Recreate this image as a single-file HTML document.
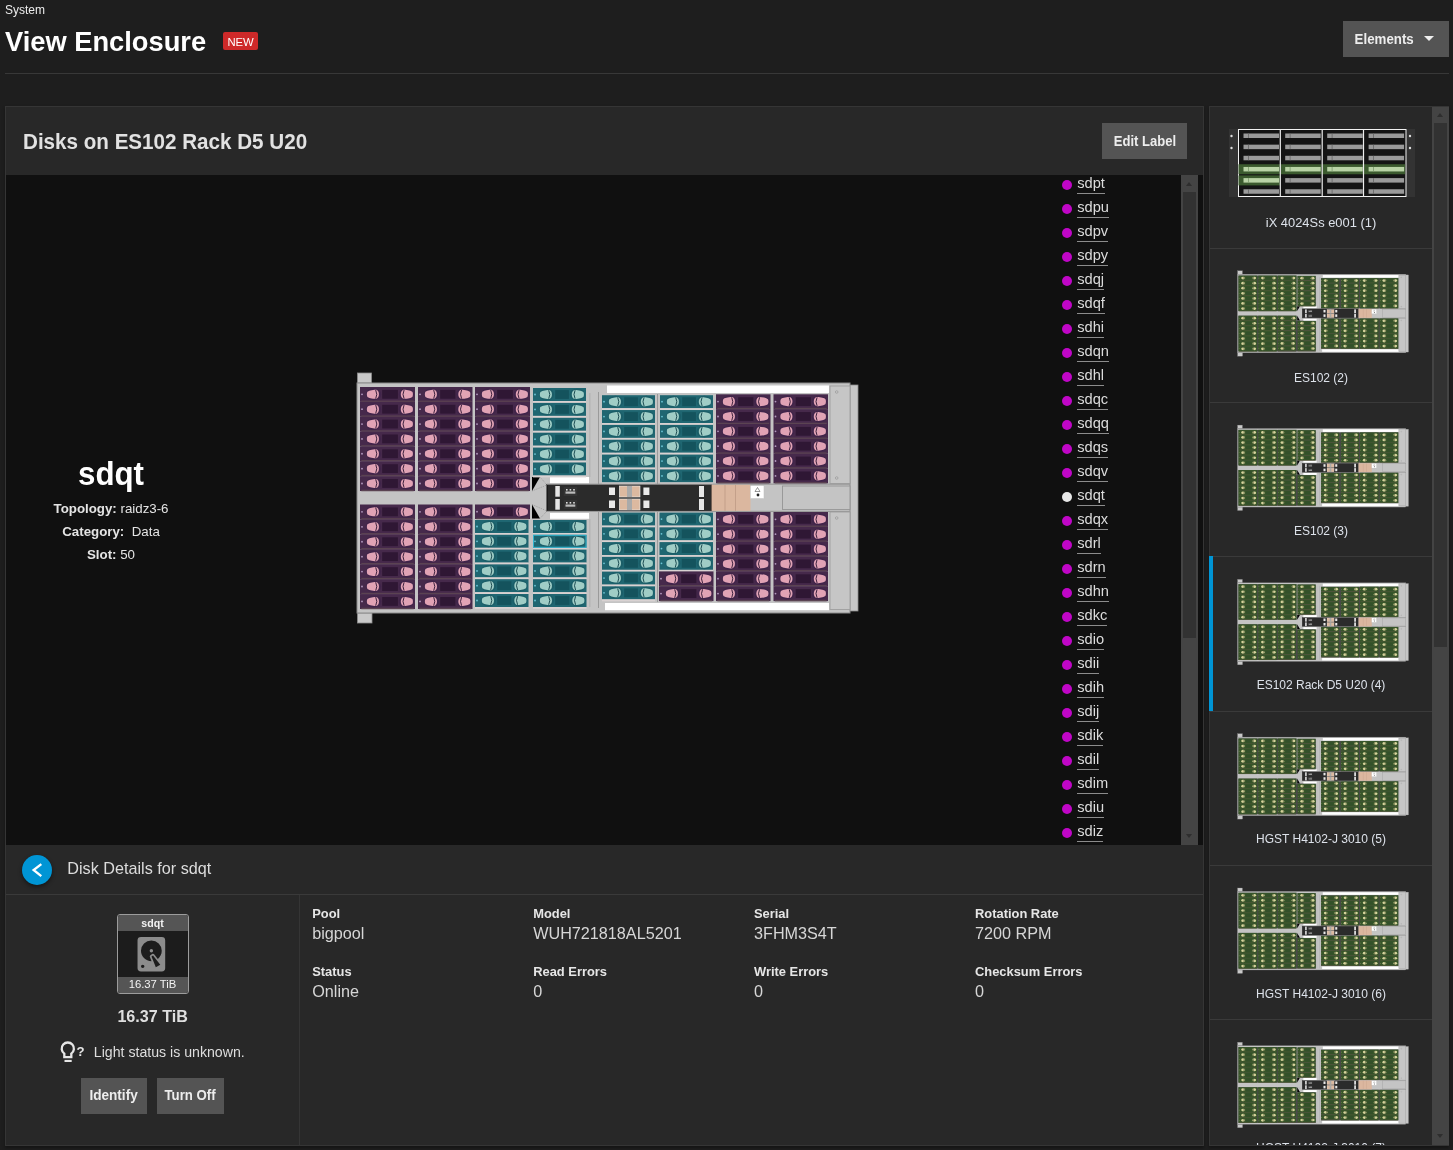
<!DOCTYPE html>
<html><head><meta charset="utf-8"><title>View Enclosure</title>
<style>
html,body{margin:0;padding:0;}
body{width:1453px;height:1150px;overflow:hidden;background:#1e1e1e;position:relative;will-change:transform;font-family:"Liberation Sans",sans-serif;color:#e0e0e0;}
.a{position:absolute;}
.t{position:absolute;white-space:nowrap;line-height:1;}
.b{font-weight:bold;}
.btn{position:absolute;background:#545454;}
.li{position:absolute;left:1061px;height:24px;width:60px;}
.li i{position:absolute;left:0.7px;top:7px;width:10px;height:10px;border-radius:50%;}
.li span{position:absolute;left:16.2px;top:2.7px;font-size:14.65px;line-height:14.65px;padding-bottom:3px;border-bottom:1px solid #8c8c8c;color:#dcdcdc;white-space:nowrap;}
.lbl{position:absolute;white-space:nowrap;line-height:1;font-size:12.9px;font-weight:bold;color:#e6e6e6;}
.val{position:absolute;white-space:nowrap;line-height:1;font-size:16.2px;color:#d6d6d6;}
.sl{position:absolute;left:1210px;width:222px;text-align:center;font-size:12px;line-height:1;color:#dde2ea;white-space:nowrap;}
.dv{position:absolute;left:1210px;width:222px;height:1px;background:#3a3a3a;}
</style></head>
<body>
<!-- page header -->
<div class="t" style="left:5px;top:4.1px;font-size:12px;color:#ececec;">System</div>
<div class="t b" style="left:5px;top:26.5px;font-size:28.5px;color:#ffffff;transform:scaleX(0.957);transform-origin:0 0;">View Enclosure</div>
<div class="a" style="left:223px;top:32px;width:35px;height:18px;background:#ce2929;border-radius:2px;"></div>
<div class="t" style="left:227.4px;top:36.6px;font-size:11.3px;color:#fff;">NEW</div>
<div class="btn" style="left:1343px;top:21px;width:106px;height:36px;"></div>
<div class="t b" style="left:1354.6px;top:32.6px;font-size:13.3px;color:#ededed;transform:scale(1,1.13);transform-origin:0 11.26px;">Elements</div>
<div class="a" style="left:1423.6px;top:35.8px;width:0;height:0;border-left:5.2px solid transparent;border-right:5.2px solid transparent;border-top:5.5px solid #eeeeee;"></div>
<div class="a" style="left:5px;top:73px;width:1444px;height:1px;background:#383838;"></div>

<!-- main card -->
<div class="a" style="left:5px;top:106px;width:1197px;height:1038px;border:1px solid #353535;background:#282828;box-shadow:0 2px 3px rgba(0,0,0,0.35);"></div>
<div class="t b" style="left:22.8px;top:130.5px;font-size:22.5px;color:#e2e2e2;transform:scaleX(0.916);transform-origin:0 0;">Disks on ES102 Rack D5 U20</div>
<div class="btn" style="left:1102px;top:123px;width:85px;height:36px;"></div>
<div class="t b" style="left:1113.8px;top:134.5px;font-size:13.06px;color:#ededed;transform:scale(1,1.13);transform-origin:0 11.06px;">Edit Label</div>
<div class="a" style="left:6px;top:175px;width:1197px;height:670px;background:#101010;"></div>

<!-- selected disk info -->
<div class="t b" style="left:111px;top:456px;font-size:34px;color:#ffffff;transform:translateX(-50%) scaleX(0.92);">sdqt</div>
<div class="t" style="left:111px;top:502px;font-size:13.3px;color:#e4e4e4;transform:translateX(-50%);"><b>Topology:</b> raidz3-6</div>
<div class="t" style="left:111px;top:525px;font-size:13.3px;color:#e4e4e4;transform:translateX(-50%);"><b>Category:</b>&nbsp; Data</div>
<div class="t" style="left:111px;top:548px;font-size:13.3px;color:#e4e4e4;transform:translateX(-50%);"><b>Slot:</b> 50</div>

<!-- disk list -->
<div class="li" style="top:173px"><i style="background:#c006c7"></i><span>sdpt</span></div><div class="li" style="top:197px"><i style="background:#c006c7"></i><span>sdpu</span></div><div class="li" style="top:221px"><i style="background:#c006c7"></i><span>sdpv</span></div><div class="li" style="top:245px"><i style="background:#c006c7"></i><span>sdpy</span></div><div class="li" style="top:269px"><i style="background:#c006c7"></i><span>sdqj</span></div><div class="li" style="top:293px"><i style="background:#c006c7"></i><span>sdqf</span></div><div class="li" style="top:317px"><i style="background:#c006c7"></i><span>sdhi</span></div><div class="li" style="top:341px"><i style="background:#c006c7"></i><span>sdqn</span></div><div class="li" style="top:365px"><i style="background:#c006c7"></i><span>sdhl</span></div><div class="li" style="top:389px"><i style="background:#c006c7"></i><span>sdqc</span></div><div class="li" style="top:413px"><i style="background:#c006c7"></i><span>sdqq</span></div><div class="li" style="top:437px"><i style="background:#c006c7"></i><span>sdqs</span></div><div class="li" style="top:461px"><i style="background:#c006c7"></i><span>sdqv</span></div><div class="li" style="top:485px"><i style="background:#e8e8e8"></i><span>sdqt</span></div><div class="li" style="top:509px"><i style="background:#c006c7"></i><span>sdqx</span></div><div class="li" style="top:533px"><i style="background:#c006c7"></i><span>sdrl</span></div><div class="li" style="top:557px"><i style="background:#c006c7"></i><span>sdrn</span></div><div class="li" style="top:581px"><i style="background:#c006c7"></i><span>sdhn</span></div><div class="li" style="top:605px"><i style="background:#c006c7"></i><span>sdkc</span></div><div class="li" style="top:629px"><i style="background:#c006c7"></i><span>sdio</span></div><div class="li" style="top:653px"><i style="background:#c006c7"></i><span>sdii</span></div><div class="li" style="top:677px"><i style="background:#c006c7"></i><span>sdih</span></div><div class="li" style="top:701px"><i style="background:#c006c7"></i><span>sdij</span></div><div class="li" style="top:725px"><i style="background:#c006c7"></i><span>sdik</span></div><div class="li" style="top:749px"><i style="background:#c006c7"></i><span>sdil</span></div><div class="li" style="top:773px"><i style="background:#c006c7"></i><span>sdim</span></div><div class="li" style="top:797px"><i style="background:#c006c7"></i><span>sdiu</span></div><div class="li" style="top:821px"><i style="background:#c006c7"></i><span>sdiz</span></div>
<div class="a" style="left:1181px;top:175px;width:17px;height:670px;background:#444444;"></div>
<div class="a" style="left:1183px;top:192px;width:13px;height:446px;background:#323232;"></div>
<div class="a" style="left:1186px;top:182px;width:0;height:0;border-left:3.6px solid transparent;border-right:3.6px solid transparent;border-bottom:4px solid #2e2e2e;"></div>
<div class="a" style="left:1186px;top:834px;width:0;height:0;border-left:3.6px solid transparent;border-right:3.6px solid transparent;border-top:4px solid #2e2e2e;"></div>

<!-- details header -->
<div class="a" style="left:22px;top:855px;width:30px;height:30px;border-radius:50%;background:#0095d5;box-shadow:0 2px 4px rgba(0,0,0,0.45);"></div>
<svg class="a" style="left:22px;top:855px;" width="30" height="30"><path d="M18.4 9.8L11.6 15l6.8 5.4" stroke="#fff" stroke-width="2.3" fill="none" stroke-linecap="square"/></svg>
<div class="t" style="left:67.3px;top:859.6px;font-size:16.2px;color:#dcdcdc;">Disk Details for sdqt</div>
<div class="a" style="left:6px;top:894px;width:1197px;height:1px;background:#3a3a3a;"></div>
<div class="a" style="left:299px;top:895px;width:1px;height:250px;background:#353535;"></div>

<!-- disk icon -->
<div class="a" style="left:117px;top:914px;width:70px;height:78px;border:1px solid #9c9c9c;border-radius:3px;background:#1c1c1c;overflow:hidden;">
  <div class="a" style="left:0;top:0;width:70px;height:16px;background:#555;"></div>
  <div class="a" style="left:0;top:62px;width:70px;height:16px;background:#555;"></div>
</div>
<div class="t b" style="left:152.5px;top:917.6px;font-size:10.6px;color:#f2f2f2;transform:translateX(-50%);">sdqt</div>
<div class="t" style="left:152.5px;top:979.1px;font-size:11.3px;color:#f2f2f2;transform:translateX(-50%);">16.37 TiB</div>
<svg class="a" style="left:0;top:0;" width="300" height="1150" viewBox="0 0 300 1150"><g transform="translate(130.6 933.5) scale(1.73)"><path fill="#8c8c8c" d="M6,2H18A2,2 0 0,1 20,4V20A2,2 0 0,1 18,22H6A2,2 0 0,1 4,20V4A2,2 0 0,1 6,2M12,4A6,6 0 0,0 6,10C6,13.31 8.69,16 12.1,16L11.22,13.77C10.95,13.29 11.11,12.68 11.59,12.4L12.45,11.9C12.93,11.63 13.54,11.79 13.820,12.27L15.74,14.690C17.12,13.59 18,11.9 18,10A6,6 0 0,0 12,4M12,9A1,1 0 0,1 13,10A1,1 0 0,1 12,11A1,1 0 0,1 11,10A1,1 0 0,1 12,9M7,18A1,1 0 0,0 6,19A1,1 0 0,0 7,20A1,1 0 0,0 8,19A1,1 0 0,0 7,18M12.09,13.27L14.58,19.58L17.17,18.08L12.95,12.77L12.09,13.27Z"/></g></svg>
<div class="t b" style="left:117.4px;top:1008.1px;font-size:16.14px;color:#dedede;">16.37 TiB</div>
<svg class="a" style="left:0;top:1000px;" width="100" height="80" viewBox="0 1000 100 80">
  <path d="M64.3 1057.2V1053.6A6.1 6.1 0 1 1 71.3 1053.6V1057.2Z" fill="none" stroke="#e6e6e6" stroke-width="2.3"/>
  <rect x="64.5" y="1059.9" width="7.2" height="2.1" fill="#e6e6e6"/>
  <text x="76.5" y="1056" font-size="13.2" font-weight="bold" fill="#e6e6e6" font-family="Liberation Sans">?</text>
</svg>
<div class="t" style="left:93.8px;top:1045.2px;font-size:14.15px;color:#dedede;">Light status is unknown.</div>
<div class="btn" style="left:81px;top:1078px;width:66px;height:36px;"></div>
<div class="t b" style="left:89.4px;top:1089.3px;font-size:13.6px;color:#ededed;transform:scale(1,1.1);transform-origin:0 11.5px;">Identify</div>
<div class="btn" style="left:157px;top:1078px;width:67px;height:36px;"></div>
<div class="t b" style="left:164.5px;top:1089.3px;font-size:13.2px;color:#ededed;transform:scale(1,1.12);transform-origin:0 11.2px;">Turn Off</div>

<!-- fields -->
<div class="lbl" style="left:312.2px;top:907.9px;">Pool</div>
<div class="val" style="left:312.2px;top:924.8px;">bigpool</div>
<div class="lbl" style="left:312.2px;top:965.7px;">Status</div>
<div class="val" style="left:312.2px;top:982.9px;">Online</div>
<div class="lbl" style="left:533.2px;top:907.9px;">Model</div>
<div class="val" style="left:533.2px;top:924.8px;">WUH721818AL5201</div>
<div class="lbl" style="left:533.2px;top:965.7px;">Read Errors</div>
<div class="val" style="left:533.2px;top:982.9px;">0</div>
<div class="lbl" style="left:754px;top:907.9px;">Serial</div>
<div class="val" style="left:754px;top:924.8px;">3FHM3S4T</div>
<div class="lbl" style="left:754px;top:965.7px;">Write Errors</div>
<div class="val" style="left:754px;top:982.9px;">0</div>
<div class="lbl" style="left:975px;top:907.9px;">Rotation Rate</div>
<div class="val" style="left:975px;top:924.8px;">7200 RPM</div>
<div class="lbl" style="left:975px;top:965.7px;">Checksum Errors</div>
<div class="val" style="left:975px;top:982.9px;">0</div>

<!-- sidebar -->
<div class="a" style="left:1209px;top:106px;width:238px;height:1038px;border:1px solid #353535;background:#282828;box-shadow:0 2px 3px rgba(0,0,0,0.35);"></div>
<div class="dv" style="top:248px"></div>
<div class="dv" style="top:402px"></div>
<div class="dv" style="top:556px"></div>
<div class="dv" style="top:711px"></div>
<div class="dv" style="top:865px"></div>
<div class="dv" style="top:1019px"></div>
<div class="a" style="left:1209px;top:556px;width:4px;height:155px;background:#0095d5;"></div>
<div class="a" style="left:1210px;top:107px;width:222px;height:1038px;overflow:hidden;">
  <div class="t" style="left:0;width:222px;text-align:center;top:110.2px;font-size:12.9px;color:#dde2ea;">iX 4024Ss e001 (1)</div>
  <div class="t" style="left:0;width:222px;text-align:center;top:264.8px;font-size:12px;color:#dde2ea;">ES102 (2)</div>
  <div class="t" style="left:0;width:222px;text-align:center;top:418.4px;font-size:12px;color:#dde2ea;">ES102 (3)</div>
  <div class="t" style="left:0;width:222px;text-align:center;top:571.8px;font-size:12px;color:#dde2ea;">ES102 Rack D5 U20 (4)</div>
  <div class="t" style="left:0;width:222px;text-align:center;top:726.4px;font-size:12px;color:#dde2ea;">HGST H4102-J 3010 (5)</div>
  <div class="t" style="left:0;width:222px;text-align:center;top:880.6px;font-size:12px;color:#dde2ea;">HGST H4102-J 3010 (6)</div>
  <div class="t" style="left:0;width:222px;text-align:center;top:1034.8px;font-size:12px;color:#dde2ea;">HGST H4102-J 3010 (7)</div>
</div>
<div class="a" style="left:1432px;top:107px;width:17px;height:1038px;background:#444444;"></div>
<div class="a" style="left:1434px;top:123px;width:13px;height:524px;background:#323232;"></div>
<div class="a" style="left:1437px;top:113px;width:0;height:0;border-left:3.6px solid transparent;border-right:3.6px solid transparent;border-bottom:4px solid #2e2e2e;"></div>
<div class="a" style="left:1437px;top:1134px;width:0;height:0;border-left:3.6px solid transparent;border-right:3.6px solid transparent;border-top:4px solid #2e2e2e;"></div>

<svg class="a" style="left:0;top:0;pointer-events:none;" width="1453" height="1150" viewBox="0 0 1453 1150">
<defs><g id="encg"><rect x="357.5" y="373" width="14" height="10" fill="#c9c9c9" stroke="#8c8c8c" stroke-width="0.8"/><rect x="357.5" y="613" width="14.5" height="10" fill="#c9c9c9" stroke="#8c8c8c" stroke-width="0.8"/><rect x="849" y="385" width="9" height="226" fill="#c6c6c6" stroke="#8c8c8c" stroke-width="0.8"/><rect x="357" y="383" width="493" height="230" fill="#c4c4c4" stroke="#8a8a8a" stroke-width="1"/><rect x="598" y="392" width="1" height="216" fill="#9a9a9a"/><rect x="589.5" y="393" width="0.8" height="84" fill="#a8a8a8"/><rect x="589.5" y="519" width="0.8" height="88" fill="#a8a8a8"/><rect x="657" y="394" width="1" height="90" fill="#9a9a9a"/><rect x="657" y="512" width="1" height="90" fill="#9a9a9a"/><rect x="360" y="387" width="170" height="104" fill="#4a4a4a"/><rect x="533" y="388" width="53" height="88" fill="#4a4a4a"/><rect x="360" y="504.5" width="170" height="104.5" fill="#4a4a4a"/><rect x="475" y="519" width="111" height="90" fill="#4a4a4a"/><rect x="602" y="394.3" width="226" height="89" fill="#4a4a4a"/><rect x="602" y="512" width="226" height="89.5" fill="#4a4a4a"/><rect x="607" y="385.5" width="222" height="7.5" fill="#ffffff"/><rect x="605" y="603" width="224" height="7.2" fill="#ffffff"/><rect x="550" y="477" width="39" height="6.3" fill="#ffffff"/><rect x="550" y="513" width="39" height="5.8" fill="#ffffff"/><path d="M532 477H540L532 491Z" fill="#000"/><path d="M532 504.5V518.5H540Z" fill="#000"/><path d="M540 477L547 485M532 491L547 485M532 504.5L547 511M540 518.5L547 511" stroke="#777" stroke-width="0.5" stroke-dasharray="1 1" fill="none"/><rect x="830" y="386" width="20" height="97.5" fill="#c6c6c6" stroke="#9a9a9a" stroke-width="0.8"/><rect x="830" y="512" width="20" height="97.5" fill="#c6c6c6" stroke="#9a9a9a" stroke-width="0.8"/><circle cx="836.7" cy="392" r="1.3" fill="none" stroke="#888" stroke-width="0.5"/><circle cx="836.7" cy="478" r="1.3" fill="none" stroke="#888" stroke-width="0.5"/><circle cx="836.7" cy="518" r="1.3" fill="none" stroke="#888" stroke-width="0.5"/><rect x="360" y="387" width="55" height="14.86" fill="#38562a"/><rect x="361.3" y="400.56" width="52.4" height="1.5" fill="#56583c"/><ellipse cx="373.5" cy="394.33" rx="7.6" ry="6" fill="#38562a"/><ellipse cx="406.3" cy="394.33" rx="7.6" ry="6" fill="#38562a"/><rect x="382.2" y="389.93" width="15.7" height="8.8" fill="#33502a"/><ellipse cx="373.5" cy="394.33" rx="5.4" ry="4.0" fill="#d6d39c"/><ellipse cx="406.3" cy="394.33" rx="5.4" ry="4.0" fill="#d6d39c"/><path d="M375.7 390.63q2.2 3.7 0 7.4" stroke="#2a3a1a" stroke-width="1.6" fill="none"/><path d="M404.1 390.63q-2.2 3.7 0 7.4" stroke="#2a3a1a" stroke-width="1.6" fill="none"/><circle cx="362" cy="394.33" r="0.9" fill="#c8c890"/><rect x="360" y="401.86" width="55" height="14.86" fill="#38562a"/><rect x="361.3" y="415.42" width="52.4" height="1.5" fill="#56583c"/><ellipse cx="373.5" cy="409.19" rx="7.6" ry="6" fill="#38562a"/><ellipse cx="406.3" cy="409.19" rx="7.6" ry="6" fill="#38562a"/><rect x="382.2" y="404.79" width="15.7" height="8.8" fill="#33502a"/><ellipse cx="373.5" cy="409.19" rx="5.4" ry="4.0" fill="#d6d39c"/><ellipse cx="406.3" cy="409.19" rx="5.4" ry="4.0" fill="#d6d39c"/><path d="M375.7 405.49q2.2 3.7 0 7.4" stroke="#2a3a1a" stroke-width="1.6" fill="none"/><path d="M404.1 405.49q-2.2 3.7 0 7.4" stroke="#2a3a1a" stroke-width="1.6" fill="none"/><circle cx="362" cy="409.19" r="0.9" fill="#c8c890"/><rect x="360" y="416.72" width="55" height="14.86" fill="#38562a"/><rect x="361.3" y="430.28" width="52.4" height="1.5" fill="#56583c"/><ellipse cx="373.5" cy="424.05" rx="7.6" ry="6" fill="#38562a"/><ellipse cx="406.3" cy="424.05" rx="7.6" ry="6" fill="#38562a"/><rect x="382.2" y="419.65" width="15.7" height="8.8" fill="#33502a"/><ellipse cx="373.5" cy="424.05" rx="5.4" ry="4.0" fill="#d6d39c"/><ellipse cx="406.3" cy="424.05" rx="5.4" ry="4.0" fill="#d6d39c"/><path d="M375.7 420.35q2.2 3.7 0 7.4" stroke="#2a3a1a" stroke-width="1.6" fill="none"/><path d="M404.1 420.35q-2.2 3.7 0 7.4" stroke="#2a3a1a" stroke-width="1.6" fill="none"/><circle cx="362" cy="424.05" r="0.9" fill="#c8c890"/><rect x="360" y="431.58" width="55" height="14.86" fill="#38562a"/><rect x="361.3" y="445.14" width="52.4" height="1.5" fill="#56583c"/><ellipse cx="373.5" cy="438.91" rx="7.6" ry="6" fill="#38562a"/><ellipse cx="406.3" cy="438.91" rx="7.6" ry="6" fill="#38562a"/><rect x="382.2" y="434.51" width="15.7" height="8.8" fill="#33502a"/><ellipse cx="373.5" cy="438.91" rx="5.4" ry="4.0" fill="#d6d39c"/><ellipse cx="406.3" cy="438.91" rx="5.4" ry="4.0" fill="#d6d39c"/><path d="M375.7 435.21q2.2 3.7 0 7.4" stroke="#2a3a1a" stroke-width="1.6" fill="none"/><path d="M404.1 435.21q-2.2 3.7 0 7.4" stroke="#2a3a1a" stroke-width="1.6" fill="none"/><circle cx="362" cy="438.91" r="0.9" fill="#c8c890"/><rect x="360" y="446.44" width="55" height="14.86" fill="#38562a"/><rect x="361.3" y="460" width="52.4" height="1.5" fill="#56583c"/><ellipse cx="373.5" cy="453.77" rx="7.6" ry="6" fill="#38562a"/><ellipse cx="406.3" cy="453.77" rx="7.6" ry="6" fill="#38562a"/><rect x="382.2" y="449.37" width="15.7" height="8.8" fill="#33502a"/><ellipse cx="373.5" cy="453.77" rx="5.4" ry="4.0" fill="#d6d39c"/><ellipse cx="406.3" cy="453.77" rx="5.4" ry="4.0" fill="#d6d39c"/><path d="M375.7 450.07q2.2 3.7 0 7.4" stroke="#2a3a1a" stroke-width="1.6" fill="none"/><path d="M404.1 450.07q-2.2 3.7 0 7.4" stroke="#2a3a1a" stroke-width="1.6" fill="none"/><circle cx="362" cy="453.77" r="0.9" fill="#c8c890"/><rect x="360" y="461.3" width="55" height="14.86" fill="#38562a"/><rect x="361.3" y="474.86" width="52.4" height="1.5" fill="#56583c"/><ellipse cx="373.5" cy="468.63" rx="7.6" ry="6" fill="#38562a"/><ellipse cx="406.3" cy="468.63" rx="7.6" ry="6" fill="#38562a"/><rect x="382.2" y="464.23" width="15.7" height="8.8" fill="#33502a"/><ellipse cx="373.5" cy="468.63" rx="5.4" ry="4.0" fill="#d6d39c"/><ellipse cx="406.3" cy="468.63" rx="5.4" ry="4.0" fill="#d6d39c"/><path d="M375.7 464.93q2.2 3.7 0 7.4" stroke="#2a3a1a" stroke-width="1.6" fill="none"/><path d="M404.1 464.93q-2.2 3.7 0 7.4" stroke="#2a3a1a" stroke-width="1.6" fill="none"/><circle cx="362" cy="468.63" r="0.9" fill="#c8c890"/><rect x="360" y="476.16" width="55" height="14.86" fill="#38562a"/><rect x="361.3" y="489.72" width="52.4" height="1.5" fill="#56583c"/><ellipse cx="373.5" cy="483.49" rx="7.6" ry="6" fill="#38562a"/><ellipse cx="406.3" cy="483.49" rx="7.6" ry="6" fill="#38562a"/><rect x="382.2" y="479.09" width="15.7" height="8.8" fill="#33502a"/><ellipse cx="373.5" cy="483.49" rx="5.4" ry="4.0" fill="#d6d39c"/><ellipse cx="406.3" cy="483.49" rx="5.4" ry="4.0" fill="#d6d39c"/><path d="M375.7 479.79q2.2 3.7 0 7.4" stroke="#2a3a1a" stroke-width="1.6" fill="none"/><path d="M404.1 479.79q-2.2 3.7 0 7.4" stroke="#2a3a1a" stroke-width="1.6" fill="none"/><circle cx="362" cy="483.49" r="0.9" fill="#c8c890"/><rect x="418" y="387" width="54.5" height="14.86" fill="#38562a"/><rect x="419.3" y="400.56" width="51.9" height="1.5" fill="#56583c"/><ellipse cx="431.5" cy="394.33" rx="7.6" ry="6" fill="#38562a"/><ellipse cx="463.8" cy="394.33" rx="7.6" ry="6" fill="#38562a"/><rect x="440.2" y="389.93" width="15.2" height="8.8" fill="#33502a"/><ellipse cx="431.5" cy="394.33" rx="5.4" ry="4.0" fill="#d6d39c"/><ellipse cx="463.8" cy="394.33" rx="5.4" ry="4.0" fill="#d6d39c"/><path d="M433.7 390.63q2.2 3.7 0 7.4" stroke="#2a3a1a" stroke-width="1.6" fill="none"/><path d="M461.6 390.63q-2.2 3.7 0 7.4" stroke="#2a3a1a" stroke-width="1.6" fill="none"/><circle cx="420" cy="394.33" r="0.9" fill="#c8c890"/><rect x="418" y="401.86" width="54.5" height="14.86" fill="#38562a"/><rect x="419.3" y="415.42" width="51.9" height="1.5" fill="#56583c"/><ellipse cx="431.5" cy="409.19" rx="7.6" ry="6" fill="#38562a"/><ellipse cx="463.8" cy="409.19" rx="7.6" ry="6" fill="#38562a"/><rect x="440.2" y="404.79" width="15.2" height="8.8" fill="#33502a"/><ellipse cx="431.5" cy="409.19" rx="5.4" ry="4.0" fill="#d6d39c"/><ellipse cx="463.8" cy="409.19" rx="5.4" ry="4.0" fill="#d6d39c"/><path d="M433.7 405.49q2.2 3.7 0 7.4" stroke="#2a3a1a" stroke-width="1.6" fill="none"/><path d="M461.6 405.49q-2.2 3.7 0 7.4" stroke="#2a3a1a" stroke-width="1.6" fill="none"/><circle cx="420" cy="409.19" r="0.9" fill="#c8c890"/><rect x="418" y="416.72" width="54.5" height="14.86" fill="#38562a"/><rect x="419.3" y="430.28" width="51.9" height="1.5" fill="#56583c"/><ellipse cx="431.5" cy="424.05" rx="7.6" ry="6" fill="#38562a"/><ellipse cx="463.8" cy="424.05" rx="7.6" ry="6" fill="#38562a"/><rect x="440.2" y="419.65" width="15.2" height="8.8" fill="#33502a"/><ellipse cx="431.5" cy="424.05" rx="5.4" ry="4.0" fill="#d6d39c"/><ellipse cx="463.8" cy="424.05" rx="5.4" ry="4.0" fill="#d6d39c"/><path d="M433.7 420.35q2.2 3.7 0 7.4" stroke="#2a3a1a" stroke-width="1.6" fill="none"/><path d="M461.6 420.35q-2.2 3.7 0 7.4" stroke="#2a3a1a" stroke-width="1.6" fill="none"/><circle cx="420" cy="424.05" r="0.9" fill="#c8c890"/><rect x="418" y="431.58" width="54.5" height="14.86" fill="#38562a"/><rect x="419.3" y="445.14" width="51.9" height="1.5" fill="#56583c"/><ellipse cx="431.5" cy="438.91" rx="7.6" ry="6" fill="#38562a"/><ellipse cx="463.8" cy="438.91" rx="7.6" ry="6" fill="#38562a"/><rect x="440.2" y="434.51" width="15.2" height="8.8" fill="#33502a"/><ellipse cx="431.5" cy="438.91" rx="5.4" ry="4.0" fill="#d6d39c"/><ellipse cx="463.8" cy="438.91" rx="5.4" ry="4.0" fill="#d6d39c"/><path d="M433.7 435.21q2.2 3.7 0 7.4" stroke="#2a3a1a" stroke-width="1.6" fill="none"/><path d="M461.6 435.21q-2.2 3.7 0 7.4" stroke="#2a3a1a" stroke-width="1.6" fill="none"/><circle cx="420" cy="438.91" r="0.9" fill="#c8c890"/><rect x="418" y="446.44" width="54.5" height="14.86" fill="#38562a"/><rect x="419.3" y="460" width="51.9" height="1.5" fill="#56583c"/><ellipse cx="431.5" cy="453.77" rx="7.6" ry="6" fill="#38562a"/><ellipse cx="463.8" cy="453.77" rx="7.6" ry="6" fill="#38562a"/><rect x="440.2" y="449.37" width="15.2" height="8.8" fill="#33502a"/><ellipse cx="431.5" cy="453.77" rx="5.4" ry="4.0" fill="#d6d39c"/><ellipse cx="463.8" cy="453.77" rx="5.4" ry="4.0" fill="#d6d39c"/><path d="M433.7 450.07q2.2 3.7 0 7.4" stroke="#2a3a1a" stroke-width="1.6" fill="none"/><path d="M461.6 450.07q-2.2 3.7 0 7.4" stroke="#2a3a1a" stroke-width="1.6" fill="none"/><circle cx="420" cy="453.77" r="0.9" fill="#c8c890"/><rect x="418" y="461.3" width="54.5" height="14.86" fill="#38562a"/><rect x="419.3" y="474.86" width="51.9" height="1.5" fill="#56583c"/><ellipse cx="431.5" cy="468.63" rx="7.6" ry="6" fill="#38562a"/><ellipse cx="463.8" cy="468.63" rx="7.6" ry="6" fill="#38562a"/><rect x="440.2" y="464.23" width="15.2" height="8.8" fill="#33502a"/><ellipse cx="431.5" cy="468.63" rx="5.4" ry="4.0" fill="#d6d39c"/><ellipse cx="463.8" cy="468.63" rx="5.4" ry="4.0" fill="#d6d39c"/><path d="M433.7 464.93q2.2 3.7 0 7.4" stroke="#2a3a1a" stroke-width="1.6" fill="none"/><path d="M461.6 464.93q-2.2 3.7 0 7.4" stroke="#2a3a1a" stroke-width="1.6" fill="none"/><circle cx="420" cy="468.63" r="0.9" fill="#c8c890"/><rect x="418" y="476.16" width="54.5" height="14.86" fill="#38562a"/><rect x="419.3" y="489.72" width="51.9" height="1.5" fill="#56583c"/><ellipse cx="431.5" cy="483.49" rx="7.6" ry="6" fill="#38562a"/><ellipse cx="463.8" cy="483.49" rx="7.6" ry="6" fill="#38562a"/><rect x="440.2" y="479.09" width="15.2" height="8.8" fill="#33502a"/><ellipse cx="431.5" cy="483.49" rx="5.4" ry="4.0" fill="#d6d39c"/><ellipse cx="463.8" cy="483.49" rx="5.4" ry="4.0" fill="#d6d39c"/><path d="M433.7 479.79q2.2 3.7 0 7.4" stroke="#2a3a1a" stroke-width="1.6" fill="none"/><path d="M461.6 479.79q-2.2 3.7 0 7.4" stroke="#2a3a1a" stroke-width="1.6" fill="none"/><circle cx="420" cy="483.49" r="0.9" fill="#c8c890"/><rect x="475" y="387" width="55" height="14.86" fill="#38562a"/><rect x="476.3" y="400.56" width="52.4" height="1.5" fill="#56583c"/><ellipse cx="488.5" cy="394.33" rx="7.6" ry="6" fill="#38562a"/><ellipse cx="521.3" cy="394.33" rx="7.6" ry="6" fill="#38562a"/><rect x="497.2" y="389.93" width="15.7" height="8.8" fill="#33502a"/><ellipse cx="488.5" cy="394.33" rx="5.4" ry="4.0" fill="#d6d39c"/><ellipse cx="521.3" cy="394.33" rx="5.4" ry="4.0" fill="#d6d39c"/><path d="M490.7 390.63q2.2 3.7 0 7.4" stroke="#2a3a1a" stroke-width="1.6" fill="none"/><path d="M519.1 390.63q-2.2 3.7 0 7.4" stroke="#2a3a1a" stroke-width="1.6" fill="none"/><circle cx="477" cy="394.33" r="0.9" fill="#c8c890"/><rect x="475" y="401.86" width="55" height="14.86" fill="#38562a"/><rect x="476.3" y="415.42" width="52.4" height="1.5" fill="#56583c"/><ellipse cx="488.5" cy="409.19" rx="7.6" ry="6" fill="#38562a"/><ellipse cx="521.3" cy="409.19" rx="7.6" ry="6" fill="#38562a"/><rect x="497.2" y="404.79" width="15.7" height="8.8" fill="#33502a"/><ellipse cx="488.5" cy="409.19" rx="5.4" ry="4.0" fill="#d6d39c"/><ellipse cx="521.3" cy="409.19" rx="5.4" ry="4.0" fill="#d6d39c"/><path d="M490.7 405.49q2.2 3.7 0 7.4" stroke="#2a3a1a" stroke-width="1.6" fill="none"/><path d="M519.1 405.49q-2.2 3.7 0 7.4" stroke="#2a3a1a" stroke-width="1.6" fill="none"/><circle cx="477" cy="409.19" r="0.9" fill="#c8c890"/><rect x="475" y="416.72" width="55" height="14.86" fill="#38562a"/><rect x="476.3" y="430.28" width="52.4" height="1.5" fill="#56583c"/><ellipse cx="488.5" cy="424.05" rx="7.6" ry="6" fill="#38562a"/><ellipse cx="521.3" cy="424.05" rx="7.6" ry="6" fill="#38562a"/><rect x="497.2" y="419.65" width="15.7" height="8.8" fill="#33502a"/><ellipse cx="488.5" cy="424.05" rx="5.4" ry="4.0" fill="#d6d39c"/><ellipse cx="521.3" cy="424.05" rx="5.4" ry="4.0" fill="#d6d39c"/><path d="M490.7 420.35q2.2 3.7 0 7.4" stroke="#2a3a1a" stroke-width="1.6" fill="none"/><path d="M519.1 420.35q-2.2 3.7 0 7.4" stroke="#2a3a1a" stroke-width="1.6" fill="none"/><circle cx="477" cy="424.05" r="0.9" fill="#c8c890"/><rect x="475" y="431.58" width="55" height="14.86" fill="#38562a"/><rect x="476.3" y="445.14" width="52.4" height="1.5" fill="#56583c"/><ellipse cx="488.5" cy="438.91" rx="7.6" ry="6" fill="#38562a"/><ellipse cx="521.3" cy="438.91" rx="7.6" ry="6" fill="#38562a"/><rect x="497.2" y="434.51" width="15.7" height="8.8" fill="#33502a"/><ellipse cx="488.5" cy="438.91" rx="5.4" ry="4.0" fill="#d6d39c"/><ellipse cx="521.3" cy="438.91" rx="5.4" ry="4.0" fill="#d6d39c"/><path d="M490.7 435.21q2.2 3.7 0 7.4" stroke="#2a3a1a" stroke-width="1.6" fill="none"/><path d="M519.1 435.21q-2.2 3.7 0 7.4" stroke="#2a3a1a" stroke-width="1.6" fill="none"/><circle cx="477" cy="438.91" r="0.9" fill="#c8c890"/><rect x="475" y="446.44" width="55" height="14.86" fill="#38562a"/><rect x="476.3" y="460" width="52.4" height="1.5" fill="#56583c"/><ellipse cx="488.5" cy="453.77" rx="7.6" ry="6" fill="#38562a"/><ellipse cx="521.3" cy="453.77" rx="7.6" ry="6" fill="#38562a"/><rect x="497.2" y="449.37" width="15.7" height="8.8" fill="#33502a"/><ellipse cx="488.5" cy="453.77" rx="5.4" ry="4.0" fill="#d6d39c"/><ellipse cx="521.3" cy="453.77" rx="5.4" ry="4.0" fill="#d6d39c"/><path d="M490.7 450.07q2.2 3.7 0 7.4" stroke="#2a3a1a" stroke-width="1.6" fill="none"/><path d="M519.1 450.07q-2.2 3.7 0 7.4" stroke="#2a3a1a" stroke-width="1.6" fill="none"/><circle cx="477" cy="453.77" r="0.9" fill="#c8c890"/><rect x="475" y="461.3" width="55" height="14.86" fill="#38562a"/><rect x="476.3" y="474.86" width="52.4" height="1.5" fill="#56583c"/><ellipse cx="488.5" cy="468.63" rx="7.6" ry="6" fill="#38562a"/><ellipse cx="521.3" cy="468.63" rx="7.6" ry="6" fill="#38562a"/><rect x="497.2" y="464.23" width="15.7" height="8.8" fill="#33502a"/><ellipse cx="488.5" cy="468.63" rx="5.4" ry="4.0" fill="#d6d39c"/><ellipse cx="521.3" cy="468.63" rx="5.4" ry="4.0" fill="#d6d39c"/><path d="M490.7 464.93q2.2 3.7 0 7.4" stroke="#2a3a1a" stroke-width="1.6" fill="none"/><path d="M519.1 464.93q-2.2 3.7 0 7.4" stroke="#2a3a1a" stroke-width="1.6" fill="none"/><circle cx="477" cy="468.63" r="0.9" fill="#c8c890"/><rect x="475" y="476.16" width="55" height="14.86" fill="#38562a"/><rect x="476.3" y="489.72" width="52.4" height="1.5" fill="#56583c"/><ellipse cx="488.5" cy="483.49" rx="7.6" ry="6" fill="#38562a"/><ellipse cx="521.3" cy="483.49" rx="7.6" ry="6" fill="#38562a"/><rect x="497.2" y="479.09" width="15.7" height="8.8" fill="#33502a"/><ellipse cx="488.5" cy="483.49" rx="5.4" ry="4.0" fill="#d6d39c"/><ellipse cx="521.3" cy="483.49" rx="5.4" ry="4.0" fill="#d6d39c"/><path d="M490.7 479.79q2.2 3.7 0 7.4" stroke="#2a3a1a" stroke-width="1.6" fill="none"/><path d="M519.1 479.79q-2.2 3.7 0 7.4" stroke="#2a3a1a" stroke-width="1.6" fill="none"/><circle cx="477" cy="483.49" r="0.9" fill="#c8c890"/><rect x="533" y="388" width="53" height="13" fill="#38562a"/><rect x="533" y="401" width="53" height="1.9" fill="#56583c"/><ellipse cx="546.5" cy="394.5" rx="7.6" ry="6" fill="#38562a"/><ellipse cx="577.3" cy="394.5" rx="7.6" ry="6" fill="#38562a"/><rect x="555.2" y="390.1" width="13.7" height="8.8" fill="#33502a"/><ellipse cx="546.5" cy="394.5" rx="5.4" ry="4.0" fill="#d6d39c"/><ellipse cx="577.3" cy="394.5" rx="5.4" ry="4.0" fill="#d6d39c"/><path d="M548.7 390.8q2.2 3.7 0 7.4" stroke="#2a3a1a" stroke-width="1.6" fill="none"/><path d="M575.1 390.8q-2.2 3.7 0 7.4" stroke="#2a3a1a" stroke-width="1.6" fill="none"/><circle cx="535" cy="394.5" r="0.9" fill="#c8c890"/><rect x="533" y="402.9" width="53" height="13" fill="#38562a"/><rect x="533" y="415.9" width="53" height="1.9" fill="#56583c"/><ellipse cx="546.5" cy="409.4" rx="7.6" ry="6" fill="#38562a"/><ellipse cx="577.3" cy="409.4" rx="7.6" ry="6" fill="#38562a"/><rect x="555.2" y="405" width="13.7" height="8.8" fill="#33502a"/><ellipse cx="546.5" cy="409.4" rx="5.4" ry="4.0" fill="#d6d39c"/><ellipse cx="577.3" cy="409.4" rx="5.4" ry="4.0" fill="#d6d39c"/><path d="M548.7 405.7q2.2 3.7 0 7.4" stroke="#2a3a1a" stroke-width="1.6" fill="none"/><path d="M575.1 405.7q-2.2 3.7 0 7.4" stroke="#2a3a1a" stroke-width="1.6" fill="none"/><circle cx="535" cy="409.4" r="0.9" fill="#c8c890"/><rect x="533" y="417.8" width="53" height="13" fill="#38562a"/><rect x="533" y="430.8" width="53" height="1.9" fill="#56583c"/><ellipse cx="546.5" cy="424.3" rx="7.6" ry="6" fill="#38562a"/><ellipse cx="577.3" cy="424.3" rx="7.6" ry="6" fill="#38562a"/><rect x="555.2" y="419.9" width="13.7" height="8.8" fill="#33502a"/><ellipse cx="546.5" cy="424.3" rx="5.4" ry="4.0" fill="#d6d39c"/><ellipse cx="577.3" cy="424.3" rx="5.4" ry="4.0" fill="#d6d39c"/><path d="M548.7 420.6q2.2 3.7 0 7.4" stroke="#2a3a1a" stroke-width="1.6" fill="none"/><path d="M575.1 420.6q-2.2 3.7 0 7.4" stroke="#2a3a1a" stroke-width="1.6" fill="none"/><circle cx="535" cy="424.3" r="0.9" fill="#c8c890"/><rect x="533" y="432.7" width="53" height="13" fill="#38562a"/><rect x="533" y="445.7" width="53" height="1.9" fill="#56583c"/><ellipse cx="546.5" cy="439.2" rx="7.6" ry="6" fill="#38562a"/><ellipse cx="577.3" cy="439.2" rx="7.6" ry="6" fill="#38562a"/><rect x="555.2" y="434.8" width="13.7" height="8.8" fill="#33502a"/><ellipse cx="546.5" cy="439.2" rx="5.4" ry="4.0" fill="#d6d39c"/><ellipse cx="577.3" cy="439.2" rx="5.4" ry="4.0" fill="#d6d39c"/><path d="M548.7 435.5q2.2 3.7 0 7.4" stroke="#2a3a1a" stroke-width="1.6" fill="none"/><path d="M575.1 435.5q-2.2 3.7 0 7.4" stroke="#2a3a1a" stroke-width="1.6" fill="none"/><circle cx="535" cy="439.2" r="0.9" fill="#c8c890"/><rect x="533" y="447.6" width="53" height="13" fill="#38562a"/><rect x="533" y="460.6" width="53" height="1.9" fill="#56583c"/><ellipse cx="546.5" cy="454.1" rx="7.6" ry="6" fill="#38562a"/><ellipse cx="577.3" cy="454.1" rx="7.6" ry="6" fill="#38562a"/><rect x="555.2" y="449.7" width="13.7" height="8.8" fill="#33502a"/><ellipse cx="546.5" cy="454.1" rx="5.4" ry="4.0" fill="#d6d39c"/><ellipse cx="577.3" cy="454.1" rx="5.4" ry="4.0" fill="#d6d39c"/><path d="M548.7 450.4q2.2 3.7 0 7.4" stroke="#2a3a1a" stroke-width="1.6" fill="none"/><path d="M575.1 450.4q-2.2 3.7 0 7.4" stroke="#2a3a1a" stroke-width="1.6" fill="none"/><circle cx="535" cy="454.1" r="0.9" fill="#c8c890"/><rect x="533" y="462.5" width="53" height="13" fill="#38562a"/><rect x="533" y="475.5" width="53" height="1.9" fill="#56583c"/><ellipse cx="546.5" cy="469" rx="7.6" ry="6" fill="#38562a"/><ellipse cx="577.3" cy="469" rx="7.6" ry="6" fill="#38562a"/><rect x="555.2" y="464.6" width="13.7" height="8.8" fill="#33502a"/><ellipse cx="546.5" cy="469" rx="5.4" ry="4.0" fill="#d6d39c"/><ellipse cx="577.3" cy="469" rx="5.4" ry="4.0" fill="#d6d39c"/><path d="M548.7 465.3q2.2 3.7 0 7.4" stroke="#2a3a1a" stroke-width="1.6" fill="none"/><path d="M575.1 465.3q-2.2 3.7 0 7.4" stroke="#2a3a1a" stroke-width="1.6" fill="none"/><circle cx="535" cy="469" r="0.9" fill="#c8c890"/><rect x="360" y="504.5" width="55" height="14.93" fill="#38562a"/><rect x="361.3" y="518.13" width="52.4" height="1.5" fill="#56583c"/><ellipse cx="373.5" cy="511.86" rx="7.6" ry="6" fill="#38562a"/><ellipse cx="406.3" cy="511.86" rx="7.6" ry="6" fill="#38562a"/><rect x="382.2" y="507.46" width="15.7" height="8.8" fill="#33502a"/><ellipse cx="373.5" cy="511.86" rx="5.4" ry="4.0" fill="#d6d39c"/><ellipse cx="406.3" cy="511.86" rx="5.4" ry="4.0" fill="#d6d39c"/><path d="M375.7 508.16q2.2 3.7 0 7.4" stroke="#2a3a1a" stroke-width="1.6" fill="none"/><path d="M404.1 508.16q-2.2 3.7 0 7.4" stroke="#2a3a1a" stroke-width="1.6" fill="none"/><circle cx="362" cy="511.86" r="0.9" fill="#c8c890"/><rect x="360" y="519.43" width="55" height="14.93" fill="#38562a"/><rect x="361.3" y="533.06" width="52.4" height="1.5" fill="#56583c"/><ellipse cx="373.5" cy="526.79" rx="7.6" ry="6" fill="#38562a"/><ellipse cx="406.3" cy="526.79" rx="7.6" ry="6" fill="#38562a"/><rect x="382.2" y="522.39" width="15.7" height="8.8" fill="#33502a"/><ellipse cx="373.5" cy="526.79" rx="5.4" ry="4.0" fill="#d6d39c"/><ellipse cx="406.3" cy="526.79" rx="5.4" ry="4.0" fill="#d6d39c"/><path d="M375.7 523.09q2.2 3.7 0 7.4" stroke="#2a3a1a" stroke-width="1.6" fill="none"/><path d="M404.1 523.09q-2.2 3.7 0 7.4" stroke="#2a3a1a" stroke-width="1.6" fill="none"/><circle cx="362" cy="526.79" r="0.9" fill="#c8c890"/><rect x="360" y="534.36" width="55" height="14.93" fill="#38562a"/><rect x="361.3" y="547.99" width="52.4" height="1.5" fill="#56583c"/><ellipse cx="373.5" cy="541.73" rx="7.6" ry="6" fill="#38562a"/><ellipse cx="406.3" cy="541.73" rx="7.6" ry="6" fill="#38562a"/><rect x="382.2" y="537.33" width="15.7" height="8.8" fill="#33502a"/><ellipse cx="373.5" cy="541.73" rx="5.4" ry="4.0" fill="#d6d39c"/><ellipse cx="406.3" cy="541.73" rx="5.4" ry="4.0" fill="#d6d39c"/><path d="M375.7 538.02q2.2 3.7 0 7.4" stroke="#2a3a1a" stroke-width="1.6" fill="none"/><path d="M404.1 538.02q-2.2 3.7 0 7.4" stroke="#2a3a1a" stroke-width="1.6" fill="none"/><circle cx="362" cy="541.73" r="0.9" fill="#c8c890"/><rect x="360" y="549.29" width="55" height="14.93" fill="#38562a"/><rect x="361.3" y="562.92" width="52.4" height="1.5" fill="#56583c"/><ellipse cx="373.5" cy="556.65" rx="7.6" ry="6" fill="#38562a"/><ellipse cx="406.3" cy="556.65" rx="7.6" ry="6" fill="#38562a"/><rect x="382.2" y="552.25" width="15.7" height="8.8" fill="#33502a"/><ellipse cx="373.5" cy="556.65" rx="5.4" ry="4.0" fill="#d6d39c"/><ellipse cx="406.3" cy="556.65" rx="5.4" ry="4.0" fill="#d6d39c"/><path d="M375.7 552.95q2.2 3.7 0 7.4" stroke="#2a3a1a" stroke-width="1.6" fill="none"/><path d="M404.1 552.95q-2.2 3.7 0 7.4" stroke="#2a3a1a" stroke-width="1.6" fill="none"/><circle cx="362" cy="556.65" r="0.9" fill="#c8c890"/><rect x="360" y="564.22" width="55" height="14.93" fill="#38562a"/><rect x="361.3" y="577.85" width="52.4" height="1.5" fill="#56583c"/><ellipse cx="373.5" cy="571.59" rx="7.6" ry="6" fill="#38562a"/><ellipse cx="406.3" cy="571.59" rx="7.6" ry="6" fill="#38562a"/><rect x="382.2" y="567.19" width="15.7" height="8.8" fill="#33502a"/><ellipse cx="373.5" cy="571.59" rx="5.4" ry="4.0" fill="#d6d39c"/><ellipse cx="406.3" cy="571.59" rx="5.4" ry="4.0" fill="#d6d39c"/><path d="M375.7 567.88q2.2 3.7 0 7.4" stroke="#2a3a1a" stroke-width="1.6" fill="none"/><path d="M404.1 567.88q-2.2 3.7 0 7.4" stroke="#2a3a1a" stroke-width="1.6" fill="none"/><circle cx="362" cy="571.59" r="0.9" fill="#c8c890"/><rect x="360" y="579.15" width="55" height="14.93" fill="#38562a"/><rect x="361.3" y="592.78" width="52.4" height="1.5" fill="#56583c"/><ellipse cx="373.5" cy="586.51" rx="7.6" ry="6" fill="#38562a"/><ellipse cx="406.3" cy="586.51" rx="7.6" ry="6" fill="#38562a"/><rect x="382.2" y="582.12" width="15.7" height="8.8" fill="#33502a"/><ellipse cx="373.5" cy="586.51" rx="5.4" ry="4.0" fill="#d6d39c"/><ellipse cx="406.3" cy="586.51" rx="5.4" ry="4.0" fill="#d6d39c"/><path d="M375.7 582.81q2.2 3.7 0 7.4" stroke="#2a3a1a" stroke-width="1.6" fill="none"/><path d="M404.1 582.81q-2.2 3.7 0 7.4" stroke="#2a3a1a" stroke-width="1.6" fill="none"/><circle cx="362" cy="586.51" r="0.9" fill="#c8c890"/><rect x="360" y="594.08" width="55" height="14.93" fill="#38562a"/><rect x="361.3" y="607.71" width="52.4" height="1.5" fill="#56583c"/><ellipse cx="373.5" cy="601.45" rx="7.6" ry="6" fill="#38562a"/><ellipse cx="406.3" cy="601.45" rx="7.6" ry="6" fill="#38562a"/><rect x="382.2" y="597.05" width="15.7" height="8.8" fill="#33502a"/><ellipse cx="373.5" cy="601.45" rx="5.4" ry="4.0" fill="#d6d39c"/><ellipse cx="406.3" cy="601.45" rx="5.4" ry="4.0" fill="#d6d39c"/><path d="M375.7 597.75q2.2 3.7 0 7.4" stroke="#2a3a1a" stroke-width="1.6" fill="none"/><path d="M404.1 597.75q-2.2 3.7 0 7.4" stroke="#2a3a1a" stroke-width="1.6" fill="none"/><circle cx="362" cy="601.45" r="0.9" fill="#c8c890"/><rect x="418" y="504.5" width="54.5" height="14.93" fill="#38562a"/><rect x="419.3" y="518.13" width="51.9" height="1.5" fill="#56583c"/><ellipse cx="431.5" cy="511.86" rx="7.6" ry="6" fill="#38562a"/><ellipse cx="463.8" cy="511.86" rx="7.6" ry="6" fill="#38562a"/><rect x="440.2" y="507.46" width="15.2" height="8.8" fill="#33502a"/><ellipse cx="431.5" cy="511.86" rx="5.4" ry="4.0" fill="#d6d39c"/><ellipse cx="463.8" cy="511.86" rx="5.4" ry="4.0" fill="#d6d39c"/><path d="M433.7 508.16q2.2 3.7 0 7.4" stroke="#2a3a1a" stroke-width="1.6" fill="none"/><path d="M461.6 508.16q-2.2 3.7 0 7.4" stroke="#2a3a1a" stroke-width="1.6" fill="none"/><circle cx="420" cy="511.86" r="0.9" fill="#c8c890"/><rect x="418" y="519.43" width="54.5" height="14.93" fill="#38562a"/><rect x="419.3" y="533.06" width="51.9" height="1.5" fill="#56583c"/><ellipse cx="431.5" cy="526.79" rx="7.6" ry="6" fill="#38562a"/><ellipse cx="463.8" cy="526.79" rx="7.6" ry="6" fill="#38562a"/><rect x="440.2" y="522.39" width="15.2" height="8.8" fill="#33502a"/><ellipse cx="431.5" cy="526.79" rx="5.4" ry="4.0" fill="#d6d39c"/><ellipse cx="463.8" cy="526.79" rx="5.4" ry="4.0" fill="#d6d39c"/><path d="M433.7 523.09q2.2 3.7 0 7.4" stroke="#2a3a1a" stroke-width="1.6" fill="none"/><path d="M461.6 523.09q-2.2 3.7 0 7.4" stroke="#2a3a1a" stroke-width="1.6" fill="none"/><circle cx="420" cy="526.79" r="0.9" fill="#c8c890"/><rect x="418" y="534.36" width="54.5" height="14.93" fill="#38562a"/><rect x="419.3" y="547.99" width="51.9" height="1.5" fill="#56583c"/><ellipse cx="431.5" cy="541.73" rx="7.6" ry="6" fill="#38562a"/><ellipse cx="463.8" cy="541.73" rx="7.6" ry="6" fill="#38562a"/><rect x="440.2" y="537.33" width="15.2" height="8.8" fill="#33502a"/><ellipse cx="431.5" cy="541.73" rx="5.4" ry="4.0" fill="#d6d39c"/><ellipse cx="463.8" cy="541.73" rx="5.4" ry="4.0" fill="#d6d39c"/><path d="M433.7 538.02q2.2 3.7 0 7.4" stroke="#2a3a1a" stroke-width="1.6" fill="none"/><path d="M461.6 538.02q-2.2 3.7 0 7.4" stroke="#2a3a1a" stroke-width="1.6" fill="none"/><circle cx="420" cy="541.73" r="0.9" fill="#c8c890"/><rect x="418" y="549.29" width="54.5" height="14.93" fill="#38562a"/><rect x="419.3" y="562.92" width="51.9" height="1.5" fill="#56583c"/><ellipse cx="431.5" cy="556.65" rx="7.6" ry="6" fill="#38562a"/><ellipse cx="463.8" cy="556.65" rx="7.6" ry="6" fill="#38562a"/><rect x="440.2" y="552.25" width="15.2" height="8.8" fill="#33502a"/><ellipse cx="431.5" cy="556.65" rx="5.4" ry="4.0" fill="#d6d39c"/><ellipse cx="463.8" cy="556.65" rx="5.4" ry="4.0" fill="#d6d39c"/><path d="M433.7 552.95q2.2 3.7 0 7.4" stroke="#2a3a1a" stroke-width="1.6" fill="none"/><path d="M461.6 552.95q-2.2 3.7 0 7.4" stroke="#2a3a1a" stroke-width="1.6" fill="none"/><circle cx="420" cy="556.65" r="0.9" fill="#c8c890"/><rect x="418" y="564.22" width="54.5" height="14.93" fill="#38562a"/><rect x="419.3" y="577.85" width="51.9" height="1.5" fill="#56583c"/><ellipse cx="431.5" cy="571.59" rx="7.6" ry="6" fill="#38562a"/><ellipse cx="463.8" cy="571.59" rx="7.6" ry="6" fill="#38562a"/><rect x="440.2" y="567.19" width="15.2" height="8.8" fill="#33502a"/><ellipse cx="431.5" cy="571.59" rx="5.4" ry="4.0" fill="#d6d39c"/><ellipse cx="463.8" cy="571.59" rx="5.4" ry="4.0" fill="#d6d39c"/><path d="M433.7 567.88q2.2 3.7 0 7.4" stroke="#2a3a1a" stroke-width="1.6" fill="none"/><path d="M461.6 567.88q-2.2 3.7 0 7.4" stroke="#2a3a1a" stroke-width="1.6" fill="none"/><circle cx="420" cy="571.59" r="0.9" fill="#c8c890"/><rect x="418" y="579.15" width="54.5" height="14.93" fill="#38562a"/><rect x="419.3" y="592.78" width="51.9" height="1.5" fill="#56583c"/><ellipse cx="431.5" cy="586.51" rx="7.6" ry="6" fill="#38562a"/><ellipse cx="463.8" cy="586.51" rx="7.6" ry="6" fill="#38562a"/><rect x="440.2" y="582.12" width="15.2" height="8.8" fill="#33502a"/><ellipse cx="431.5" cy="586.51" rx="5.4" ry="4.0" fill="#d6d39c"/><ellipse cx="463.8" cy="586.51" rx="5.4" ry="4.0" fill="#d6d39c"/><path d="M433.7 582.81q2.2 3.7 0 7.4" stroke="#2a3a1a" stroke-width="1.6" fill="none"/><path d="M461.6 582.81q-2.2 3.7 0 7.4" stroke="#2a3a1a" stroke-width="1.6" fill="none"/><circle cx="420" cy="586.51" r="0.9" fill="#c8c890"/><rect x="418" y="594.08" width="54.5" height="14.93" fill="#38562a"/><rect x="419.3" y="607.71" width="51.9" height="1.5" fill="#56583c"/><ellipse cx="431.5" cy="601.45" rx="7.6" ry="6" fill="#38562a"/><ellipse cx="463.8" cy="601.45" rx="7.6" ry="6" fill="#38562a"/><rect x="440.2" y="597.05" width="15.2" height="8.8" fill="#33502a"/><ellipse cx="431.5" cy="601.45" rx="5.4" ry="4.0" fill="#d6d39c"/><ellipse cx="463.8" cy="601.45" rx="5.4" ry="4.0" fill="#d6d39c"/><path d="M433.7 597.75q2.2 3.7 0 7.4" stroke="#2a3a1a" stroke-width="1.6" fill="none"/><path d="M461.6 597.75q-2.2 3.7 0 7.4" stroke="#2a3a1a" stroke-width="1.6" fill="none"/><circle cx="420" cy="601.45" r="0.9" fill="#c8c890"/><rect x="475" y="504.5" width="55" height="14.5" fill="#38562a"/><rect x="476.3" y="517.7" width="52.4" height="1.5" fill="#56583c"/><ellipse cx="488.5" cy="511.65" rx="7.6" ry="6" fill="#38562a"/><ellipse cx="521.3" cy="511.65" rx="7.6" ry="6" fill="#38562a"/><rect x="497.2" y="507.25" width="15.7" height="8.8" fill="#33502a"/><ellipse cx="488.5" cy="511.65" rx="5.4" ry="4.0" fill="#d6d39c"/><ellipse cx="521.3" cy="511.65" rx="5.4" ry="4.0" fill="#d6d39c"/><path d="M490.7 507.95q2.2 3.7 0 7.4" stroke="#2a3a1a" stroke-width="1.6" fill="none"/><path d="M519.1 507.95q-2.2 3.7 0 7.4" stroke="#2a3a1a" stroke-width="1.6" fill="none"/><circle cx="477" cy="511.65" r="0.9" fill="#c8c890"/><rect x="475" y="520" width="53.5" height="13" fill="#38562a"/><rect x="475" y="533" width="53.5" height="1.9" fill="#56583c"/><ellipse cx="488.5" cy="526.5" rx="7.6" ry="6" fill="#38562a"/><ellipse cx="519.8" cy="526.5" rx="7.6" ry="6" fill="#38562a"/><rect x="497.2" y="522.1" width="14.2" height="8.8" fill="#33502a"/><ellipse cx="488.5" cy="526.5" rx="5.4" ry="4.0" fill="#d6d39c"/><ellipse cx="519.8" cy="526.5" rx="5.4" ry="4.0" fill="#d6d39c"/><path d="M490.7 522.8q2.2 3.7 0 7.4" stroke="#2a3a1a" stroke-width="1.6" fill="none"/><path d="M517.6 522.8q-2.2 3.7 0 7.4" stroke="#2a3a1a" stroke-width="1.6" fill="none"/><circle cx="477" cy="526.5" r="0.9" fill="#c8c890"/><rect x="533" y="520" width="53.5" height="13" fill="#38562a"/><rect x="533" y="533" width="53.5" height="1.9" fill="#56583c"/><ellipse cx="546.5" cy="526.5" rx="7.6" ry="6" fill="#38562a"/><ellipse cx="577.8" cy="526.5" rx="7.6" ry="6" fill="#38562a"/><rect x="555.2" y="522.1" width="14.2" height="8.8" fill="#33502a"/><ellipse cx="546.5" cy="526.5" rx="5.4" ry="4.0" fill="#d6d39c"/><ellipse cx="577.8" cy="526.5" rx="5.4" ry="4.0" fill="#d6d39c"/><path d="M548.7 522.8q2.2 3.7 0 7.4" stroke="#2a3a1a" stroke-width="1.6" fill="none"/><path d="M575.6 522.8q-2.2 3.7 0 7.4" stroke="#2a3a1a" stroke-width="1.6" fill="none"/><circle cx="535" cy="526.5" r="0.9" fill="#c8c890"/><rect x="475" y="534.8" width="53.5" height="13" fill="#38562a"/><rect x="475" y="547.8" width="53.5" height="1.9" fill="#56583c"/><ellipse cx="488.5" cy="541.3" rx="7.6" ry="6" fill="#38562a"/><ellipse cx="519.8" cy="541.3" rx="7.6" ry="6" fill="#38562a"/><rect x="497.2" y="536.9" width="14.2" height="8.8" fill="#33502a"/><ellipse cx="488.5" cy="541.3" rx="5.4" ry="4.0" fill="#d6d39c"/><ellipse cx="519.8" cy="541.3" rx="5.4" ry="4.0" fill="#d6d39c"/><path d="M490.7 537.6q2.2 3.7 0 7.4" stroke="#2a3a1a" stroke-width="1.6" fill="none"/><path d="M517.6 537.6q-2.2 3.7 0 7.4" stroke="#2a3a1a" stroke-width="1.6" fill="none"/><circle cx="477" cy="541.3" r="0.9" fill="#c8c890"/><rect x="533" y="534.8" width="53.5" height="13" fill="#38562a"/><rect x="533" y="547.8" width="53.5" height="1.9" fill="#56583c"/><ellipse cx="546.5" cy="541.3" rx="7.6" ry="6" fill="#38562a"/><ellipse cx="577.8" cy="541.3" rx="7.6" ry="6" fill="#38562a"/><rect x="555.2" y="536.9" width="14.2" height="8.8" fill="#33502a"/><ellipse cx="546.5" cy="541.3" rx="5.4" ry="4.0" fill="#d6d39c"/><ellipse cx="577.8" cy="541.3" rx="5.4" ry="4.0" fill="#d6d39c"/><path d="M548.7 537.6q2.2 3.7 0 7.4" stroke="#2a3a1a" stroke-width="1.6" fill="none"/><path d="M575.6 537.6q-2.2 3.7 0 7.4" stroke="#2a3a1a" stroke-width="1.6" fill="none"/><circle cx="535" cy="541.3" r="0.9" fill="#c8c890"/><rect x="475" y="549.6" width="53.5" height="13" fill="#38562a"/><rect x="475" y="562.6" width="53.5" height="1.9" fill="#56583c"/><ellipse cx="488.5" cy="556.1" rx="7.6" ry="6" fill="#38562a"/><ellipse cx="519.8" cy="556.1" rx="7.6" ry="6" fill="#38562a"/><rect x="497.2" y="551.7" width="14.2" height="8.8" fill="#33502a"/><ellipse cx="488.5" cy="556.1" rx="5.4" ry="4.0" fill="#d6d39c"/><ellipse cx="519.8" cy="556.1" rx="5.4" ry="4.0" fill="#d6d39c"/><path d="M490.7 552.4q2.2 3.7 0 7.4" stroke="#2a3a1a" stroke-width="1.6" fill="none"/><path d="M517.6 552.4q-2.2 3.7 0 7.4" stroke="#2a3a1a" stroke-width="1.6" fill="none"/><circle cx="477" cy="556.1" r="0.9" fill="#c8c890"/><rect x="533" y="549.6" width="53.5" height="13" fill="#38562a"/><rect x="533" y="562.6" width="53.5" height="1.9" fill="#56583c"/><ellipse cx="546.5" cy="556.1" rx="7.6" ry="6" fill="#38562a"/><ellipse cx="577.8" cy="556.1" rx="7.6" ry="6" fill="#38562a"/><rect x="555.2" y="551.7" width="14.2" height="8.8" fill="#33502a"/><ellipse cx="546.5" cy="556.1" rx="5.4" ry="4.0" fill="#d6d39c"/><ellipse cx="577.8" cy="556.1" rx="5.4" ry="4.0" fill="#d6d39c"/><path d="M548.7 552.4q2.2 3.7 0 7.4" stroke="#2a3a1a" stroke-width="1.6" fill="none"/><path d="M575.6 552.4q-2.2 3.7 0 7.4" stroke="#2a3a1a" stroke-width="1.6" fill="none"/><circle cx="535" cy="556.1" r="0.9" fill="#c8c890"/><rect x="475" y="564.4" width="53.5" height="13" fill="#38562a"/><rect x="475" y="577.4" width="53.5" height="1.9" fill="#56583c"/><ellipse cx="488.5" cy="570.9" rx="7.6" ry="6" fill="#38562a"/><ellipse cx="519.8" cy="570.9" rx="7.6" ry="6" fill="#38562a"/><rect x="497.2" y="566.5" width="14.2" height="8.8" fill="#33502a"/><ellipse cx="488.5" cy="570.9" rx="5.4" ry="4.0" fill="#d6d39c"/><ellipse cx="519.8" cy="570.9" rx="5.4" ry="4.0" fill="#d6d39c"/><path d="M490.7 567.2q2.2 3.7 0 7.4" stroke="#2a3a1a" stroke-width="1.6" fill="none"/><path d="M517.6 567.2q-2.2 3.7 0 7.4" stroke="#2a3a1a" stroke-width="1.6" fill="none"/><circle cx="477" cy="570.9" r="0.9" fill="#c8c890"/><rect x="533" y="564.4" width="53.5" height="13" fill="#38562a"/><rect x="533" y="577.4" width="53.5" height="1.9" fill="#56583c"/><ellipse cx="546.5" cy="570.9" rx="7.6" ry="6" fill="#38562a"/><ellipse cx="577.8" cy="570.9" rx="7.6" ry="6" fill="#38562a"/><rect x="555.2" y="566.5" width="14.2" height="8.8" fill="#33502a"/><ellipse cx="546.5" cy="570.9" rx="5.4" ry="4.0" fill="#d6d39c"/><ellipse cx="577.8" cy="570.9" rx="5.4" ry="4.0" fill="#d6d39c"/><path d="M548.7 567.2q2.2 3.7 0 7.4" stroke="#2a3a1a" stroke-width="1.6" fill="none"/><path d="M575.6 567.2q-2.2 3.7 0 7.4" stroke="#2a3a1a" stroke-width="1.6" fill="none"/><circle cx="535" cy="570.9" r="0.9" fill="#c8c890"/><rect x="475" y="579.2" width="53.5" height="13" fill="#38562a"/><rect x="475" y="592.2" width="53.5" height="1.9" fill="#56583c"/><ellipse cx="488.5" cy="585.7" rx="7.6" ry="6" fill="#38562a"/><ellipse cx="519.8" cy="585.7" rx="7.6" ry="6" fill="#38562a"/><rect x="497.2" y="581.3" width="14.2" height="8.8" fill="#33502a"/><ellipse cx="488.5" cy="585.7" rx="5.4" ry="4.0" fill="#d6d39c"/><ellipse cx="519.8" cy="585.7" rx="5.4" ry="4.0" fill="#d6d39c"/><path d="M490.7 582q2.2 3.7 0 7.4" stroke="#2a3a1a" stroke-width="1.6" fill="none"/><path d="M517.6 582q-2.2 3.7 0 7.4" stroke="#2a3a1a" stroke-width="1.6" fill="none"/><circle cx="477" cy="585.7" r="0.9" fill="#c8c890"/><rect x="533" y="579.2" width="53.5" height="13" fill="#38562a"/><rect x="533" y="592.2" width="53.5" height="1.9" fill="#56583c"/><ellipse cx="546.5" cy="585.7" rx="7.6" ry="6" fill="#38562a"/><ellipse cx="577.8" cy="585.7" rx="7.6" ry="6" fill="#38562a"/><rect x="555.2" y="581.3" width="14.2" height="8.8" fill="#33502a"/><ellipse cx="546.5" cy="585.7" rx="5.4" ry="4.0" fill="#d6d39c"/><ellipse cx="577.8" cy="585.7" rx="5.4" ry="4.0" fill="#d6d39c"/><path d="M548.7 582q2.2 3.7 0 7.4" stroke="#2a3a1a" stroke-width="1.6" fill="none"/><path d="M575.6 582q-2.2 3.7 0 7.4" stroke="#2a3a1a" stroke-width="1.6" fill="none"/><circle cx="535" cy="585.7" r="0.9" fill="#c8c890"/><rect x="475" y="594" width="53.5" height="13" fill="#38562a"/><rect x="475" y="607" width="53.5" height="1.9" fill="#56583c"/><ellipse cx="488.5" cy="600.5" rx="7.6" ry="6" fill="#38562a"/><ellipse cx="519.8" cy="600.5" rx="7.6" ry="6" fill="#38562a"/><rect x="497.2" y="596.1" width="14.2" height="8.8" fill="#33502a"/><ellipse cx="488.5" cy="600.5" rx="5.4" ry="4.0" fill="#d6d39c"/><ellipse cx="519.8" cy="600.5" rx="5.4" ry="4.0" fill="#d6d39c"/><path d="M490.7 596.8q2.2 3.7 0 7.4" stroke="#2a3a1a" stroke-width="1.6" fill="none"/><path d="M517.6 596.8q-2.2 3.7 0 7.4" stroke="#2a3a1a" stroke-width="1.6" fill="none"/><circle cx="477" cy="600.5" r="0.9" fill="#c8c890"/><rect x="533" y="594" width="53.5" height="13" fill="#38562a"/><rect x="533" y="607" width="53.5" height="1.9" fill="#56583c"/><ellipse cx="546.5" cy="600.5" rx="7.6" ry="6" fill="#38562a"/><ellipse cx="577.8" cy="600.5" rx="7.6" ry="6" fill="#38562a"/><rect x="555.2" y="596.1" width="14.2" height="8.8" fill="#33502a"/><ellipse cx="546.5" cy="600.5" rx="5.4" ry="4.0" fill="#d6d39c"/><ellipse cx="577.8" cy="600.5" rx="5.4" ry="4.0" fill="#d6d39c"/><path d="M548.7 596.8q2.2 3.7 0 7.4" stroke="#2a3a1a" stroke-width="1.6" fill="none"/><path d="M575.6 596.8q-2.2 3.7 0 7.4" stroke="#2a3a1a" stroke-width="1.6" fill="none"/><circle cx="535" cy="600.5" r="0.9" fill="#c8c890"/><rect x="602" y="395.2" width="53" height="13" fill="#38562a"/><rect x="602" y="408.2" width="53" height="1.9" fill="#56583c"/><ellipse cx="615.5" cy="401.7" rx="7.6" ry="6" fill="#38562a"/><ellipse cx="646.3" cy="401.7" rx="7.6" ry="6" fill="#38562a"/><rect x="624.2" y="397.3" width="13.7" height="8.8" fill="#33502a"/><ellipse cx="615.5" cy="401.7" rx="5.4" ry="4.0" fill="#d6d39c"/><ellipse cx="646.3" cy="401.7" rx="5.4" ry="4.0" fill="#d6d39c"/><path d="M617.7 398q2.2 3.7 0 7.4" stroke="#2a3a1a" stroke-width="1.6" fill="none"/><path d="M644.1 398q-2.2 3.7 0 7.4" stroke="#2a3a1a" stroke-width="1.6" fill="none"/><circle cx="604" cy="401.7" r="0.9" fill="#c8c890"/><rect x="660" y="395.2" width="53" height="13" fill="#38562a"/><rect x="660" y="408.2" width="53" height="1.9" fill="#56583c"/><ellipse cx="673.5" cy="401.7" rx="7.6" ry="6" fill="#38562a"/><ellipse cx="704.3" cy="401.7" rx="7.6" ry="6" fill="#38562a"/><rect x="682.2" y="397.3" width="13.7" height="8.8" fill="#33502a"/><ellipse cx="673.5" cy="401.7" rx="5.4" ry="4.0" fill="#d6d39c"/><ellipse cx="704.3" cy="401.7" rx="5.4" ry="4.0" fill="#d6d39c"/><path d="M675.7 398q2.2 3.7 0 7.4" stroke="#2a3a1a" stroke-width="1.6" fill="none"/><path d="M702.1 398q-2.2 3.7 0 7.4" stroke="#2a3a1a" stroke-width="1.6" fill="none"/><circle cx="662" cy="401.7" r="0.9" fill="#c8c890"/><rect x="716" y="394.3" width="54.5" height="14.85" fill="#38562a"/><rect x="717.3" y="407.85" width="51.9" height="1.5" fill="#56583c"/><ellipse cx="729.5" cy="401.62" rx="7.6" ry="6" fill="#38562a"/><ellipse cx="761.8" cy="401.62" rx="7.6" ry="6" fill="#38562a"/><rect x="738.2" y="397.23" width="15.2" height="8.8" fill="#33502a"/><ellipse cx="729.5" cy="401.62" rx="5.4" ry="4.0" fill="#d6d39c"/><ellipse cx="761.8" cy="401.62" rx="5.4" ry="4.0" fill="#d6d39c"/><path d="M731.7 397.93q2.2 3.7 0 7.4" stroke="#2a3a1a" stroke-width="1.6" fill="none"/><path d="M759.6 397.93q-2.2 3.7 0 7.4" stroke="#2a3a1a" stroke-width="1.6" fill="none"/><circle cx="718" cy="401.62" r="0.9" fill="#c8c890"/><rect x="773.5" y="394.3" width="54.5" height="14.85" fill="#38562a"/><rect x="774.8" y="407.85" width="51.9" height="1.5" fill="#56583c"/><ellipse cx="787" cy="401.62" rx="7.6" ry="6" fill="#38562a"/><ellipse cx="819.3" cy="401.62" rx="7.6" ry="6" fill="#38562a"/><rect x="795.7" y="397.23" width="15.2" height="8.8" fill="#33502a"/><ellipse cx="787" cy="401.62" rx="5.4" ry="4.0" fill="#d6d39c"/><ellipse cx="819.3" cy="401.62" rx="5.4" ry="4.0" fill="#d6d39c"/><path d="M789.2 397.93q2.2 3.7 0 7.4" stroke="#2a3a1a" stroke-width="1.6" fill="none"/><path d="M817.1 397.93q-2.2 3.7 0 7.4" stroke="#2a3a1a" stroke-width="1.6" fill="none"/><circle cx="775.5" cy="401.62" r="0.9" fill="#c8c890"/><rect x="602" y="410.05" width="53" height="13" fill="#38562a"/><rect x="602" y="423.05" width="53" height="1.9" fill="#56583c"/><ellipse cx="615.5" cy="416.55" rx="7.6" ry="6" fill="#38562a"/><ellipse cx="646.3" cy="416.55" rx="7.6" ry="6" fill="#38562a"/><rect x="624.2" y="412.15" width="13.7" height="8.8" fill="#33502a"/><ellipse cx="615.5" cy="416.55" rx="5.4" ry="4.0" fill="#d6d39c"/><ellipse cx="646.3" cy="416.55" rx="5.4" ry="4.0" fill="#d6d39c"/><path d="M617.7 412.85q2.2 3.7 0 7.4" stroke="#2a3a1a" stroke-width="1.6" fill="none"/><path d="M644.1 412.85q-2.2 3.7 0 7.4" stroke="#2a3a1a" stroke-width="1.6" fill="none"/><circle cx="604" cy="416.55" r="0.9" fill="#c8c890"/><rect x="660" y="410.05" width="53" height="13" fill="#38562a"/><rect x="660" y="423.05" width="53" height="1.9" fill="#56583c"/><ellipse cx="673.5" cy="416.55" rx="7.6" ry="6" fill="#38562a"/><ellipse cx="704.3" cy="416.55" rx="7.6" ry="6" fill="#38562a"/><rect x="682.2" y="412.15" width="13.7" height="8.8" fill="#33502a"/><ellipse cx="673.5" cy="416.55" rx="5.4" ry="4.0" fill="#d6d39c"/><ellipse cx="704.3" cy="416.55" rx="5.4" ry="4.0" fill="#d6d39c"/><path d="M675.7 412.85q2.2 3.7 0 7.4" stroke="#2a3a1a" stroke-width="1.6" fill="none"/><path d="M702.1 412.85q-2.2 3.7 0 7.4" stroke="#2a3a1a" stroke-width="1.6" fill="none"/><circle cx="662" cy="416.55" r="0.9" fill="#c8c890"/><rect x="716" y="409.15" width="54.5" height="14.85" fill="#38562a"/><rect x="717.3" y="422.7" width="51.9" height="1.5" fill="#56583c"/><ellipse cx="729.5" cy="416.48" rx="7.6" ry="6" fill="#38562a"/><ellipse cx="761.8" cy="416.48" rx="7.6" ry="6" fill="#38562a"/><rect x="738.2" y="412.08" width="15.2" height="8.8" fill="#33502a"/><ellipse cx="729.5" cy="416.48" rx="5.4" ry="4.0" fill="#d6d39c"/><ellipse cx="761.8" cy="416.48" rx="5.4" ry="4.0" fill="#d6d39c"/><path d="M731.7 412.78q2.2 3.7 0 7.4" stroke="#2a3a1a" stroke-width="1.6" fill="none"/><path d="M759.6 412.78q-2.2 3.7 0 7.4" stroke="#2a3a1a" stroke-width="1.6" fill="none"/><circle cx="718" cy="416.48" r="0.9" fill="#c8c890"/><rect x="773.5" y="409.15" width="54.5" height="14.85" fill="#38562a"/><rect x="774.8" y="422.7" width="51.9" height="1.5" fill="#56583c"/><ellipse cx="787" cy="416.48" rx="7.6" ry="6" fill="#38562a"/><ellipse cx="819.3" cy="416.48" rx="7.6" ry="6" fill="#38562a"/><rect x="795.7" y="412.08" width="15.2" height="8.8" fill="#33502a"/><ellipse cx="787" cy="416.48" rx="5.4" ry="4.0" fill="#d6d39c"/><ellipse cx="819.3" cy="416.48" rx="5.4" ry="4.0" fill="#d6d39c"/><path d="M789.2 412.78q2.2 3.7 0 7.4" stroke="#2a3a1a" stroke-width="1.6" fill="none"/><path d="M817.1 412.78q-2.2 3.7 0 7.4" stroke="#2a3a1a" stroke-width="1.6" fill="none"/><circle cx="775.5" cy="416.48" r="0.9" fill="#c8c890"/><rect x="602" y="424.9" width="53" height="13" fill="#38562a"/><rect x="602" y="437.9" width="53" height="1.9" fill="#56583c"/><ellipse cx="615.5" cy="431.4" rx="7.6" ry="6" fill="#38562a"/><ellipse cx="646.3" cy="431.4" rx="7.6" ry="6" fill="#38562a"/><rect x="624.2" y="427" width="13.7" height="8.8" fill="#33502a"/><ellipse cx="615.5" cy="431.4" rx="5.4" ry="4.0" fill="#d6d39c"/><ellipse cx="646.3" cy="431.4" rx="5.4" ry="4.0" fill="#d6d39c"/><path d="M617.7 427.7q2.2 3.7 0 7.4" stroke="#2a3a1a" stroke-width="1.6" fill="none"/><path d="M644.1 427.7q-2.2 3.7 0 7.4" stroke="#2a3a1a" stroke-width="1.6" fill="none"/><circle cx="604" cy="431.4" r="0.9" fill="#c8c890"/><rect x="660" y="424.9" width="53" height="13" fill="#38562a"/><rect x="660" y="437.9" width="53" height="1.9" fill="#56583c"/><ellipse cx="673.5" cy="431.4" rx="7.6" ry="6" fill="#38562a"/><ellipse cx="704.3" cy="431.4" rx="7.6" ry="6" fill="#38562a"/><rect x="682.2" y="427" width="13.7" height="8.8" fill="#33502a"/><ellipse cx="673.5" cy="431.4" rx="5.4" ry="4.0" fill="#d6d39c"/><ellipse cx="704.3" cy="431.4" rx="5.4" ry="4.0" fill="#d6d39c"/><path d="M675.7 427.7q2.2 3.7 0 7.4" stroke="#2a3a1a" stroke-width="1.6" fill="none"/><path d="M702.1 427.7q-2.2 3.7 0 7.4" stroke="#2a3a1a" stroke-width="1.6" fill="none"/><circle cx="662" cy="431.4" r="0.9" fill="#c8c890"/><rect x="716" y="424" width="54.5" height="14.85" fill="#38562a"/><rect x="717.3" y="437.55" width="51.9" height="1.5" fill="#56583c"/><ellipse cx="729.5" cy="431.32" rx="7.6" ry="6" fill="#38562a"/><ellipse cx="761.8" cy="431.32" rx="7.6" ry="6" fill="#38562a"/><rect x="738.2" y="426.93" width="15.2" height="8.8" fill="#33502a"/><ellipse cx="729.5" cy="431.32" rx="5.4" ry="4.0" fill="#d6d39c"/><ellipse cx="761.8" cy="431.32" rx="5.4" ry="4.0" fill="#d6d39c"/><path d="M731.7 427.62q2.2 3.7 0 7.4" stroke="#2a3a1a" stroke-width="1.6" fill="none"/><path d="M759.6 427.62q-2.2 3.7 0 7.4" stroke="#2a3a1a" stroke-width="1.6" fill="none"/><circle cx="718" cy="431.32" r="0.9" fill="#c8c890"/><rect x="773.5" y="424" width="54.5" height="14.85" fill="#38562a"/><rect x="774.8" y="437.55" width="51.9" height="1.5" fill="#56583c"/><ellipse cx="787" cy="431.32" rx="7.6" ry="6" fill="#38562a"/><ellipse cx="819.3" cy="431.32" rx="7.6" ry="6" fill="#38562a"/><rect x="795.7" y="426.93" width="15.2" height="8.8" fill="#33502a"/><ellipse cx="787" cy="431.32" rx="5.4" ry="4.0" fill="#d6d39c"/><ellipse cx="819.3" cy="431.32" rx="5.4" ry="4.0" fill="#d6d39c"/><path d="M789.2 427.62q2.2 3.7 0 7.4" stroke="#2a3a1a" stroke-width="1.6" fill="none"/><path d="M817.1 427.62q-2.2 3.7 0 7.4" stroke="#2a3a1a" stroke-width="1.6" fill="none"/><circle cx="775.5" cy="431.32" r="0.9" fill="#c8c890"/><rect x="602" y="439.75" width="53" height="13" fill="#38562a"/><rect x="602" y="452.75" width="53" height="1.9" fill="#56583c"/><ellipse cx="615.5" cy="446.25" rx="7.6" ry="6" fill="#38562a"/><ellipse cx="646.3" cy="446.25" rx="7.6" ry="6" fill="#38562a"/><rect x="624.2" y="441.85" width="13.7" height="8.8" fill="#33502a"/><ellipse cx="615.5" cy="446.25" rx="5.4" ry="4.0" fill="#d6d39c"/><ellipse cx="646.3" cy="446.25" rx="5.4" ry="4.0" fill="#d6d39c"/><path d="M617.7 442.55q2.2 3.7 0 7.4" stroke="#2a3a1a" stroke-width="1.6" fill="none"/><path d="M644.1 442.55q-2.2 3.7 0 7.4" stroke="#2a3a1a" stroke-width="1.6" fill="none"/><circle cx="604" cy="446.25" r="0.9" fill="#c8c890"/><rect x="660" y="439.75" width="53" height="13" fill="#38562a"/><rect x="660" y="452.75" width="53" height="1.9" fill="#56583c"/><ellipse cx="673.5" cy="446.25" rx="7.6" ry="6" fill="#38562a"/><ellipse cx="704.3" cy="446.25" rx="7.6" ry="6" fill="#38562a"/><rect x="682.2" y="441.85" width="13.7" height="8.8" fill="#33502a"/><ellipse cx="673.5" cy="446.25" rx="5.4" ry="4.0" fill="#d6d39c"/><ellipse cx="704.3" cy="446.25" rx="5.4" ry="4.0" fill="#d6d39c"/><path d="M675.7 442.55q2.2 3.7 0 7.4" stroke="#2a3a1a" stroke-width="1.6" fill="none"/><path d="M702.1 442.55q-2.2 3.7 0 7.4" stroke="#2a3a1a" stroke-width="1.6" fill="none"/><circle cx="662" cy="446.25" r="0.9" fill="#c8c890"/><rect x="716" y="438.85" width="54.5" height="14.85" fill="#38562a"/><rect x="717.3" y="452.4" width="51.9" height="1.5" fill="#56583c"/><ellipse cx="729.5" cy="446.18" rx="7.6" ry="6" fill="#38562a"/><ellipse cx="761.8" cy="446.18" rx="7.6" ry="6" fill="#38562a"/><rect x="738.2" y="441.78" width="15.2" height="8.8" fill="#33502a"/><ellipse cx="729.5" cy="446.18" rx="5.4" ry="4.0" fill="#d6d39c"/><ellipse cx="761.8" cy="446.18" rx="5.4" ry="4.0" fill="#d6d39c"/><path d="M731.7 442.48q2.2 3.7 0 7.4" stroke="#2a3a1a" stroke-width="1.6" fill="none"/><path d="M759.6 442.48q-2.2 3.7 0 7.4" stroke="#2a3a1a" stroke-width="1.6" fill="none"/><circle cx="718" cy="446.18" r="0.9" fill="#c8c890"/><rect x="773.5" y="438.85" width="54.5" height="14.85" fill="#38562a"/><rect x="774.8" y="452.4" width="51.9" height="1.5" fill="#56583c"/><ellipse cx="787" cy="446.18" rx="7.6" ry="6" fill="#38562a"/><ellipse cx="819.3" cy="446.18" rx="7.6" ry="6" fill="#38562a"/><rect x="795.7" y="441.78" width="15.2" height="8.8" fill="#33502a"/><ellipse cx="787" cy="446.18" rx="5.4" ry="4.0" fill="#d6d39c"/><ellipse cx="819.3" cy="446.18" rx="5.4" ry="4.0" fill="#d6d39c"/><path d="M789.2 442.48q2.2 3.7 0 7.4" stroke="#2a3a1a" stroke-width="1.6" fill="none"/><path d="M817.1 442.48q-2.2 3.7 0 7.4" stroke="#2a3a1a" stroke-width="1.6" fill="none"/><circle cx="775.5" cy="446.18" r="0.9" fill="#c8c890"/><rect x="602" y="454.6" width="53" height="13" fill="#38562a"/><rect x="602" y="467.6" width="53" height="1.9" fill="#56583c"/><ellipse cx="615.5" cy="461.1" rx="7.6" ry="6" fill="#38562a"/><ellipse cx="646.3" cy="461.1" rx="7.6" ry="6" fill="#38562a"/><rect x="624.2" y="456.7" width="13.7" height="8.8" fill="#33502a"/><ellipse cx="615.5" cy="461.1" rx="5.4" ry="4.0" fill="#d6d39c"/><ellipse cx="646.3" cy="461.1" rx="5.4" ry="4.0" fill="#d6d39c"/><path d="M617.7 457.4q2.2 3.7 0 7.4" stroke="#2a3a1a" stroke-width="1.6" fill="none"/><path d="M644.1 457.4q-2.2 3.7 0 7.4" stroke="#2a3a1a" stroke-width="1.6" fill="none"/><circle cx="604" cy="461.1" r="0.9" fill="#c8c890"/><rect x="660" y="454.6" width="53" height="13" fill="#38562a"/><rect x="660" y="467.6" width="53" height="1.9" fill="#56583c"/><ellipse cx="673.5" cy="461.1" rx="7.6" ry="6" fill="#38562a"/><ellipse cx="704.3" cy="461.1" rx="7.6" ry="6" fill="#38562a"/><rect x="682.2" y="456.7" width="13.7" height="8.8" fill="#33502a"/><ellipse cx="673.5" cy="461.1" rx="5.4" ry="4.0" fill="#d6d39c"/><ellipse cx="704.3" cy="461.1" rx="5.4" ry="4.0" fill="#d6d39c"/><path d="M675.7 457.4q2.2 3.7 0 7.4" stroke="#2a3a1a" stroke-width="1.6" fill="none"/><path d="M702.1 457.4q-2.2 3.7 0 7.4" stroke="#2a3a1a" stroke-width="1.6" fill="none"/><circle cx="662" cy="461.1" r="0.9" fill="#c8c890"/><rect x="716" y="453.7" width="54.5" height="14.85" fill="#38562a"/><rect x="717.3" y="467.25" width="51.9" height="1.5" fill="#56583c"/><ellipse cx="729.5" cy="461.02" rx="7.6" ry="6" fill="#38562a"/><ellipse cx="761.8" cy="461.02" rx="7.6" ry="6" fill="#38562a"/><rect x="738.2" y="456.62" width="15.2" height="8.8" fill="#33502a"/><ellipse cx="729.5" cy="461.02" rx="5.4" ry="4.0" fill="#d6d39c"/><ellipse cx="761.8" cy="461.02" rx="5.4" ry="4.0" fill="#d6d39c"/><path d="M731.7 457.32q2.2 3.7 0 7.4" stroke="#2a3a1a" stroke-width="1.6" fill="none"/><path d="M759.6 457.32q-2.2 3.7 0 7.4" stroke="#2a3a1a" stroke-width="1.6" fill="none"/><circle cx="718" cy="461.02" r="0.9" fill="#c8c890"/><rect x="773.5" y="453.7" width="54.5" height="14.85" fill="#38562a"/><rect x="774.8" y="467.25" width="51.9" height="1.5" fill="#56583c"/><ellipse cx="787" cy="461.02" rx="7.6" ry="6" fill="#38562a"/><ellipse cx="819.3" cy="461.02" rx="7.6" ry="6" fill="#38562a"/><rect x="795.7" y="456.62" width="15.2" height="8.8" fill="#33502a"/><ellipse cx="787" cy="461.02" rx="5.4" ry="4.0" fill="#d6d39c"/><ellipse cx="819.3" cy="461.02" rx="5.4" ry="4.0" fill="#d6d39c"/><path d="M789.2 457.32q2.2 3.7 0 7.4" stroke="#2a3a1a" stroke-width="1.6" fill="none"/><path d="M817.1 457.32q-2.2 3.7 0 7.4" stroke="#2a3a1a" stroke-width="1.6" fill="none"/><circle cx="775.5" cy="461.02" r="0.9" fill="#c8c890"/><rect x="602" y="469.45" width="53" height="13" fill="#38562a"/><rect x="602" y="482.45" width="53" height="1.9" fill="#56583c"/><ellipse cx="615.5" cy="475.95" rx="7.6" ry="6" fill="#38562a"/><ellipse cx="646.3" cy="475.95" rx="7.6" ry="6" fill="#38562a"/><rect x="624.2" y="471.55" width="13.7" height="8.8" fill="#33502a"/><ellipse cx="615.5" cy="475.95" rx="5.4" ry="4.0" fill="#d6d39c"/><ellipse cx="646.3" cy="475.95" rx="5.4" ry="4.0" fill="#d6d39c"/><path d="M617.7 472.25q2.2 3.7 0 7.4" stroke="#2a3a1a" stroke-width="1.6" fill="none"/><path d="M644.1 472.25q-2.2 3.7 0 7.4" stroke="#2a3a1a" stroke-width="1.6" fill="none"/><circle cx="604" cy="475.95" r="0.9" fill="#c8c890"/><rect x="660" y="469.45" width="53" height="13" fill="#38562a"/><rect x="660" y="482.45" width="53" height="1.9" fill="#56583c"/><ellipse cx="673.5" cy="475.95" rx="7.6" ry="6" fill="#38562a"/><ellipse cx="704.3" cy="475.95" rx="7.6" ry="6" fill="#38562a"/><rect x="682.2" y="471.55" width="13.7" height="8.8" fill="#33502a"/><ellipse cx="673.5" cy="475.95" rx="5.4" ry="4.0" fill="#d6d39c"/><ellipse cx="704.3" cy="475.95" rx="5.4" ry="4.0" fill="#d6d39c"/><path d="M675.7 472.25q2.2 3.7 0 7.4" stroke="#2a3a1a" stroke-width="1.6" fill="none"/><path d="M702.1 472.25q-2.2 3.7 0 7.4" stroke="#2a3a1a" stroke-width="1.6" fill="none"/><circle cx="662" cy="475.95" r="0.9" fill="#c8c890"/><rect x="716" y="468.55" width="54.5" height="14.85" fill="#38562a"/><rect x="717.3" y="482.1" width="51.9" height="1.5" fill="#56583c"/><ellipse cx="729.5" cy="475.88" rx="7.6" ry="6" fill="#38562a"/><ellipse cx="761.8" cy="475.88" rx="7.6" ry="6" fill="#38562a"/><rect x="738.2" y="471.48" width="15.2" height="8.8" fill="#33502a"/><ellipse cx="729.5" cy="475.88" rx="5.4" ry="4.0" fill="#d6d39c"/><ellipse cx="761.8" cy="475.88" rx="5.4" ry="4.0" fill="#d6d39c"/><path d="M731.7 472.18q2.2 3.7 0 7.4" stroke="#2a3a1a" stroke-width="1.6" fill="none"/><path d="M759.6 472.18q-2.2 3.7 0 7.4" stroke="#2a3a1a" stroke-width="1.6" fill="none"/><circle cx="718" cy="475.88" r="0.9" fill="#c8c890"/><rect x="773.5" y="468.55" width="54.5" height="14.85" fill="#38562a"/><rect x="774.8" y="482.1" width="51.9" height="1.5" fill="#56583c"/><ellipse cx="787" cy="475.88" rx="7.6" ry="6" fill="#38562a"/><ellipse cx="819.3" cy="475.88" rx="7.6" ry="6" fill="#38562a"/><rect x="795.7" y="471.48" width="15.2" height="8.8" fill="#33502a"/><ellipse cx="787" cy="475.88" rx="5.4" ry="4.0" fill="#d6d39c"/><ellipse cx="819.3" cy="475.88" rx="5.4" ry="4.0" fill="#d6d39c"/><path d="M789.2 472.18q2.2 3.7 0 7.4" stroke="#2a3a1a" stroke-width="1.6" fill="none"/><path d="M817.1 472.18q-2.2 3.7 0 7.4" stroke="#2a3a1a" stroke-width="1.6" fill="none"/><circle cx="775.5" cy="475.88" r="0.9" fill="#c8c890"/><rect x="602" y="512.6" width="53" height="13" fill="#38562a"/><rect x="602" y="525.6" width="53" height="1.9" fill="#56583c"/><ellipse cx="615.5" cy="519.1" rx="7.6" ry="6" fill="#38562a"/><ellipse cx="646.3" cy="519.1" rx="7.6" ry="6" fill="#38562a"/><rect x="624.2" y="514.7" width="13.7" height="8.8" fill="#33502a"/><ellipse cx="615.5" cy="519.1" rx="5.4" ry="4.0" fill="#d6d39c"/><ellipse cx="646.3" cy="519.1" rx="5.4" ry="4.0" fill="#d6d39c"/><path d="M617.7 515.4q2.2 3.7 0 7.4" stroke="#2a3a1a" stroke-width="1.6" fill="none"/><path d="M644.1 515.4q-2.2 3.7 0 7.4" stroke="#2a3a1a" stroke-width="1.6" fill="none"/><circle cx="604" cy="519.1" r="0.9" fill="#c8c890"/><rect x="659.5" y="512.6" width="53.5" height="13" fill="#38562a"/><rect x="659.5" y="525.6" width="53.5" height="1.9" fill="#56583c"/><ellipse cx="673" cy="519.1" rx="7.6" ry="6" fill="#38562a"/><ellipse cx="704.3" cy="519.1" rx="7.6" ry="6" fill="#38562a"/><rect x="681.7" y="514.7" width="14.2" height="8.8" fill="#33502a"/><ellipse cx="673" cy="519.1" rx="5.4" ry="4.0" fill="#d6d39c"/><ellipse cx="704.3" cy="519.1" rx="5.4" ry="4.0" fill="#d6d39c"/><path d="M675.2 515.4q2.2 3.7 0 7.4" stroke="#2a3a1a" stroke-width="1.6" fill="none"/><path d="M702.1 515.4q-2.2 3.7 0 7.4" stroke="#2a3a1a" stroke-width="1.6" fill="none"/><circle cx="661.5" cy="519.1" r="0.9" fill="#c8c890"/><rect x="716" y="512" width="54.5" height="14.85" fill="#38562a"/><rect x="717.3" y="525.55" width="51.9" height="1.5" fill="#56583c"/><ellipse cx="729.5" cy="519.32" rx="7.6" ry="6" fill="#38562a"/><ellipse cx="761.8" cy="519.32" rx="7.6" ry="6" fill="#38562a"/><rect x="738.2" y="514.92" width="15.2" height="8.8" fill="#33502a"/><ellipse cx="729.5" cy="519.32" rx="5.4" ry="4.0" fill="#d6d39c"/><ellipse cx="761.8" cy="519.32" rx="5.4" ry="4.0" fill="#d6d39c"/><path d="M731.7 515.62q2.2 3.7 0 7.4" stroke="#2a3a1a" stroke-width="1.6" fill="none"/><path d="M759.6 515.62q-2.2 3.7 0 7.4" stroke="#2a3a1a" stroke-width="1.6" fill="none"/><circle cx="718" cy="519.32" r="0.9" fill="#c8c890"/><rect x="773.5" y="512" width="54.5" height="14.85" fill="#38562a"/><rect x="774.8" y="525.55" width="51.9" height="1.5" fill="#56583c"/><ellipse cx="787" cy="519.32" rx="7.6" ry="6" fill="#38562a"/><ellipse cx="819.3" cy="519.32" rx="7.6" ry="6" fill="#38562a"/><rect x="795.7" y="514.92" width="15.2" height="8.8" fill="#33502a"/><ellipse cx="787" cy="519.32" rx="5.4" ry="4.0" fill="#d6d39c"/><ellipse cx="819.3" cy="519.32" rx="5.4" ry="4.0" fill="#d6d39c"/><path d="M789.2 515.62q2.2 3.7 0 7.4" stroke="#2a3a1a" stroke-width="1.6" fill="none"/><path d="M817.1 515.62q-2.2 3.7 0 7.4" stroke="#2a3a1a" stroke-width="1.6" fill="none"/><circle cx="775.5" cy="519.32" r="0.9" fill="#c8c890"/><rect x="602" y="527.35" width="53" height="13" fill="#38562a"/><rect x="602" y="540.35" width="53" height="1.9" fill="#56583c"/><ellipse cx="615.5" cy="533.85" rx="7.6" ry="6" fill="#38562a"/><ellipse cx="646.3" cy="533.85" rx="7.6" ry="6" fill="#38562a"/><rect x="624.2" y="529.45" width="13.7" height="8.8" fill="#33502a"/><ellipse cx="615.5" cy="533.85" rx="5.4" ry="4.0" fill="#d6d39c"/><ellipse cx="646.3" cy="533.85" rx="5.4" ry="4.0" fill="#d6d39c"/><path d="M617.7 530.15q2.2 3.7 0 7.4" stroke="#2a3a1a" stroke-width="1.6" fill="none"/><path d="M644.1 530.15q-2.2 3.7 0 7.4" stroke="#2a3a1a" stroke-width="1.6" fill="none"/><circle cx="604" cy="533.85" r="0.9" fill="#c8c890"/><rect x="659.5" y="527.35" width="53.5" height="13" fill="#38562a"/><rect x="659.5" y="540.35" width="53.5" height="1.9" fill="#56583c"/><ellipse cx="673" cy="533.85" rx="7.6" ry="6" fill="#38562a"/><ellipse cx="704.3" cy="533.85" rx="7.6" ry="6" fill="#38562a"/><rect x="681.7" y="529.45" width="14.2" height="8.8" fill="#33502a"/><ellipse cx="673" cy="533.85" rx="5.4" ry="4.0" fill="#d6d39c"/><ellipse cx="704.3" cy="533.85" rx="5.4" ry="4.0" fill="#d6d39c"/><path d="M675.2 530.15q2.2 3.7 0 7.4" stroke="#2a3a1a" stroke-width="1.6" fill="none"/><path d="M702.1 530.15q-2.2 3.7 0 7.4" stroke="#2a3a1a" stroke-width="1.6" fill="none"/><circle cx="661.5" cy="533.85" r="0.9" fill="#c8c890"/><rect x="716" y="526.85" width="54.5" height="14.85" fill="#38562a"/><rect x="717.3" y="540.4" width="51.9" height="1.5" fill="#56583c"/><ellipse cx="729.5" cy="534.17" rx="7.6" ry="6" fill="#38562a"/><ellipse cx="761.8" cy="534.17" rx="7.6" ry="6" fill="#38562a"/><rect x="738.2" y="529.77" width="15.2" height="8.8" fill="#33502a"/><ellipse cx="729.5" cy="534.17" rx="5.4" ry="4.0" fill="#d6d39c"/><ellipse cx="761.8" cy="534.17" rx="5.4" ry="4.0" fill="#d6d39c"/><path d="M731.7 530.47q2.2 3.7 0 7.4" stroke="#2a3a1a" stroke-width="1.6" fill="none"/><path d="M759.6 530.47q-2.2 3.7 0 7.4" stroke="#2a3a1a" stroke-width="1.6" fill="none"/><circle cx="718" cy="534.17" r="0.9" fill="#c8c890"/><rect x="773.5" y="526.85" width="54.5" height="14.85" fill="#38562a"/><rect x="774.8" y="540.4" width="51.9" height="1.5" fill="#56583c"/><ellipse cx="787" cy="534.17" rx="7.6" ry="6" fill="#38562a"/><ellipse cx="819.3" cy="534.17" rx="7.6" ry="6" fill="#38562a"/><rect x="795.7" y="529.77" width="15.2" height="8.8" fill="#33502a"/><ellipse cx="787" cy="534.17" rx="5.4" ry="4.0" fill="#d6d39c"/><ellipse cx="819.3" cy="534.17" rx="5.4" ry="4.0" fill="#d6d39c"/><path d="M789.2 530.47q2.2 3.7 0 7.4" stroke="#2a3a1a" stroke-width="1.6" fill="none"/><path d="M817.1 530.47q-2.2 3.7 0 7.4" stroke="#2a3a1a" stroke-width="1.6" fill="none"/><circle cx="775.5" cy="534.17" r="0.9" fill="#c8c890"/><rect x="602" y="542.1" width="53" height="13" fill="#38562a"/><rect x="602" y="555.1" width="53" height="1.9" fill="#56583c"/><ellipse cx="615.5" cy="548.6" rx="7.6" ry="6" fill="#38562a"/><ellipse cx="646.3" cy="548.6" rx="7.6" ry="6" fill="#38562a"/><rect x="624.2" y="544.2" width="13.7" height="8.8" fill="#33502a"/><ellipse cx="615.5" cy="548.6" rx="5.4" ry="4.0" fill="#d6d39c"/><ellipse cx="646.3" cy="548.6" rx="5.4" ry="4.0" fill="#d6d39c"/><path d="M617.7 544.9q2.2 3.7 0 7.4" stroke="#2a3a1a" stroke-width="1.6" fill="none"/><path d="M644.1 544.9q-2.2 3.7 0 7.4" stroke="#2a3a1a" stroke-width="1.6" fill="none"/><circle cx="604" cy="548.6" r="0.9" fill="#c8c890"/><rect x="659.5" y="542.1" width="53.5" height="13" fill="#38562a"/><rect x="659.5" y="555.1" width="53.5" height="1.9" fill="#56583c"/><ellipse cx="673" cy="548.6" rx="7.6" ry="6" fill="#38562a"/><ellipse cx="704.3" cy="548.6" rx="7.6" ry="6" fill="#38562a"/><rect x="681.7" y="544.2" width="14.2" height="8.8" fill="#33502a"/><ellipse cx="673" cy="548.6" rx="5.4" ry="4.0" fill="#d6d39c"/><ellipse cx="704.3" cy="548.6" rx="5.4" ry="4.0" fill="#d6d39c"/><path d="M675.2 544.9q2.2 3.7 0 7.4" stroke="#2a3a1a" stroke-width="1.6" fill="none"/><path d="M702.1 544.9q-2.2 3.7 0 7.4" stroke="#2a3a1a" stroke-width="1.6" fill="none"/><circle cx="661.5" cy="548.6" r="0.9" fill="#c8c890"/><rect x="716" y="541.7" width="54.5" height="14.85" fill="#38562a"/><rect x="717.3" y="555.25" width="51.9" height="1.5" fill="#56583c"/><ellipse cx="729.5" cy="549.02" rx="7.6" ry="6" fill="#38562a"/><ellipse cx="761.8" cy="549.02" rx="7.6" ry="6" fill="#38562a"/><rect x="738.2" y="544.62" width="15.2" height="8.8" fill="#33502a"/><ellipse cx="729.5" cy="549.02" rx="5.4" ry="4.0" fill="#d6d39c"/><ellipse cx="761.8" cy="549.02" rx="5.4" ry="4.0" fill="#d6d39c"/><path d="M731.7 545.32q2.2 3.7 0 7.4" stroke="#2a3a1a" stroke-width="1.6" fill="none"/><path d="M759.6 545.32q-2.2 3.7 0 7.4" stroke="#2a3a1a" stroke-width="1.6" fill="none"/><circle cx="718" cy="549.02" r="0.9" fill="#c8c890"/><rect x="773.5" y="541.7" width="54.5" height="14.85" fill="#38562a"/><rect x="774.8" y="555.25" width="51.9" height="1.5" fill="#56583c"/><ellipse cx="787" cy="549.02" rx="7.6" ry="6" fill="#38562a"/><ellipse cx="819.3" cy="549.02" rx="7.6" ry="6" fill="#38562a"/><rect x="795.7" y="544.62" width="15.2" height="8.8" fill="#33502a"/><ellipse cx="787" cy="549.02" rx="5.4" ry="4.0" fill="#d6d39c"/><ellipse cx="819.3" cy="549.02" rx="5.4" ry="4.0" fill="#d6d39c"/><path d="M789.2 545.32q2.2 3.7 0 7.4" stroke="#2a3a1a" stroke-width="1.6" fill="none"/><path d="M817.1 545.32q-2.2 3.7 0 7.4" stroke="#2a3a1a" stroke-width="1.6" fill="none"/><circle cx="775.5" cy="549.02" r="0.9" fill="#c8c890"/><rect x="602" y="556.85" width="53" height="13" fill="#38562a"/><rect x="602" y="569.85" width="53" height="1.9" fill="#56583c"/><ellipse cx="615.5" cy="563.35" rx="7.6" ry="6" fill="#38562a"/><ellipse cx="646.3" cy="563.35" rx="7.6" ry="6" fill="#38562a"/><rect x="624.2" y="558.95" width="13.7" height="8.8" fill="#33502a"/><ellipse cx="615.5" cy="563.35" rx="5.4" ry="4.0" fill="#d6d39c"/><ellipse cx="646.3" cy="563.35" rx="5.4" ry="4.0" fill="#d6d39c"/><path d="M617.7 559.65q2.2 3.7 0 7.4" stroke="#2a3a1a" stroke-width="1.6" fill="none"/><path d="M644.1 559.65q-2.2 3.7 0 7.4" stroke="#2a3a1a" stroke-width="1.6" fill="none"/><circle cx="604" cy="563.35" r="0.9" fill="#c8c890"/><rect x="659.5" y="556.85" width="53.5" height="13" fill="#38562a"/><rect x="659.5" y="569.85" width="53.5" height="1.9" fill="#56583c"/><ellipse cx="673" cy="563.35" rx="7.6" ry="6" fill="#38562a"/><ellipse cx="704.3" cy="563.35" rx="7.6" ry="6" fill="#38562a"/><rect x="681.7" y="558.95" width="14.2" height="8.8" fill="#33502a"/><ellipse cx="673" cy="563.35" rx="5.4" ry="4.0" fill="#d6d39c"/><ellipse cx="704.3" cy="563.35" rx="5.4" ry="4.0" fill="#d6d39c"/><path d="M675.2 559.65q2.2 3.7 0 7.4" stroke="#2a3a1a" stroke-width="1.6" fill="none"/><path d="M702.1 559.65q-2.2 3.7 0 7.4" stroke="#2a3a1a" stroke-width="1.6" fill="none"/><circle cx="661.5" cy="563.35" r="0.9" fill="#c8c890"/><rect x="716" y="556.55" width="54.5" height="14.85" fill="#38562a"/><rect x="717.3" y="570.1" width="51.9" height="1.5" fill="#56583c"/><ellipse cx="729.5" cy="563.87" rx="7.6" ry="6" fill="#38562a"/><ellipse cx="761.8" cy="563.87" rx="7.6" ry="6" fill="#38562a"/><rect x="738.2" y="559.47" width="15.2" height="8.8" fill="#33502a"/><ellipse cx="729.5" cy="563.87" rx="5.4" ry="4.0" fill="#d6d39c"/><ellipse cx="761.8" cy="563.87" rx="5.4" ry="4.0" fill="#d6d39c"/><path d="M731.7 560.17q2.2 3.7 0 7.4" stroke="#2a3a1a" stroke-width="1.6" fill="none"/><path d="M759.6 560.17q-2.2 3.7 0 7.4" stroke="#2a3a1a" stroke-width="1.6" fill="none"/><circle cx="718" cy="563.87" r="0.9" fill="#c8c890"/><rect x="773.5" y="556.55" width="54.5" height="14.85" fill="#38562a"/><rect x="774.8" y="570.1" width="51.9" height="1.5" fill="#56583c"/><ellipse cx="787" cy="563.87" rx="7.6" ry="6" fill="#38562a"/><ellipse cx="819.3" cy="563.87" rx="7.6" ry="6" fill="#38562a"/><rect x="795.7" y="559.47" width="15.2" height="8.8" fill="#33502a"/><ellipse cx="787" cy="563.87" rx="5.4" ry="4.0" fill="#d6d39c"/><ellipse cx="819.3" cy="563.87" rx="5.4" ry="4.0" fill="#d6d39c"/><path d="M789.2 560.17q2.2 3.7 0 7.4" stroke="#2a3a1a" stroke-width="1.6" fill="none"/><path d="M817.1 560.17q-2.2 3.7 0 7.4" stroke="#2a3a1a" stroke-width="1.6" fill="none"/><circle cx="775.5" cy="563.87" r="0.9" fill="#c8c890"/><rect x="602" y="571.6" width="53" height="13" fill="#38562a"/><rect x="602" y="584.6" width="53" height="1.9" fill="#56583c"/><ellipse cx="615.5" cy="578.1" rx="7.6" ry="6" fill="#38562a"/><ellipse cx="646.3" cy="578.1" rx="7.6" ry="6" fill="#38562a"/><rect x="624.2" y="573.7" width="13.7" height="8.8" fill="#33502a"/><ellipse cx="615.5" cy="578.1" rx="5.4" ry="4.0" fill="#d6d39c"/><ellipse cx="646.3" cy="578.1" rx="5.4" ry="4.0" fill="#d6d39c"/><path d="M617.7 574.4q2.2 3.7 0 7.4" stroke="#2a3a1a" stroke-width="1.6" fill="none"/><path d="M644.1 574.4q-2.2 3.7 0 7.4" stroke="#2a3a1a" stroke-width="1.6" fill="none"/><circle cx="604" cy="578.1" r="0.9" fill="#c8c890"/><rect x="659" y="571.4" width="54.5" height="14.85" fill="#38562a"/><rect x="660.3" y="584.95" width="51.9" height="1.5" fill="#56583c"/><ellipse cx="672.5" cy="578.72" rx="7.6" ry="6" fill="#38562a"/><ellipse cx="704.8" cy="578.72" rx="7.6" ry="6" fill="#38562a"/><rect x="681.2" y="574.32" width="15.2" height="8.8" fill="#33502a"/><ellipse cx="672.5" cy="578.72" rx="5.4" ry="4.0" fill="#d6d39c"/><ellipse cx="704.8" cy="578.72" rx="5.4" ry="4.0" fill="#d6d39c"/><path d="M674.7 575.02q2.2 3.7 0 7.4" stroke="#2a3a1a" stroke-width="1.6" fill="none"/><path d="M702.6 575.02q-2.2 3.7 0 7.4" stroke="#2a3a1a" stroke-width="1.6" fill="none"/><circle cx="661" cy="578.72" r="0.9" fill="#c8c890"/><rect x="716" y="571.4" width="54.5" height="14.85" fill="#38562a"/><rect x="717.3" y="584.95" width="51.9" height="1.5" fill="#56583c"/><ellipse cx="729.5" cy="578.72" rx="7.6" ry="6" fill="#38562a"/><ellipse cx="761.8" cy="578.72" rx="7.6" ry="6" fill="#38562a"/><rect x="738.2" y="574.32" width="15.2" height="8.8" fill="#33502a"/><ellipse cx="729.5" cy="578.72" rx="5.4" ry="4.0" fill="#d6d39c"/><ellipse cx="761.8" cy="578.72" rx="5.4" ry="4.0" fill="#d6d39c"/><path d="M731.7 575.02q2.2 3.7 0 7.4" stroke="#2a3a1a" stroke-width="1.6" fill="none"/><path d="M759.6 575.02q-2.2 3.7 0 7.4" stroke="#2a3a1a" stroke-width="1.6" fill="none"/><circle cx="718" cy="578.72" r="0.9" fill="#c8c890"/><rect x="773.5" y="571.4" width="54.5" height="14.85" fill="#38562a"/><rect x="774.8" y="584.95" width="51.9" height="1.5" fill="#56583c"/><ellipse cx="787" cy="578.72" rx="7.6" ry="6" fill="#38562a"/><ellipse cx="819.3" cy="578.72" rx="7.6" ry="6" fill="#38562a"/><rect x="795.7" y="574.32" width="15.2" height="8.8" fill="#33502a"/><ellipse cx="787" cy="578.72" rx="5.4" ry="4.0" fill="#d6d39c"/><ellipse cx="819.3" cy="578.72" rx="5.4" ry="4.0" fill="#d6d39c"/><path d="M789.2 575.02q2.2 3.7 0 7.4" stroke="#2a3a1a" stroke-width="1.6" fill="none"/><path d="M817.1 575.02q-2.2 3.7 0 7.4" stroke="#2a3a1a" stroke-width="1.6" fill="none"/><circle cx="775.5" cy="578.72" r="0.9" fill="#c8c890"/><rect x="602" y="586.35" width="53" height="13" fill="#38562a"/><rect x="602" y="599.35" width="53" height="1.9" fill="#56583c"/><ellipse cx="615.5" cy="592.85" rx="7.6" ry="6" fill="#38562a"/><ellipse cx="646.3" cy="592.85" rx="7.6" ry="6" fill="#38562a"/><rect x="624.2" y="588.45" width="13.7" height="8.8" fill="#33502a"/><ellipse cx="615.5" cy="592.85" rx="5.4" ry="4.0" fill="#d6d39c"/><ellipse cx="646.3" cy="592.85" rx="5.4" ry="4.0" fill="#d6d39c"/><path d="M617.7 589.15q2.2 3.7 0 7.4" stroke="#2a3a1a" stroke-width="1.6" fill="none"/><path d="M644.1 589.15q-2.2 3.7 0 7.4" stroke="#2a3a1a" stroke-width="1.6" fill="none"/><circle cx="604" cy="592.85" r="0.9" fill="#c8c890"/><rect x="659" y="586.25" width="54.5" height="14.85" fill="#38562a"/><rect x="660.3" y="599.8" width="51.9" height="1.5" fill="#56583c"/><ellipse cx="672.5" cy="593.57" rx="7.6" ry="6" fill="#38562a"/><ellipse cx="704.8" cy="593.57" rx="7.6" ry="6" fill="#38562a"/><rect x="681.2" y="589.17" width="15.2" height="8.8" fill="#33502a"/><ellipse cx="672.5" cy="593.57" rx="5.4" ry="4.0" fill="#d6d39c"/><ellipse cx="704.8" cy="593.57" rx="5.4" ry="4.0" fill="#d6d39c"/><path d="M674.7 589.87q2.2 3.7 0 7.4" stroke="#2a3a1a" stroke-width="1.6" fill="none"/><path d="M702.6 589.87q-2.2 3.7 0 7.4" stroke="#2a3a1a" stroke-width="1.6" fill="none"/><circle cx="661" cy="593.57" r="0.9" fill="#c8c890"/><rect x="716" y="586.25" width="54.5" height="14.85" fill="#38562a"/><rect x="717.3" y="599.8" width="51.9" height="1.5" fill="#56583c"/><ellipse cx="729.5" cy="593.57" rx="7.6" ry="6" fill="#38562a"/><ellipse cx="761.8" cy="593.57" rx="7.6" ry="6" fill="#38562a"/><rect x="738.2" y="589.17" width="15.2" height="8.8" fill="#33502a"/><ellipse cx="729.5" cy="593.57" rx="5.4" ry="4.0" fill="#d6d39c"/><ellipse cx="761.8" cy="593.57" rx="5.4" ry="4.0" fill="#d6d39c"/><path d="M731.7 589.87q2.2 3.7 0 7.4" stroke="#2a3a1a" stroke-width="1.6" fill="none"/><path d="M759.6 589.87q-2.2 3.7 0 7.4" stroke="#2a3a1a" stroke-width="1.6" fill="none"/><circle cx="718" cy="593.57" r="0.9" fill="#c8c890"/><rect x="773.5" y="586.25" width="54.5" height="14.85" fill="#38562a"/><rect x="774.8" y="599.8" width="51.9" height="1.5" fill="#56583c"/><ellipse cx="787" cy="593.57" rx="7.6" ry="6" fill="#38562a"/><ellipse cx="819.3" cy="593.57" rx="7.6" ry="6" fill="#38562a"/><rect x="795.7" y="589.17" width="15.2" height="8.8" fill="#33502a"/><ellipse cx="787" cy="593.57" rx="5.4" ry="4.0" fill="#d6d39c"/><ellipse cx="819.3" cy="593.57" rx="5.4" ry="4.0" fill="#d6d39c"/><path d="M789.2 589.87q2.2 3.7 0 7.4" stroke="#2a3a1a" stroke-width="1.6" fill="none"/><path d="M817.1 589.87q-2.2 3.7 0 7.4" stroke="#2a3a1a" stroke-width="1.6" fill="none"/><circle cx="775.5" cy="593.57" r="0.9" fill="#c8c890"/><rect x="547" y="484.5" width="164.5" height="26.5" fill="#2b2b2b" stroke="#0a0a0a" stroke-width="1"/><rect x="547" y="483.6" width="303" height="1.2" fill="#9a9a9a"/><rect x="547" y="510.8" width="303" height="1.2" fill="#9a9a9a"/><rect x="555.3" y="486" width="4.5" height="10.7" fill="#e6e6e6"/><rect x="563.6" y="487" width="13.6" height="9" fill="#333"/><rect x="566" y="489" width="1.6" height="1.6" fill="#ddd"/><rect x="569.6" y="489" width="1.6" height="1.6" fill="#ddd"/><rect x="573.2" y="489" width="1.6" height="1.6" fill="#ddd"/><rect x="565.5" y="491.5" width="9.8" height="2.2" fill="#bbb"/><rect x="609" y="487.5" width="6" height="7.5" fill="#e9e9e9"/><rect x="643.4" y="487.5" width="6" height="7.5" fill="#e9e9e9"/><rect x="619.3" y="486" width="20.7" height="11" fill="#dcb9a0" stroke="#eee" stroke-width="0.6"/><rect x="627" y="486" width="5" height="11" fill="#aaa"/><rect x="699" y="486" width="5" height="11" fill="#e6e6e6"/><rect x="555.3" y="499" width="4.5" height="10.7" fill="#e6e6e6"/><rect x="563.6" y="500" width="13.6" height="9" fill="#333"/><rect x="566" y="502" width="1.6" height="1.6" fill="#ddd"/><rect x="569.6" y="502" width="1.6" height="1.6" fill="#ddd"/><rect x="573.2" y="502" width="1.6" height="1.6" fill="#ddd"/><rect x="565.5" y="504.5" width="9.8" height="2.2" fill="#bbb"/><rect x="609" y="500.5" width="6" height="7.5" fill="#e9e9e9"/><rect x="643.4" y="500.5" width="6" height="7.5" fill="#e9e9e9"/><rect x="619.3" y="499" width="20.7" height="11" fill="#dcb9a0" stroke="#eee" stroke-width="0.6"/><rect x="627" y="499" width="5" height="11" fill="#aaa"/><rect x="699" y="499" width="5" height="11" fill="#e6e6e6"/><rect x="711.5" y="484.8" width="39" height="26" fill="#dbb79f"/><rect x="724.5" y="484.8" width="1" height="26" fill="#c4a08a"/><rect x="735" y="484.8" width="1" height="26" fill="#c4a08a"/><rect x="750.3" y="485.6" width="13.7" height="13" fill="#fff" stroke="#bbb" stroke-width="0.5"/><path d="M757.5 487.5l2.5 4h-5z" fill="none" stroke="#333" stroke-width="0.5"/><circle cx="758" cy="495" r="1.4" fill="#222"/><rect x="782.4" y="486" width="67.6" height="23.5" fill="#c4c4c4" stroke="#8f8f8f" stroke-width="0.8"/></g></defs>
<rect x="357.5" y="373" width="14" height="10" fill="#c9c9c9" stroke="#8c8c8c" stroke-width="0.8"/><rect x="357.5" y="613" width="14.5" height="10" fill="#c9c9c9" stroke="#8c8c8c" stroke-width="0.8"/><rect x="849" y="385" width="9" height="226" fill="#c6c6c6" stroke="#8c8c8c" stroke-width="0.8"/><rect x="357" y="383" width="493" height="230" fill="#c4c4c4" stroke="#8a8a8a" stroke-width="1"/><rect x="598" y="392" width="1" height="216" fill="#9a9a9a"/><rect x="589.5" y="393" width="0.8" height="84" fill="#a8a8a8"/><rect x="589.5" y="519" width="0.8" height="88" fill="#a8a8a8"/><rect x="657" y="394" width="1" height="90" fill="#9a9a9a"/><rect x="657" y="512" width="1" height="90" fill="#9a9a9a"/><rect x="607" y="385.5" width="222" height="7.5" fill="#ffffff"/><rect x="605" y="603" width="224" height="7.2" fill="#ffffff"/><rect x="550" y="477" width="39" height="6.3" fill="#ffffff"/><rect x="550" y="513" width="39" height="5.8" fill="#ffffff"/><path d="M532 477H540L532 491Z" fill="#000"/><path d="M532 504.5V518.5H540Z" fill="#000"/><path d="M540 477L547 485M532 491L547 485M532 504.5L547 511M540 518.5L547 511" stroke="#777" stroke-width="0.5" stroke-dasharray="1 1" fill="none"/><rect x="830" y="386" width="20" height="97.5" fill="#c6c6c6" stroke="#9a9a9a" stroke-width="0.8"/><rect x="830" y="512" width="20" height="97.5" fill="#c6c6c6" stroke="#9a9a9a" stroke-width="0.8"/><circle cx="836.7" cy="392" r="1.3" fill="none" stroke="#888" stroke-width="0.5"/><circle cx="836.7" cy="478" r="1.3" fill="none" stroke="#888" stroke-width="0.5"/><circle cx="836.7" cy="518" r="1.3" fill="none" stroke="#888" stroke-width="0.5"/><rect x="360" y="387" width="55" height="14.86" fill="#46294b"/><rect x="361.3" y="400.56" width="52.4" height="1.5" fill="#5b4352"/><ellipse cx="373.5" cy="394.33" rx="7.6" ry="6" fill="#40244a"/><ellipse cx="406.3" cy="394.33" rx="7.6" ry="6" fill="#40244a"/><rect x="382.2" y="389.93" width="15.7" height="8.8" fill="#2f1734"/><path d="M367.3 392.03c1 -1.2 5 -2.3 9.2 -2.2c3.3 1.2 3.3 7.8 0 9c-4.2 .1 -8.2 -1 -9.2 -2.2c-.6 -1 -.6 -3.6 0 -4.6z" fill="#e1a3b5"/><path d="M412.5 392.03c-1 -1.2 -5 -2.3 -9.2 -2.2c-3.3 1.2 -3.3 7.8 0 9c4.2 .1 8.2 -1 9.2 -2.2c.6 -1 .6 -3.6 0 -4.6z" fill="#e1a3b5"/><path d="M375.7 390.03q2.2 4.3 0 8.6" stroke="#2a1230" stroke-width="0.9" fill="none"/><path d="M404.1 390.03q-2.2 4.3 0 8.6" stroke="#2a1230" stroke-width="0.9" fill="none"/><circle cx="362" cy="394.33" r="0.9" fill="#b49ac0"/><rect x="360" y="401.86" width="55" height="14.86" fill="#46294b"/><rect x="361.3" y="415.42" width="52.4" height="1.5" fill="#5b4352"/><ellipse cx="373.5" cy="409.19" rx="7.6" ry="6" fill="#40244a"/><ellipse cx="406.3" cy="409.19" rx="7.6" ry="6" fill="#40244a"/><rect x="382.2" y="404.79" width="15.7" height="8.8" fill="#2f1734"/><path d="M367.3 406.89c1 -1.2 5 -2.3 9.2 -2.2c3.3 1.2 3.3 7.8 0 9c-4.2 .1 -8.2 -1 -9.2 -2.2c-.6 -1 -.6 -3.6 0 -4.6z" fill="#e1a3b5"/><path d="M412.5 406.89c-1 -1.2 -5 -2.3 -9.2 -2.2c-3.3 1.2 -3.3 7.8 0 9c4.2 .1 8.2 -1 9.2 -2.2c.6 -1 .6 -3.6 0 -4.6z" fill="#e1a3b5"/><path d="M375.7 404.89q2.2 4.3 0 8.6" stroke="#2a1230" stroke-width="0.9" fill="none"/><path d="M404.1 404.89q-2.2 4.3 0 8.6" stroke="#2a1230" stroke-width="0.9" fill="none"/><circle cx="362" cy="409.19" r="0.9" fill="#b49ac0"/><rect x="360" y="416.72" width="55" height="14.86" fill="#46294b"/><rect x="361.3" y="430.28" width="52.4" height="1.5" fill="#5b4352"/><ellipse cx="373.5" cy="424.05" rx="7.6" ry="6" fill="#40244a"/><ellipse cx="406.3" cy="424.05" rx="7.6" ry="6" fill="#40244a"/><rect x="382.2" y="419.65" width="15.7" height="8.8" fill="#2f1734"/><path d="M367.3 421.75c1 -1.2 5 -2.3 9.2 -2.2c3.3 1.2 3.3 7.8 0 9c-4.2 .1 -8.2 -1 -9.2 -2.2c-.6 -1 -.6 -3.6 0 -4.6z" fill="#e1a3b5"/><path d="M412.5 421.75c-1 -1.2 -5 -2.3 -9.2 -2.2c-3.3 1.2 -3.3 7.8 0 9c4.2 .1 8.2 -1 9.2 -2.2c.6 -1 .6 -3.6 0 -4.6z" fill="#e1a3b5"/><path d="M375.7 419.75q2.2 4.3 0 8.6" stroke="#2a1230" stroke-width="0.9" fill="none"/><path d="M404.1 419.75q-2.2 4.3 0 8.6" stroke="#2a1230" stroke-width="0.9" fill="none"/><circle cx="362" cy="424.05" r="0.9" fill="#b49ac0"/><rect x="360" y="431.58" width="55" height="14.86" fill="#46294b"/><rect x="361.3" y="445.14" width="52.4" height="1.5" fill="#5b4352"/><ellipse cx="373.5" cy="438.91" rx="7.6" ry="6" fill="#40244a"/><ellipse cx="406.3" cy="438.91" rx="7.6" ry="6" fill="#40244a"/><rect x="382.2" y="434.51" width="15.7" height="8.8" fill="#2f1734"/><path d="M367.3 436.61c1 -1.2 5 -2.3 9.2 -2.2c3.3 1.2 3.3 7.8 0 9c-4.2 .1 -8.2 -1 -9.2 -2.2c-.6 -1 -.6 -3.6 0 -4.6z" fill="#e1a3b5"/><path d="M412.5 436.61c-1 -1.2 -5 -2.3 -9.2 -2.2c-3.3 1.2 -3.3 7.8 0 9c4.2 .1 8.2 -1 9.2 -2.2c.6 -1 .6 -3.6 0 -4.6z" fill="#e1a3b5"/><path d="M375.7 434.61q2.2 4.3 0 8.6" stroke="#2a1230" stroke-width="0.9" fill="none"/><path d="M404.1 434.61q-2.2 4.3 0 8.6" stroke="#2a1230" stroke-width="0.9" fill="none"/><circle cx="362" cy="438.91" r="0.9" fill="#b49ac0"/><rect x="360" y="446.44" width="55" height="14.86" fill="#46294b"/><rect x="361.3" y="460" width="52.4" height="1.5" fill="#5b4352"/><ellipse cx="373.5" cy="453.77" rx="7.6" ry="6" fill="#40244a"/><ellipse cx="406.3" cy="453.77" rx="7.6" ry="6" fill="#40244a"/><rect x="382.2" y="449.37" width="15.7" height="8.8" fill="#2f1734"/><path d="M367.3 451.47c1 -1.2 5 -2.3 9.2 -2.2c3.3 1.2 3.3 7.8 0 9c-4.2 .1 -8.2 -1 -9.2 -2.2c-.6 -1 -.6 -3.6 0 -4.6z" fill="#e1a3b5"/><path d="M412.5 451.47c-1 -1.2 -5 -2.3 -9.2 -2.2c-3.3 1.2 -3.3 7.8 0 9c4.2 .1 8.2 -1 9.2 -2.2c.6 -1 .6 -3.6 0 -4.6z" fill="#e1a3b5"/><path d="M375.7 449.47q2.2 4.3 0 8.6" stroke="#2a1230" stroke-width="0.9" fill="none"/><path d="M404.1 449.47q-2.2 4.3 0 8.6" stroke="#2a1230" stroke-width="0.9" fill="none"/><circle cx="362" cy="453.77" r="0.9" fill="#b49ac0"/><rect x="360" y="461.3" width="55" height="14.86" fill="#46294b"/><rect x="361.3" y="474.86" width="52.4" height="1.5" fill="#5b4352"/><ellipse cx="373.5" cy="468.63" rx="7.6" ry="6" fill="#40244a"/><ellipse cx="406.3" cy="468.63" rx="7.6" ry="6" fill="#40244a"/><rect x="382.2" y="464.23" width="15.7" height="8.8" fill="#2f1734"/><path d="M367.3 466.33c1 -1.2 5 -2.3 9.2 -2.2c3.3 1.2 3.3 7.8 0 9c-4.2 .1 -8.2 -1 -9.2 -2.2c-.6 -1 -.6 -3.6 0 -4.6z" fill="#e1a3b5"/><path d="M412.5 466.33c-1 -1.2 -5 -2.3 -9.2 -2.2c-3.3 1.2 -3.3 7.8 0 9c4.2 .1 8.2 -1 9.2 -2.2c.6 -1 .6 -3.6 0 -4.6z" fill="#e1a3b5"/><path d="M375.7 464.33q2.2 4.3 0 8.6" stroke="#2a1230" stroke-width="0.9" fill="none"/><path d="M404.1 464.33q-2.2 4.3 0 8.6" stroke="#2a1230" stroke-width="0.9" fill="none"/><circle cx="362" cy="468.63" r="0.9" fill="#b49ac0"/><rect x="360" y="476.16" width="55" height="14.86" fill="#46294b"/><rect x="361.3" y="489.72" width="52.4" height="1.5" fill="#5b4352"/><ellipse cx="373.5" cy="483.49" rx="7.6" ry="6" fill="#40244a"/><ellipse cx="406.3" cy="483.49" rx="7.6" ry="6" fill="#40244a"/><rect x="382.2" y="479.09" width="15.7" height="8.8" fill="#2f1734"/><path d="M367.3 481.19c1 -1.2 5 -2.3 9.2 -2.2c3.3 1.2 3.3 7.8 0 9c-4.2 .1 -8.2 -1 -9.2 -2.2c-.6 -1 -.6 -3.6 0 -4.6z" fill="#e1a3b5"/><path d="M412.5 481.19c-1 -1.2 -5 -2.3 -9.2 -2.2c-3.3 1.2 -3.3 7.8 0 9c4.2 .1 8.2 -1 9.2 -2.2c.6 -1 .6 -3.6 0 -4.6z" fill="#e1a3b5"/><path d="M375.7 479.19q2.2 4.3 0 8.6" stroke="#2a1230" stroke-width="0.9" fill="none"/><path d="M404.1 479.19q-2.2 4.3 0 8.6" stroke="#2a1230" stroke-width="0.9" fill="none"/><circle cx="362" cy="483.49" r="0.9" fill="#b49ac0"/><rect x="418" y="387" width="54.5" height="14.86" fill="#46294b"/><rect x="419.3" y="400.56" width="51.9" height="1.5" fill="#5b4352"/><ellipse cx="431.5" cy="394.33" rx="7.6" ry="6" fill="#40244a"/><ellipse cx="463.8" cy="394.33" rx="7.6" ry="6" fill="#40244a"/><rect x="440.2" y="389.93" width="15.2" height="8.8" fill="#2f1734"/><path d="M425.3 392.03c1 -1.2 5 -2.3 9.2 -2.2c3.3 1.2 3.3 7.8 0 9c-4.2 .1 -8.2 -1 -9.2 -2.2c-.6 -1 -.6 -3.6 0 -4.6z" fill="#e1a3b5"/><path d="M470 392.03c-1 -1.2 -5 -2.3 -9.2 -2.2c-3.3 1.2 -3.3 7.8 0 9c4.2 .1 8.2 -1 9.2 -2.2c.6 -1 .6 -3.6 0 -4.6z" fill="#e1a3b5"/><path d="M433.7 390.03q2.2 4.3 0 8.6" stroke="#2a1230" stroke-width="0.9" fill="none"/><path d="M461.6 390.03q-2.2 4.3 0 8.6" stroke="#2a1230" stroke-width="0.9" fill="none"/><circle cx="420" cy="394.33" r="0.9" fill="#b49ac0"/><rect x="418" y="401.86" width="54.5" height="14.86" fill="#46294b"/><rect x="419.3" y="415.42" width="51.9" height="1.5" fill="#5b4352"/><ellipse cx="431.5" cy="409.19" rx="7.6" ry="6" fill="#40244a"/><ellipse cx="463.8" cy="409.19" rx="7.6" ry="6" fill="#40244a"/><rect x="440.2" y="404.79" width="15.2" height="8.8" fill="#2f1734"/><path d="M425.3 406.89c1 -1.2 5 -2.3 9.2 -2.2c3.3 1.2 3.3 7.8 0 9c-4.2 .1 -8.2 -1 -9.2 -2.2c-.6 -1 -.6 -3.6 0 -4.6z" fill="#e1a3b5"/><path d="M470 406.89c-1 -1.2 -5 -2.3 -9.2 -2.2c-3.3 1.2 -3.3 7.8 0 9c4.2 .1 8.2 -1 9.2 -2.2c.6 -1 .6 -3.6 0 -4.6z" fill="#e1a3b5"/><path d="M433.7 404.89q2.2 4.3 0 8.6" stroke="#2a1230" stroke-width="0.9" fill="none"/><path d="M461.6 404.89q-2.2 4.3 0 8.6" stroke="#2a1230" stroke-width="0.9" fill="none"/><circle cx="420" cy="409.19" r="0.9" fill="#b49ac0"/><rect x="418" y="416.72" width="54.5" height="14.86" fill="#46294b"/><rect x="419.3" y="430.28" width="51.9" height="1.5" fill="#5b4352"/><ellipse cx="431.5" cy="424.05" rx="7.6" ry="6" fill="#40244a"/><ellipse cx="463.8" cy="424.05" rx="7.6" ry="6" fill="#40244a"/><rect x="440.2" y="419.65" width="15.2" height="8.8" fill="#2f1734"/><path d="M425.3 421.75c1 -1.2 5 -2.3 9.2 -2.2c3.3 1.2 3.3 7.8 0 9c-4.2 .1 -8.2 -1 -9.2 -2.2c-.6 -1 -.6 -3.6 0 -4.6z" fill="#e1a3b5"/><path d="M470 421.75c-1 -1.2 -5 -2.3 -9.2 -2.2c-3.3 1.2 -3.3 7.8 0 9c4.2 .1 8.2 -1 9.2 -2.2c.6 -1 .6 -3.6 0 -4.6z" fill="#e1a3b5"/><path d="M433.7 419.75q2.2 4.3 0 8.6" stroke="#2a1230" stroke-width="0.9" fill="none"/><path d="M461.6 419.75q-2.2 4.3 0 8.6" stroke="#2a1230" stroke-width="0.9" fill="none"/><circle cx="420" cy="424.05" r="0.9" fill="#b49ac0"/><rect x="418" y="431.58" width="54.5" height="14.86" fill="#46294b"/><rect x="419.3" y="445.14" width="51.9" height="1.5" fill="#5b4352"/><ellipse cx="431.5" cy="438.91" rx="7.6" ry="6" fill="#40244a"/><ellipse cx="463.8" cy="438.91" rx="7.6" ry="6" fill="#40244a"/><rect x="440.2" y="434.51" width="15.2" height="8.8" fill="#2f1734"/><path d="M425.3 436.61c1 -1.2 5 -2.3 9.2 -2.2c3.3 1.2 3.3 7.8 0 9c-4.2 .1 -8.2 -1 -9.2 -2.2c-.6 -1 -.6 -3.6 0 -4.6z" fill="#e1a3b5"/><path d="M470 436.61c-1 -1.2 -5 -2.3 -9.2 -2.2c-3.3 1.2 -3.3 7.8 0 9c4.2 .1 8.2 -1 9.2 -2.2c.6 -1 .6 -3.6 0 -4.6z" fill="#e1a3b5"/><path d="M433.7 434.61q2.2 4.3 0 8.6" stroke="#2a1230" stroke-width="0.9" fill="none"/><path d="M461.6 434.61q-2.2 4.3 0 8.6" stroke="#2a1230" stroke-width="0.9" fill="none"/><circle cx="420" cy="438.91" r="0.9" fill="#b49ac0"/><rect x="418" y="446.44" width="54.5" height="14.86" fill="#46294b"/><rect x="419.3" y="460" width="51.9" height="1.5" fill="#5b4352"/><ellipse cx="431.5" cy="453.77" rx="7.6" ry="6" fill="#40244a"/><ellipse cx="463.8" cy="453.77" rx="7.6" ry="6" fill="#40244a"/><rect x="440.2" y="449.37" width="15.2" height="8.8" fill="#2f1734"/><path d="M425.3 451.47c1 -1.2 5 -2.3 9.2 -2.2c3.3 1.2 3.3 7.8 0 9c-4.2 .1 -8.2 -1 -9.2 -2.2c-.6 -1 -.6 -3.6 0 -4.6z" fill="#e1a3b5"/><path d="M470 451.47c-1 -1.2 -5 -2.3 -9.2 -2.2c-3.3 1.2 -3.3 7.8 0 9c4.2 .1 8.2 -1 9.2 -2.2c.6 -1 .6 -3.6 0 -4.6z" fill="#e1a3b5"/><path d="M433.7 449.47q2.2 4.3 0 8.6" stroke="#2a1230" stroke-width="0.9" fill="none"/><path d="M461.6 449.47q-2.2 4.3 0 8.6" stroke="#2a1230" stroke-width="0.9" fill="none"/><circle cx="420" cy="453.77" r="0.9" fill="#b49ac0"/><rect x="418" y="461.3" width="54.5" height="14.86" fill="#46294b"/><rect x="419.3" y="474.86" width="51.9" height="1.5" fill="#5b4352"/><ellipse cx="431.5" cy="468.63" rx="7.6" ry="6" fill="#40244a"/><ellipse cx="463.8" cy="468.63" rx="7.6" ry="6" fill="#40244a"/><rect x="440.2" y="464.23" width="15.2" height="8.8" fill="#2f1734"/><path d="M425.3 466.33c1 -1.2 5 -2.3 9.2 -2.2c3.3 1.2 3.3 7.8 0 9c-4.2 .1 -8.2 -1 -9.2 -2.2c-.6 -1 -.6 -3.6 0 -4.6z" fill="#e1a3b5"/><path d="M470 466.33c-1 -1.2 -5 -2.3 -9.2 -2.2c-3.3 1.2 -3.3 7.8 0 9c4.2 .1 8.2 -1 9.2 -2.2c.6 -1 .6 -3.6 0 -4.6z" fill="#e1a3b5"/><path d="M433.7 464.33q2.2 4.3 0 8.6" stroke="#2a1230" stroke-width="0.9" fill="none"/><path d="M461.6 464.33q-2.2 4.3 0 8.6" stroke="#2a1230" stroke-width="0.9" fill="none"/><circle cx="420" cy="468.63" r="0.9" fill="#b49ac0"/><rect x="418" y="476.16" width="54.5" height="14.86" fill="#46294b"/><rect x="419.3" y="489.72" width="51.9" height="1.5" fill="#5b4352"/><ellipse cx="431.5" cy="483.49" rx="7.6" ry="6" fill="#40244a"/><ellipse cx="463.8" cy="483.49" rx="7.6" ry="6" fill="#40244a"/><rect x="440.2" y="479.09" width="15.2" height="8.8" fill="#2f1734"/><path d="M425.3 481.19c1 -1.2 5 -2.3 9.2 -2.2c3.3 1.2 3.3 7.8 0 9c-4.2 .1 -8.2 -1 -9.2 -2.2c-.6 -1 -.6 -3.6 0 -4.6z" fill="#e1a3b5"/><path d="M470 481.19c-1 -1.2 -5 -2.3 -9.2 -2.2c-3.3 1.2 -3.3 7.8 0 9c4.2 .1 8.2 -1 9.2 -2.2c.6 -1 .6 -3.6 0 -4.6z" fill="#e1a3b5"/><path d="M433.7 479.19q2.2 4.3 0 8.6" stroke="#2a1230" stroke-width="0.9" fill="none"/><path d="M461.6 479.19q-2.2 4.3 0 8.6" stroke="#2a1230" stroke-width="0.9" fill="none"/><circle cx="420" cy="483.49" r="0.9" fill="#b49ac0"/><rect x="475" y="387" width="55" height="14.86" fill="#46294b"/><rect x="476.3" y="400.56" width="52.4" height="1.5" fill="#5b4352"/><ellipse cx="488.5" cy="394.33" rx="7.6" ry="6" fill="#40244a"/><ellipse cx="521.3" cy="394.33" rx="7.6" ry="6" fill="#40244a"/><rect x="497.2" y="389.93" width="15.7" height="8.8" fill="#2f1734"/><path d="M482.3 392.03c1 -1.2 5 -2.3 9.2 -2.2c3.3 1.2 3.3 7.8 0 9c-4.2 .1 -8.2 -1 -9.2 -2.2c-.6 -1 -.6 -3.6 0 -4.6z" fill="#e1a3b5"/><path d="M527.5 392.03c-1 -1.2 -5 -2.3 -9.2 -2.2c-3.3 1.2 -3.3 7.8 0 9c4.2 .1 8.2 -1 9.2 -2.2c.6 -1 .6 -3.6 0 -4.6z" fill="#e1a3b5"/><path d="M490.7 390.03q2.2 4.3 0 8.6" stroke="#2a1230" stroke-width="0.9" fill="none"/><path d="M519.1 390.03q-2.2 4.3 0 8.6" stroke="#2a1230" stroke-width="0.9" fill="none"/><circle cx="477" cy="394.33" r="0.9" fill="#b49ac0"/><rect x="475" y="401.86" width="55" height="14.86" fill="#46294b"/><rect x="476.3" y="415.42" width="52.4" height="1.5" fill="#5b4352"/><ellipse cx="488.5" cy="409.19" rx="7.6" ry="6" fill="#40244a"/><ellipse cx="521.3" cy="409.19" rx="7.6" ry="6" fill="#40244a"/><rect x="497.2" y="404.79" width="15.7" height="8.8" fill="#2f1734"/><path d="M482.3 406.89c1 -1.2 5 -2.3 9.2 -2.2c3.3 1.2 3.3 7.8 0 9c-4.2 .1 -8.2 -1 -9.2 -2.2c-.6 -1 -.6 -3.6 0 -4.6z" fill="#e1a3b5"/><path d="M527.5 406.89c-1 -1.2 -5 -2.3 -9.2 -2.2c-3.3 1.2 -3.3 7.8 0 9c4.2 .1 8.2 -1 9.2 -2.2c.6 -1 .6 -3.6 0 -4.6z" fill="#e1a3b5"/><path d="M490.7 404.89q2.2 4.3 0 8.6" stroke="#2a1230" stroke-width="0.9" fill="none"/><path d="M519.1 404.89q-2.2 4.3 0 8.6" stroke="#2a1230" stroke-width="0.9" fill="none"/><circle cx="477" cy="409.19" r="0.9" fill="#b49ac0"/><rect x="475" y="416.72" width="55" height="14.86" fill="#46294b"/><rect x="476.3" y="430.28" width="52.4" height="1.5" fill="#5b4352"/><ellipse cx="488.5" cy="424.05" rx="7.6" ry="6" fill="#40244a"/><ellipse cx="521.3" cy="424.05" rx="7.6" ry="6" fill="#40244a"/><rect x="497.2" y="419.65" width="15.7" height="8.8" fill="#2f1734"/><path d="M482.3 421.75c1 -1.2 5 -2.3 9.2 -2.2c3.3 1.2 3.3 7.8 0 9c-4.2 .1 -8.2 -1 -9.2 -2.2c-.6 -1 -.6 -3.6 0 -4.6z" fill="#e1a3b5"/><path d="M527.5 421.75c-1 -1.2 -5 -2.3 -9.2 -2.2c-3.3 1.2 -3.3 7.8 0 9c4.2 .1 8.2 -1 9.2 -2.2c.6 -1 .6 -3.6 0 -4.6z" fill="#e1a3b5"/><path d="M490.7 419.75q2.2 4.3 0 8.6" stroke="#2a1230" stroke-width="0.9" fill="none"/><path d="M519.1 419.75q-2.2 4.3 0 8.6" stroke="#2a1230" stroke-width="0.9" fill="none"/><circle cx="477" cy="424.05" r="0.9" fill="#b49ac0"/><rect x="475" y="431.58" width="55" height="14.86" fill="#46294b"/><rect x="476.3" y="445.14" width="52.4" height="1.5" fill="#5b4352"/><ellipse cx="488.5" cy="438.91" rx="7.6" ry="6" fill="#40244a"/><ellipse cx="521.3" cy="438.91" rx="7.6" ry="6" fill="#40244a"/><rect x="497.2" y="434.51" width="15.7" height="8.8" fill="#2f1734"/><path d="M482.3 436.61c1 -1.2 5 -2.3 9.2 -2.2c3.3 1.2 3.3 7.8 0 9c-4.2 .1 -8.2 -1 -9.2 -2.2c-.6 -1 -.6 -3.6 0 -4.6z" fill="#e1a3b5"/><path d="M527.5 436.61c-1 -1.2 -5 -2.3 -9.2 -2.2c-3.3 1.2 -3.3 7.8 0 9c4.2 .1 8.2 -1 9.2 -2.2c.6 -1 .6 -3.6 0 -4.6z" fill="#e1a3b5"/><path d="M490.7 434.61q2.2 4.3 0 8.6" stroke="#2a1230" stroke-width="0.9" fill="none"/><path d="M519.1 434.61q-2.2 4.3 0 8.6" stroke="#2a1230" stroke-width="0.9" fill="none"/><circle cx="477" cy="438.91" r="0.9" fill="#b49ac0"/><rect x="475" y="446.44" width="55" height="14.86" fill="#46294b"/><rect x="476.3" y="460" width="52.4" height="1.5" fill="#5b4352"/><ellipse cx="488.5" cy="453.77" rx="7.6" ry="6" fill="#40244a"/><ellipse cx="521.3" cy="453.77" rx="7.6" ry="6" fill="#40244a"/><rect x="497.2" y="449.37" width="15.7" height="8.8" fill="#2f1734"/><path d="M482.3 451.47c1 -1.2 5 -2.3 9.2 -2.2c3.3 1.2 3.3 7.8 0 9c-4.2 .1 -8.2 -1 -9.2 -2.2c-.6 -1 -.6 -3.6 0 -4.6z" fill="#e1a3b5"/><path d="M527.5 451.47c-1 -1.2 -5 -2.3 -9.2 -2.2c-3.3 1.2 -3.3 7.8 0 9c4.2 .1 8.2 -1 9.2 -2.2c.6 -1 .6 -3.6 0 -4.6z" fill="#e1a3b5"/><path d="M490.7 449.47q2.2 4.3 0 8.6" stroke="#2a1230" stroke-width="0.9" fill="none"/><path d="M519.1 449.47q-2.2 4.3 0 8.6" stroke="#2a1230" stroke-width="0.9" fill="none"/><circle cx="477" cy="453.77" r="0.9" fill="#b49ac0"/><rect x="475" y="461.3" width="55" height="14.86" fill="#46294b"/><rect x="476.3" y="474.86" width="52.4" height="1.5" fill="#5b4352"/><ellipse cx="488.5" cy="468.63" rx="7.6" ry="6" fill="#40244a"/><ellipse cx="521.3" cy="468.63" rx="7.6" ry="6" fill="#40244a"/><rect x="497.2" y="464.23" width="15.7" height="8.8" fill="#2f1734"/><path d="M482.3 466.33c1 -1.2 5 -2.3 9.2 -2.2c3.3 1.2 3.3 7.8 0 9c-4.2 .1 -8.2 -1 -9.2 -2.2c-.6 -1 -.6 -3.6 0 -4.6z" fill="#e1a3b5"/><path d="M527.5 466.33c-1 -1.2 -5 -2.3 -9.2 -2.2c-3.3 1.2 -3.3 7.8 0 9c4.2 .1 8.2 -1 9.2 -2.2c.6 -1 .6 -3.6 0 -4.6z" fill="#e1a3b5"/><path d="M490.7 464.33q2.2 4.3 0 8.6" stroke="#2a1230" stroke-width="0.9" fill="none"/><path d="M519.1 464.33q-2.2 4.3 0 8.6" stroke="#2a1230" stroke-width="0.9" fill="none"/><circle cx="477" cy="468.63" r="0.9" fill="#b49ac0"/><rect x="475" y="476.16" width="55" height="14.86" fill="#46294b"/><rect x="476.3" y="489.72" width="52.4" height="1.5" fill="#5b4352"/><ellipse cx="488.5" cy="483.49" rx="7.6" ry="6" fill="#40244a"/><ellipse cx="521.3" cy="483.49" rx="7.6" ry="6" fill="#40244a"/><rect x="497.2" y="479.09" width="15.7" height="8.8" fill="#2f1734"/><path d="M482.3 481.19c1 -1.2 5 -2.3 9.2 -2.2c3.3 1.2 3.3 7.8 0 9c-4.2 .1 -8.2 -1 -9.2 -2.2c-.6 -1 -.6 -3.6 0 -4.6z" fill="#e1a3b5"/><path d="M527.5 481.19c-1 -1.2 -5 -2.3 -9.2 -2.2c-3.3 1.2 -3.3 7.8 0 9c4.2 .1 8.2 -1 9.2 -2.2c.6 -1 .6 -3.6 0 -4.6z" fill="#e1a3b5"/><path d="M490.7 479.19q2.2 4.3 0 8.6" stroke="#2a1230" stroke-width="0.9" fill="none"/><path d="M519.1 479.19q-2.2 4.3 0 8.6" stroke="#2a1230" stroke-width="0.9" fill="none"/><circle cx="477" cy="483.49" r="0.9" fill="#b49ac0"/><rect x="533" y="388" width="53" height="13" fill="#1f6671"/><rect x="533" y="401" width="53" height="1.9" fill="#d9d2d2"/><ellipse cx="546.5" cy="394.5" rx="7.6" ry="6" fill="#1b5e68"/><ellipse cx="577.3" cy="394.5" rx="7.6" ry="6" fill="#1b5e68"/><rect x="555.2" y="390.1" width="13.7" height="8.8" fill="#14535d"/><path d="M540.3 392.2c1 -1.2 5 -2.3 9.2 -2.2c3.3 1.2 3.3 7.8 0 9c-4.2 .1 -8.2 -1 -9.2 -2.2c-.6 -1 -.6 -3.6 0 -4.6z" fill="#a0cdc6"/><path d="M583.5 392.2c-1 -1.2 -5 -2.3 -9.2 -2.2c-3.3 1.2 -3.3 7.8 0 9c4.2 .1 8.2 -1 9.2 -2.2c.6 -1 .6 -3.6 0 -4.6z" fill="#a0cdc6"/><path d="M548.7 390.2q2.2 4.3 0 8.6" stroke="#0f3e46" stroke-width="0.9" fill="none"/><path d="M575.1 390.2q-2.2 4.3 0 8.6" stroke="#0f3e46" stroke-width="0.9" fill="none"/><circle cx="535" cy="394.5" r="0.9" fill="#6cc6d6"/><rect x="533" y="402.9" width="53" height="13" fill="#1f6671"/><rect x="533" y="415.9" width="53" height="1.9" fill="#d9d2d2"/><ellipse cx="546.5" cy="409.4" rx="7.6" ry="6" fill="#1b5e68"/><ellipse cx="577.3" cy="409.4" rx="7.6" ry="6" fill="#1b5e68"/><rect x="555.2" y="405" width="13.7" height="8.8" fill="#14535d"/><path d="M540.3 407.1c1 -1.2 5 -2.3 9.2 -2.2c3.3 1.2 3.3 7.8 0 9c-4.2 .1 -8.2 -1 -9.2 -2.2c-.6 -1 -.6 -3.6 0 -4.6z" fill="#a0cdc6"/><path d="M583.5 407.1c-1 -1.2 -5 -2.3 -9.2 -2.2c-3.3 1.2 -3.3 7.8 0 9c4.2 .1 8.2 -1 9.2 -2.2c.6 -1 .6 -3.6 0 -4.6z" fill="#a0cdc6"/><path d="M548.7 405.1q2.2 4.3 0 8.6" stroke="#0f3e46" stroke-width="0.9" fill="none"/><path d="M575.1 405.1q-2.2 4.3 0 8.6" stroke="#0f3e46" stroke-width="0.9" fill="none"/><circle cx="535" cy="409.4" r="0.9" fill="#6cc6d6"/><rect x="533" y="417.8" width="53" height="13" fill="#1f6671"/><rect x="533" y="430.8" width="53" height="1.9" fill="#d9d2d2"/><ellipse cx="546.5" cy="424.3" rx="7.6" ry="6" fill="#1b5e68"/><ellipse cx="577.3" cy="424.3" rx="7.6" ry="6" fill="#1b5e68"/><rect x="555.2" y="419.9" width="13.7" height="8.8" fill="#14535d"/><path d="M540.3 422c1 -1.2 5 -2.3 9.2 -2.2c3.3 1.2 3.3 7.8 0 9c-4.2 .1 -8.2 -1 -9.2 -2.2c-.6 -1 -.6 -3.6 0 -4.6z" fill="#a0cdc6"/><path d="M583.5 422c-1 -1.2 -5 -2.3 -9.2 -2.2c-3.3 1.2 -3.3 7.8 0 9c4.2 .1 8.2 -1 9.2 -2.2c.6 -1 .6 -3.6 0 -4.6z" fill="#a0cdc6"/><path d="M548.7 420q2.2 4.3 0 8.6" stroke="#0f3e46" stroke-width="0.9" fill="none"/><path d="M575.1 420q-2.2 4.3 0 8.6" stroke="#0f3e46" stroke-width="0.9" fill="none"/><circle cx="535" cy="424.3" r="0.9" fill="#6cc6d6"/><rect x="533" y="432.7" width="53" height="13" fill="#1f6671"/><rect x="533" y="445.7" width="53" height="1.9" fill="#d9d2d2"/><ellipse cx="546.5" cy="439.2" rx="7.6" ry="6" fill="#1b5e68"/><ellipse cx="577.3" cy="439.2" rx="7.6" ry="6" fill="#1b5e68"/><rect x="555.2" y="434.8" width="13.7" height="8.8" fill="#14535d"/><path d="M540.3 436.9c1 -1.2 5 -2.3 9.2 -2.2c3.3 1.2 3.3 7.8 0 9c-4.2 .1 -8.2 -1 -9.2 -2.2c-.6 -1 -.6 -3.6 0 -4.6z" fill="#a0cdc6"/><path d="M583.5 436.9c-1 -1.2 -5 -2.3 -9.2 -2.2c-3.3 1.2 -3.3 7.8 0 9c4.2 .1 8.2 -1 9.2 -2.2c.6 -1 .6 -3.6 0 -4.6z" fill="#a0cdc6"/><path d="M548.7 434.9q2.2 4.3 0 8.6" stroke="#0f3e46" stroke-width="0.9" fill="none"/><path d="M575.1 434.9q-2.2 4.3 0 8.6" stroke="#0f3e46" stroke-width="0.9" fill="none"/><circle cx="535" cy="439.2" r="0.9" fill="#6cc6d6"/><rect x="533" y="447.6" width="53" height="13" fill="#1f6671"/><rect x="533" y="460.6" width="53" height="1.9" fill="#d9d2d2"/><ellipse cx="546.5" cy="454.1" rx="7.6" ry="6" fill="#1b5e68"/><ellipse cx="577.3" cy="454.1" rx="7.6" ry="6" fill="#1b5e68"/><rect x="555.2" y="449.7" width="13.7" height="8.8" fill="#14535d"/><path d="M540.3 451.8c1 -1.2 5 -2.3 9.2 -2.2c3.3 1.2 3.3 7.8 0 9c-4.2 .1 -8.2 -1 -9.2 -2.2c-.6 -1 -.6 -3.6 0 -4.6z" fill="#a0cdc6"/><path d="M583.5 451.8c-1 -1.2 -5 -2.3 -9.2 -2.2c-3.3 1.2 -3.3 7.8 0 9c4.2 .1 8.2 -1 9.2 -2.2c.6 -1 .6 -3.6 0 -4.6z" fill="#a0cdc6"/><path d="M548.7 449.8q2.2 4.3 0 8.6" stroke="#0f3e46" stroke-width="0.9" fill="none"/><path d="M575.1 449.8q-2.2 4.3 0 8.6" stroke="#0f3e46" stroke-width="0.9" fill="none"/><circle cx="535" cy="454.1" r="0.9" fill="#6cc6d6"/><rect x="533" y="462.5" width="53" height="13" fill="#1f6671"/><rect x="533" y="475.5" width="53" height="1.9" fill="#d9d2d2"/><ellipse cx="546.5" cy="469" rx="7.6" ry="6" fill="#1b5e68"/><ellipse cx="577.3" cy="469" rx="7.6" ry="6" fill="#1b5e68"/><rect x="555.2" y="464.6" width="13.7" height="8.8" fill="#14535d"/><path d="M540.3 466.7c1 -1.2 5 -2.3 9.2 -2.2c3.3 1.2 3.3 7.8 0 9c-4.2 .1 -8.2 -1 -9.2 -2.2c-.6 -1 -.6 -3.6 0 -4.6z" fill="#a0cdc6"/><path d="M583.5 466.7c-1 -1.2 -5 -2.3 -9.2 -2.2c-3.3 1.2 -3.3 7.8 0 9c4.2 .1 8.2 -1 9.2 -2.2c.6 -1 .6 -3.6 0 -4.6z" fill="#a0cdc6"/><path d="M548.7 464.7q2.2 4.3 0 8.6" stroke="#0f3e46" stroke-width="0.9" fill="none"/><path d="M575.1 464.7q-2.2 4.3 0 8.6" stroke="#0f3e46" stroke-width="0.9" fill="none"/><circle cx="535" cy="469" r="0.9" fill="#6cc6d6"/><rect x="360" y="504.5" width="55" height="14.93" fill="#46294b"/><rect x="361.3" y="518.13" width="52.4" height="1.5" fill="#5b4352"/><ellipse cx="373.5" cy="511.86" rx="7.6" ry="6" fill="#40244a"/><ellipse cx="406.3" cy="511.86" rx="7.6" ry="6" fill="#40244a"/><rect x="382.2" y="507.46" width="15.7" height="8.8" fill="#2f1734"/><path d="M367.3 509.56c1 -1.2 5 -2.3 9.2 -2.2c3.3 1.2 3.3 7.8 0 9c-4.2 .1 -8.2 -1 -9.2 -2.2c-.6 -1 -.6 -3.6 0 -4.6z" fill="#e1a3b5"/><path d="M412.5 509.56c-1 -1.2 -5 -2.3 -9.2 -2.2c-3.3 1.2 -3.3 7.8 0 9c4.2 .1 8.2 -1 9.2 -2.2c.6 -1 .6 -3.6 0 -4.6z" fill="#e1a3b5"/><path d="M375.7 507.56q2.2 4.3 0 8.6" stroke="#2a1230" stroke-width="0.9" fill="none"/><path d="M404.1 507.56q-2.2 4.3 0 8.6" stroke="#2a1230" stroke-width="0.9" fill="none"/><circle cx="362" cy="511.86" r="0.9" fill="#b49ac0"/><rect x="360" y="519.43" width="55" height="14.93" fill="#46294b"/><rect x="361.3" y="533.06" width="52.4" height="1.5" fill="#5b4352"/><ellipse cx="373.5" cy="526.79" rx="7.6" ry="6" fill="#40244a"/><ellipse cx="406.3" cy="526.79" rx="7.6" ry="6" fill="#40244a"/><rect x="382.2" y="522.39" width="15.7" height="8.8" fill="#2f1734"/><path d="M367.3 524.5c1 -1.2 5 -2.3 9.2 -2.2c3.3 1.2 3.3 7.8 0 9c-4.2 .1 -8.2 -1 -9.2 -2.2c-.6 -1 -.6 -3.6 0 -4.6z" fill="#e1a3b5"/><path d="M412.5 524.5c-1 -1.2 -5 -2.3 -9.2 -2.2c-3.3 1.2 -3.3 7.8 0 9c4.2 .1 8.2 -1 9.2 -2.2c.6 -1 .6 -3.6 0 -4.6z" fill="#e1a3b5"/><path d="M375.7 522.49q2.2 4.3 0 8.6" stroke="#2a1230" stroke-width="0.9" fill="none"/><path d="M404.1 522.49q-2.2 4.3 0 8.6" stroke="#2a1230" stroke-width="0.9" fill="none"/><circle cx="362" cy="526.79" r="0.9" fill="#b49ac0"/><rect x="360" y="534.36" width="55" height="14.93" fill="#46294b"/><rect x="361.3" y="547.99" width="52.4" height="1.5" fill="#5b4352"/><ellipse cx="373.5" cy="541.73" rx="7.6" ry="6" fill="#40244a"/><ellipse cx="406.3" cy="541.73" rx="7.6" ry="6" fill="#40244a"/><rect x="382.2" y="537.33" width="15.7" height="8.8" fill="#2f1734"/><path d="M367.3 539.43c1 -1.2 5 -2.3 9.2 -2.2c3.3 1.2 3.3 7.8 0 9c-4.2 .1 -8.2 -1 -9.2 -2.2c-.6 -1 -.6 -3.6 0 -4.6z" fill="#e1a3b5"/><path d="M412.5 539.43c-1 -1.2 -5 -2.3 -9.2 -2.2c-3.3 1.2 -3.3 7.8 0 9c4.2 .1 8.2 -1 9.2 -2.2c.6 -1 .6 -3.6 0 -4.6z" fill="#e1a3b5"/><path d="M375.7 537.42q2.2 4.3 0 8.6" stroke="#2a1230" stroke-width="0.9" fill="none"/><path d="M404.1 537.42q-2.2 4.3 0 8.6" stroke="#2a1230" stroke-width="0.9" fill="none"/><circle cx="362" cy="541.73" r="0.9" fill="#b49ac0"/><rect x="360" y="549.29" width="55" height="14.93" fill="#46294b"/><rect x="361.3" y="562.92" width="52.4" height="1.5" fill="#5b4352"/><ellipse cx="373.5" cy="556.65" rx="7.6" ry="6" fill="#40244a"/><ellipse cx="406.3" cy="556.65" rx="7.6" ry="6" fill="#40244a"/><rect x="382.2" y="552.25" width="15.7" height="8.8" fill="#2f1734"/><path d="M367.3 554.36c1 -1.2 5 -2.3 9.2 -2.2c3.3 1.2 3.3 7.8 0 9c-4.2 .1 -8.2 -1 -9.2 -2.2c-.6 -1 -.6 -3.6 0 -4.6z" fill="#e1a3b5"/><path d="M412.5 554.36c-1 -1.2 -5 -2.3 -9.2 -2.2c-3.3 1.2 -3.3 7.8 0 9c4.2 .1 8.2 -1 9.2 -2.2c.6 -1 .6 -3.6 0 -4.6z" fill="#e1a3b5"/><path d="M375.7 552.35q2.2 4.3 0 8.6" stroke="#2a1230" stroke-width="0.9" fill="none"/><path d="M404.1 552.35q-2.2 4.3 0 8.6" stroke="#2a1230" stroke-width="0.9" fill="none"/><circle cx="362" cy="556.65" r="0.9" fill="#b49ac0"/><rect x="360" y="564.22" width="55" height="14.93" fill="#46294b"/><rect x="361.3" y="577.85" width="52.4" height="1.5" fill="#5b4352"/><ellipse cx="373.5" cy="571.59" rx="7.6" ry="6" fill="#40244a"/><ellipse cx="406.3" cy="571.59" rx="7.6" ry="6" fill="#40244a"/><rect x="382.2" y="567.19" width="15.7" height="8.8" fill="#2f1734"/><path d="M367.3 569.29c1 -1.2 5 -2.3 9.2 -2.2c3.3 1.2 3.3 7.8 0 9c-4.2 .1 -8.2 -1 -9.2 -2.2c-.6 -1 -.6 -3.6 0 -4.6z" fill="#e1a3b5"/><path d="M412.5 569.29c-1 -1.2 -5 -2.3 -9.2 -2.2c-3.3 1.2 -3.3 7.8 0 9c4.2 .1 8.2 -1 9.2 -2.2c.6 -1 .6 -3.6 0 -4.6z" fill="#e1a3b5"/><path d="M375.7 567.28q2.2 4.3 0 8.6" stroke="#2a1230" stroke-width="0.9" fill="none"/><path d="M404.1 567.28q-2.2 4.3 0 8.6" stroke="#2a1230" stroke-width="0.9" fill="none"/><circle cx="362" cy="571.59" r="0.9" fill="#b49ac0"/><rect x="360" y="579.15" width="55" height="14.93" fill="#46294b"/><rect x="361.3" y="592.78" width="52.4" height="1.5" fill="#5b4352"/><ellipse cx="373.5" cy="586.51" rx="7.6" ry="6" fill="#40244a"/><ellipse cx="406.3" cy="586.51" rx="7.6" ry="6" fill="#40244a"/><rect x="382.2" y="582.12" width="15.7" height="8.8" fill="#2f1734"/><path d="M367.3 584.22c1 -1.2 5 -2.3 9.2 -2.2c3.3 1.2 3.3 7.8 0 9c-4.2 .1 -8.2 -1 -9.2 -2.2c-.6 -1 -.6 -3.6 0 -4.6z" fill="#e1a3b5"/><path d="M412.5 584.22c-1 -1.2 -5 -2.3 -9.2 -2.2c-3.3 1.2 -3.3 7.8 0 9c4.2 .1 8.2 -1 9.2 -2.2c.6 -1 .6 -3.6 0 -4.6z" fill="#e1a3b5"/><path d="M375.7 582.21q2.2 4.3 0 8.6" stroke="#2a1230" stroke-width="0.9" fill="none"/><path d="M404.1 582.21q-2.2 4.3 0 8.6" stroke="#2a1230" stroke-width="0.9" fill="none"/><circle cx="362" cy="586.51" r="0.9" fill="#b49ac0"/><rect x="360" y="594.08" width="55" height="14.93" fill="#46294b"/><rect x="361.3" y="607.71" width="52.4" height="1.5" fill="#5b4352"/><ellipse cx="373.5" cy="601.45" rx="7.6" ry="6" fill="#40244a"/><ellipse cx="406.3" cy="601.45" rx="7.6" ry="6" fill="#40244a"/><rect x="382.2" y="597.05" width="15.7" height="8.8" fill="#2f1734"/><path d="M367.3 599.15c1 -1.2 5 -2.3 9.2 -2.2c3.3 1.2 3.3 7.8 0 9c-4.2 .1 -8.2 -1 -9.2 -2.2c-.6 -1 -.6 -3.6 0 -4.6z" fill="#e1a3b5"/><path d="M412.5 599.15c-1 -1.2 -5 -2.3 -9.2 -2.2c-3.3 1.2 -3.3 7.8 0 9c4.2 .1 8.2 -1 9.2 -2.2c.6 -1 .6 -3.6 0 -4.6z" fill="#e1a3b5"/><path d="M375.7 597.14q2.2 4.3 0 8.6" stroke="#2a1230" stroke-width="0.9" fill="none"/><path d="M404.1 597.14q-2.2 4.3 0 8.6" stroke="#2a1230" stroke-width="0.9" fill="none"/><circle cx="362" cy="601.45" r="0.9" fill="#b49ac0"/><rect x="418" y="504.5" width="54.5" height="14.93" fill="#46294b"/><rect x="419.3" y="518.13" width="51.9" height="1.5" fill="#5b4352"/><ellipse cx="431.5" cy="511.86" rx="7.6" ry="6" fill="#40244a"/><ellipse cx="463.8" cy="511.86" rx="7.6" ry="6" fill="#40244a"/><rect x="440.2" y="507.46" width="15.2" height="8.8" fill="#2f1734"/><path d="M425.3 509.56c1 -1.2 5 -2.3 9.2 -2.2c3.3 1.2 3.3 7.8 0 9c-4.2 .1 -8.2 -1 -9.2 -2.2c-.6 -1 -.6 -3.6 0 -4.6z" fill="#e1a3b5"/><path d="M470 509.56c-1 -1.2 -5 -2.3 -9.2 -2.2c-3.3 1.2 -3.3 7.8 0 9c4.2 .1 8.2 -1 9.2 -2.2c.6 -1 .6 -3.6 0 -4.6z" fill="#e1a3b5"/><path d="M433.7 507.56q2.2 4.3 0 8.6" stroke="#2a1230" stroke-width="0.9" fill="none"/><path d="M461.6 507.56q-2.2 4.3 0 8.6" stroke="#2a1230" stroke-width="0.9" fill="none"/><circle cx="420" cy="511.86" r="0.9" fill="#b49ac0"/><rect x="418" y="519.43" width="54.5" height="14.93" fill="#46294b"/><rect x="419.3" y="533.06" width="51.9" height="1.5" fill="#5b4352"/><ellipse cx="431.5" cy="526.79" rx="7.6" ry="6" fill="#40244a"/><ellipse cx="463.8" cy="526.79" rx="7.6" ry="6" fill="#40244a"/><rect x="440.2" y="522.39" width="15.2" height="8.8" fill="#2f1734"/><path d="M425.3 524.5c1 -1.2 5 -2.3 9.2 -2.2c3.3 1.2 3.3 7.8 0 9c-4.2 .1 -8.2 -1 -9.2 -2.2c-.6 -1 -.6 -3.6 0 -4.6z" fill="#e1a3b5"/><path d="M470 524.5c-1 -1.2 -5 -2.3 -9.2 -2.2c-3.3 1.2 -3.3 7.8 0 9c4.2 .1 8.2 -1 9.2 -2.2c.6 -1 .6 -3.6 0 -4.6z" fill="#e1a3b5"/><path d="M433.7 522.49q2.2 4.3 0 8.6" stroke="#2a1230" stroke-width="0.9" fill="none"/><path d="M461.6 522.49q-2.2 4.3 0 8.6" stroke="#2a1230" stroke-width="0.9" fill="none"/><circle cx="420" cy="526.79" r="0.9" fill="#b49ac0"/><rect x="418" y="534.36" width="54.5" height="14.93" fill="#46294b"/><rect x="419.3" y="547.99" width="51.9" height="1.5" fill="#5b4352"/><ellipse cx="431.5" cy="541.73" rx="7.6" ry="6" fill="#40244a"/><ellipse cx="463.8" cy="541.73" rx="7.6" ry="6" fill="#40244a"/><rect x="440.2" y="537.33" width="15.2" height="8.8" fill="#2f1734"/><path d="M425.3 539.43c1 -1.2 5 -2.3 9.2 -2.2c3.3 1.2 3.3 7.8 0 9c-4.2 .1 -8.2 -1 -9.2 -2.2c-.6 -1 -.6 -3.6 0 -4.6z" fill="#e1a3b5"/><path d="M470 539.43c-1 -1.2 -5 -2.3 -9.2 -2.2c-3.3 1.2 -3.3 7.8 0 9c4.2 .1 8.2 -1 9.2 -2.2c.6 -1 .6 -3.6 0 -4.6z" fill="#e1a3b5"/><path d="M433.7 537.42q2.2 4.3 0 8.6" stroke="#2a1230" stroke-width="0.9" fill="none"/><path d="M461.6 537.42q-2.2 4.3 0 8.6" stroke="#2a1230" stroke-width="0.9" fill="none"/><circle cx="420" cy="541.73" r="0.9" fill="#b49ac0"/><rect x="418" y="549.29" width="54.5" height="14.93" fill="#46294b"/><rect x="419.3" y="562.92" width="51.9" height="1.5" fill="#5b4352"/><ellipse cx="431.5" cy="556.65" rx="7.6" ry="6" fill="#40244a"/><ellipse cx="463.8" cy="556.65" rx="7.6" ry="6" fill="#40244a"/><rect x="440.2" y="552.25" width="15.2" height="8.8" fill="#2f1734"/><path d="M425.3 554.36c1 -1.2 5 -2.3 9.2 -2.2c3.3 1.2 3.3 7.8 0 9c-4.2 .1 -8.2 -1 -9.2 -2.2c-.6 -1 -.6 -3.6 0 -4.6z" fill="#e1a3b5"/><path d="M470 554.36c-1 -1.2 -5 -2.3 -9.2 -2.2c-3.3 1.2 -3.3 7.8 0 9c4.2 .1 8.2 -1 9.2 -2.2c.6 -1 .6 -3.6 0 -4.6z" fill="#e1a3b5"/><path d="M433.7 552.35q2.2 4.3 0 8.6" stroke="#2a1230" stroke-width="0.9" fill="none"/><path d="M461.6 552.35q-2.2 4.3 0 8.6" stroke="#2a1230" stroke-width="0.9" fill="none"/><circle cx="420" cy="556.65" r="0.9" fill="#b49ac0"/><rect x="418" y="564.22" width="54.5" height="14.93" fill="#46294b"/><rect x="419.3" y="577.85" width="51.9" height="1.5" fill="#5b4352"/><ellipse cx="431.5" cy="571.59" rx="7.6" ry="6" fill="#40244a"/><ellipse cx="463.8" cy="571.59" rx="7.6" ry="6" fill="#40244a"/><rect x="440.2" y="567.19" width="15.2" height="8.8" fill="#2f1734"/><path d="M425.3 569.29c1 -1.2 5 -2.3 9.2 -2.2c3.3 1.2 3.3 7.8 0 9c-4.2 .1 -8.2 -1 -9.2 -2.2c-.6 -1 -.6 -3.6 0 -4.6z" fill="#e1a3b5"/><path d="M470 569.29c-1 -1.2 -5 -2.3 -9.2 -2.2c-3.3 1.2 -3.3 7.8 0 9c4.2 .1 8.2 -1 9.2 -2.2c.6 -1 .6 -3.6 0 -4.6z" fill="#e1a3b5"/><path d="M433.7 567.28q2.2 4.3 0 8.6" stroke="#2a1230" stroke-width="0.9" fill="none"/><path d="M461.6 567.28q-2.2 4.3 0 8.6" stroke="#2a1230" stroke-width="0.9" fill="none"/><circle cx="420" cy="571.59" r="0.9" fill="#b49ac0"/><rect x="418" y="579.15" width="54.5" height="14.93" fill="#46294b"/><rect x="419.3" y="592.78" width="51.9" height="1.5" fill="#5b4352"/><ellipse cx="431.5" cy="586.51" rx="7.6" ry="6" fill="#40244a"/><ellipse cx="463.8" cy="586.51" rx="7.6" ry="6" fill="#40244a"/><rect x="440.2" y="582.12" width="15.2" height="8.8" fill="#2f1734"/><path d="M425.3 584.22c1 -1.2 5 -2.3 9.2 -2.2c3.3 1.2 3.3 7.8 0 9c-4.2 .1 -8.2 -1 -9.2 -2.2c-.6 -1 -.6 -3.6 0 -4.6z" fill="#e1a3b5"/><path d="M470 584.22c-1 -1.2 -5 -2.3 -9.2 -2.2c-3.3 1.2 -3.3 7.8 0 9c4.2 .1 8.2 -1 9.2 -2.2c.6 -1 .6 -3.6 0 -4.6z" fill="#e1a3b5"/><path d="M433.7 582.21q2.2 4.3 0 8.6" stroke="#2a1230" stroke-width="0.9" fill="none"/><path d="M461.6 582.21q-2.2 4.3 0 8.6" stroke="#2a1230" stroke-width="0.9" fill="none"/><circle cx="420" cy="586.51" r="0.9" fill="#b49ac0"/><rect x="418" y="594.08" width="54.5" height="14.93" fill="#46294b"/><rect x="419.3" y="607.71" width="51.9" height="1.5" fill="#5b4352"/><ellipse cx="431.5" cy="601.45" rx="7.6" ry="6" fill="#40244a"/><ellipse cx="463.8" cy="601.45" rx="7.6" ry="6" fill="#40244a"/><rect x="440.2" y="597.05" width="15.2" height="8.8" fill="#2f1734"/><path d="M425.3 599.15c1 -1.2 5 -2.3 9.2 -2.2c3.3 1.2 3.3 7.8 0 9c-4.2 .1 -8.2 -1 -9.2 -2.2c-.6 -1 -.6 -3.6 0 -4.6z" fill="#e1a3b5"/><path d="M470 599.15c-1 -1.2 -5 -2.3 -9.2 -2.2c-3.3 1.2 -3.3 7.8 0 9c4.2 .1 8.2 -1 9.2 -2.2c.6 -1 .6 -3.6 0 -4.6z" fill="#e1a3b5"/><path d="M433.7 597.14q2.2 4.3 0 8.6" stroke="#2a1230" stroke-width="0.9" fill="none"/><path d="M461.6 597.14q-2.2 4.3 0 8.6" stroke="#2a1230" stroke-width="0.9" fill="none"/><circle cx="420" cy="601.45" r="0.9" fill="#b49ac0"/><rect x="475" y="504.5" width="55" height="14.5" fill="#46294b"/><rect x="476.3" y="517.7" width="52.4" height="1.5" fill="#5b4352"/><ellipse cx="488.5" cy="511.65" rx="7.6" ry="6" fill="#40244a"/><ellipse cx="521.3" cy="511.65" rx="7.6" ry="6" fill="#40244a"/><rect x="497.2" y="507.25" width="15.7" height="8.8" fill="#2f1734"/><path d="M482.3 509.35c1 -1.2 5 -2.3 9.2 -2.2c3.3 1.2 3.3 7.8 0 9c-4.2 .1 -8.2 -1 -9.2 -2.2c-.6 -1 -.6 -3.6 0 -4.6z" fill="#e1a3b5"/><path d="M527.5 509.35c-1 -1.2 -5 -2.3 -9.2 -2.2c-3.3 1.2 -3.3 7.8 0 9c4.2 .1 8.2 -1 9.2 -2.2c.6 -1 .6 -3.6 0 -4.6z" fill="#e1a3b5"/><path d="M490.7 507.35q2.2 4.3 0 8.6" stroke="#2a1230" stroke-width="0.9" fill="none"/><path d="M519.1 507.35q-2.2 4.3 0 8.6" stroke="#2a1230" stroke-width="0.9" fill="none"/><circle cx="477" cy="511.65" r="0.9" fill="#b49ac0"/><rect x="475" y="520" width="53.5" height="13" fill="#1f6671"/><rect x="475" y="533" width="53.5" height="1.9" fill="#d9d2d2"/><ellipse cx="488.5" cy="526.5" rx="7.6" ry="6" fill="#1b5e68"/><ellipse cx="519.8" cy="526.5" rx="7.6" ry="6" fill="#1b5e68"/><rect x="497.2" y="522.1" width="14.2" height="8.8" fill="#14535d"/><path d="M482.3 524.2c1 -1.2 5 -2.3 9.2 -2.2c3.3 1.2 3.3 7.8 0 9c-4.2 .1 -8.2 -1 -9.2 -2.2c-.6 -1 -.6 -3.6 0 -4.6z" fill="#a0cdc6"/><path d="M526 524.2c-1 -1.2 -5 -2.3 -9.2 -2.2c-3.3 1.2 -3.3 7.8 0 9c4.2 .1 8.2 -1 9.2 -2.2c.6 -1 .6 -3.6 0 -4.6z" fill="#a0cdc6"/><path d="M490.7 522.2q2.2 4.3 0 8.6" stroke="#0f3e46" stroke-width="0.9" fill="none"/><path d="M517.6 522.2q-2.2 4.3 0 8.6" stroke="#0f3e46" stroke-width="0.9" fill="none"/><circle cx="477" cy="526.5" r="0.9" fill="#6cc6d6"/><rect x="533" y="520" width="53.5" height="13" fill="#1f6671"/><rect x="533" y="533" width="53.5" height="1.9" fill="#d9d2d2"/><ellipse cx="546.5" cy="526.5" rx="7.6" ry="6" fill="#1b5e68"/><ellipse cx="577.8" cy="526.5" rx="7.6" ry="6" fill="#1b5e68"/><rect x="555.2" y="522.1" width="14.2" height="8.8" fill="#14535d"/><path d="M540.3 524.2c1 -1.2 5 -2.3 9.2 -2.2c3.3 1.2 3.3 7.8 0 9c-4.2 .1 -8.2 -1 -9.2 -2.2c-.6 -1 -.6 -3.6 0 -4.6z" fill="#a0cdc6"/><path d="M584 524.2c-1 -1.2 -5 -2.3 -9.2 -2.2c-3.3 1.2 -3.3 7.8 0 9c4.2 .1 8.2 -1 9.2 -2.2c.6 -1 .6 -3.6 0 -4.6z" fill="#a0cdc6"/><path d="M548.7 522.2q2.2 4.3 0 8.6" stroke="#0f3e46" stroke-width="0.9" fill="none"/><path d="M575.6 522.2q-2.2 4.3 0 8.6" stroke="#0f3e46" stroke-width="0.9" fill="none"/><circle cx="535" cy="526.5" r="0.9" fill="#6cc6d6"/><rect x="475" y="534.8" width="53.5" height="13" fill="#1f6671"/><rect x="475" y="547.8" width="53.5" height="1.9" fill="#d9d2d2"/><ellipse cx="488.5" cy="541.3" rx="7.6" ry="6" fill="#1b5e68"/><ellipse cx="519.8" cy="541.3" rx="7.6" ry="6" fill="#1b5e68"/><rect x="497.2" y="536.9" width="14.2" height="8.8" fill="#14535d"/><path d="M482.3 539c1 -1.2 5 -2.3 9.2 -2.2c3.3 1.2 3.3 7.8 0 9c-4.2 .1 -8.2 -1 -9.2 -2.2c-.6 -1 -.6 -3.6 0 -4.6z" fill="#a0cdc6"/><path d="M526 539c-1 -1.2 -5 -2.3 -9.2 -2.2c-3.3 1.2 -3.3 7.8 0 9c4.2 .1 8.2 -1 9.2 -2.2c.6 -1 .6 -3.6 0 -4.6z" fill="#a0cdc6"/><path d="M490.7 537q2.2 4.3 0 8.6" stroke="#0f3e46" stroke-width="0.9" fill="none"/><path d="M517.6 537q-2.2 4.3 0 8.6" stroke="#0f3e46" stroke-width="0.9" fill="none"/><circle cx="477" cy="541.3" r="0.9" fill="#6cc6d6"/><rect x="533" y="534.8" width="53.5" height="13" fill="#1f6671"/><rect x="533" y="547.8" width="53.5" height="1.9" fill="#d9d2d2"/><ellipse cx="546.5" cy="541.3" rx="7.6" ry="6" fill="#1b5e68"/><ellipse cx="577.8" cy="541.3" rx="7.6" ry="6" fill="#1b5e68"/><rect x="555.2" y="536.9" width="14.2" height="8.8" fill="#14535d"/><path d="M540.3 539c1 -1.2 5 -2.3 9.2 -2.2c3.3 1.2 3.3 7.8 0 9c-4.2 .1 -8.2 -1 -9.2 -2.2c-.6 -1 -.6 -3.6 0 -4.6z" fill="#a0cdc6"/><path d="M584 539c-1 -1.2 -5 -2.3 -9.2 -2.2c-3.3 1.2 -3.3 7.8 0 9c4.2 .1 8.2 -1 9.2 -2.2c.6 -1 .6 -3.6 0 -4.6z" fill="#a0cdc6"/><path d="M548.7 537q2.2 4.3 0 8.6" stroke="#0f3e46" stroke-width="0.9" fill="none"/><path d="M575.6 537q-2.2 4.3 0 8.6" stroke="#0f3e46" stroke-width="0.9" fill="none"/><circle cx="535" cy="541.3" r="0.9" fill="#6cc6d6"/><rect x="533.5" y="535.3" width="52.5" height="12" fill="none" stroke="#2fb4d0" stroke-width="1"/><rect x="475" y="549.6" width="53.5" height="13" fill="#1f6671"/><rect x="475" y="562.6" width="53.5" height="1.9" fill="#d9d2d2"/><ellipse cx="488.5" cy="556.1" rx="7.6" ry="6" fill="#1b5e68"/><ellipse cx="519.8" cy="556.1" rx="7.6" ry="6" fill="#1b5e68"/><rect x="497.2" y="551.7" width="14.2" height="8.8" fill="#14535d"/><path d="M482.3 553.8c1 -1.2 5 -2.3 9.2 -2.2c3.3 1.2 3.3 7.8 0 9c-4.2 .1 -8.2 -1 -9.2 -2.2c-.6 -1 -.6 -3.6 0 -4.6z" fill="#a0cdc6"/><path d="M526 553.8c-1 -1.2 -5 -2.3 -9.2 -2.2c-3.3 1.2 -3.3 7.8 0 9c4.2 .1 8.2 -1 9.2 -2.2c.6 -1 .6 -3.6 0 -4.6z" fill="#a0cdc6"/><path d="M490.7 551.8q2.2 4.3 0 8.6" stroke="#0f3e46" stroke-width="0.9" fill="none"/><path d="M517.6 551.8q-2.2 4.3 0 8.6" stroke="#0f3e46" stroke-width="0.9" fill="none"/><circle cx="477" cy="556.1" r="0.9" fill="#6cc6d6"/><rect x="533" y="549.6" width="53.5" height="13" fill="#1f6671"/><rect x="533" y="562.6" width="53.5" height="1.9" fill="#d9d2d2"/><ellipse cx="546.5" cy="556.1" rx="7.6" ry="6" fill="#1b5e68"/><ellipse cx="577.8" cy="556.1" rx="7.6" ry="6" fill="#1b5e68"/><rect x="555.2" y="551.7" width="14.2" height="8.8" fill="#14535d"/><path d="M540.3 553.8c1 -1.2 5 -2.3 9.2 -2.2c3.3 1.2 3.3 7.8 0 9c-4.2 .1 -8.2 -1 -9.2 -2.2c-.6 -1 -.6 -3.6 0 -4.6z" fill="#a0cdc6"/><path d="M584 553.8c-1 -1.2 -5 -2.3 -9.2 -2.2c-3.3 1.2 -3.3 7.8 0 9c4.2 .1 8.2 -1 9.2 -2.2c.6 -1 .6 -3.6 0 -4.6z" fill="#a0cdc6"/><path d="M548.7 551.8q2.2 4.3 0 8.6" stroke="#0f3e46" stroke-width="0.9" fill="none"/><path d="M575.6 551.8q-2.2 4.3 0 8.6" stroke="#0f3e46" stroke-width="0.9" fill="none"/><circle cx="535" cy="556.1" r="0.9" fill="#6cc6d6"/><rect x="475" y="564.4" width="53.5" height="13" fill="#1f6671"/><rect x="475" y="577.4" width="53.5" height="1.9" fill="#d9d2d2"/><ellipse cx="488.5" cy="570.9" rx="7.6" ry="6" fill="#1b5e68"/><ellipse cx="519.8" cy="570.9" rx="7.6" ry="6" fill="#1b5e68"/><rect x="497.2" y="566.5" width="14.2" height="8.8" fill="#14535d"/><path d="M482.3 568.6c1 -1.2 5 -2.3 9.2 -2.2c3.3 1.2 3.3 7.8 0 9c-4.2 .1 -8.2 -1 -9.2 -2.2c-.6 -1 -.6 -3.6 0 -4.6z" fill="#a0cdc6"/><path d="M526 568.6c-1 -1.2 -5 -2.3 -9.2 -2.2c-3.3 1.2 -3.3 7.8 0 9c4.2 .1 8.2 -1 9.2 -2.2c.6 -1 .6 -3.6 0 -4.6z" fill="#a0cdc6"/><path d="M490.7 566.6q2.2 4.3 0 8.6" stroke="#0f3e46" stroke-width="0.9" fill="none"/><path d="M517.6 566.6q-2.2 4.3 0 8.6" stroke="#0f3e46" stroke-width="0.9" fill="none"/><circle cx="477" cy="570.9" r="0.9" fill="#6cc6d6"/><rect x="533" y="564.4" width="53.5" height="13" fill="#1f6671"/><rect x="533" y="577.4" width="53.5" height="1.9" fill="#d9d2d2"/><ellipse cx="546.5" cy="570.9" rx="7.6" ry="6" fill="#1b5e68"/><ellipse cx="577.8" cy="570.9" rx="7.6" ry="6" fill="#1b5e68"/><rect x="555.2" y="566.5" width="14.2" height="8.8" fill="#14535d"/><path d="M540.3 568.6c1 -1.2 5 -2.3 9.2 -2.2c3.3 1.2 3.3 7.8 0 9c-4.2 .1 -8.2 -1 -9.2 -2.2c-.6 -1 -.6 -3.6 0 -4.6z" fill="#a0cdc6"/><path d="M584 568.6c-1 -1.2 -5 -2.3 -9.2 -2.2c-3.3 1.2 -3.3 7.8 0 9c4.2 .1 8.2 -1 9.2 -2.2c.6 -1 .6 -3.6 0 -4.6z" fill="#a0cdc6"/><path d="M548.7 566.6q2.2 4.3 0 8.6" stroke="#0f3e46" stroke-width="0.9" fill="none"/><path d="M575.6 566.6q-2.2 4.3 0 8.6" stroke="#0f3e46" stroke-width="0.9" fill="none"/><circle cx="535" cy="570.9" r="0.9" fill="#6cc6d6"/><rect x="475" y="579.2" width="53.5" height="13" fill="#1f6671"/><rect x="475" y="592.2" width="53.5" height="1.9" fill="#d9d2d2"/><ellipse cx="488.5" cy="585.7" rx="7.6" ry="6" fill="#1b5e68"/><ellipse cx="519.8" cy="585.7" rx="7.6" ry="6" fill="#1b5e68"/><rect x="497.2" y="581.3" width="14.2" height="8.8" fill="#14535d"/><path d="M482.3 583.4c1 -1.2 5 -2.3 9.2 -2.2c3.3 1.2 3.3 7.8 0 9c-4.2 .1 -8.2 -1 -9.2 -2.2c-.6 -1 -.6 -3.6 0 -4.6z" fill="#a0cdc6"/><path d="M526 583.4c-1 -1.2 -5 -2.3 -9.2 -2.2c-3.3 1.2 -3.3 7.8 0 9c4.2 .1 8.2 -1 9.2 -2.2c.6 -1 .6 -3.6 0 -4.6z" fill="#a0cdc6"/><path d="M490.7 581.4q2.2 4.3 0 8.6" stroke="#0f3e46" stroke-width="0.9" fill="none"/><path d="M517.6 581.4q-2.2 4.3 0 8.6" stroke="#0f3e46" stroke-width="0.9" fill="none"/><circle cx="477" cy="585.7" r="0.9" fill="#6cc6d6"/><rect x="533" y="579.2" width="53.5" height="13" fill="#1f6671"/><rect x="533" y="592.2" width="53.5" height="1.9" fill="#d9d2d2"/><ellipse cx="546.5" cy="585.7" rx="7.6" ry="6" fill="#1b5e68"/><ellipse cx="577.8" cy="585.7" rx="7.6" ry="6" fill="#1b5e68"/><rect x="555.2" y="581.3" width="14.2" height="8.8" fill="#14535d"/><path d="M540.3 583.4c1 -1.2 5 -2.3 9.2 -2.2c3.3 1.2 3.3 7.8 0 9c-4.2 .1 -8.2 -1 -9.2 -2.2c-.6 -1 -.6 -3.6 0 -4.6z" fill="#a0cdc6"/><path d="M584 583.4c-1 -1.2 -5 -2.3 -9.2 -2.2c-3.3 1.2 -3.3 7.8 0 9c4.2 .1 8.2 -1 9.2 -2.2c.6 -1 .6 -3.6 0 -4.6z" fill="#a0cdc6"/><path d="M548.7 581.4q2.2 4.3 0 8.6" stroke="#0f3e46" stroke-width="0.9" fill="none"/><path d="M575.6 581.4q-2.2 4.3 0 8.6" stroke="#0f3e46" stroke-width="0.9" fill="none"/><circle cx="535" cy="585.7" r="0.9" fill="#6cc6d6"/><rect x="475" y="594" width="53.5" height="13" fill="#1f6671"/><rect x="475" y="607" width="53.5" height="1.9" fill="#d9d2d2"/><ellipse cx="488.5" cy="600.5" rx="7.6" ry="6" fill="#1b5e68"/><ellipse cx="519.8" cy="600.5" rx="7.6" ry="6" fill="#1b5e68"/><rect x="497.2" y="596.1" width="14.2" height="8.8" fill="#14535d"/><path d="M482.3 598.2c1 -1.2 5 -2.3 9.2 -2.2c3.3 1.2 3.3 7.8 0 9c-4.2 .1 -8.2 -1 -9.2 -2.2c-.6 -1 -.6 -3.6 0 -4.6z" fill="#a0cdc6"/><path d="M526 598.2c-1 -1.2 -5 -2.3 -9.2 -2.2c-3.3 1.2 -3.3 7.8 0 9c4.2 .1 8.2 -1 9.2 -2.2c.6 -1 .6 -3.6 0 -4.6z" fill="#a0cdc6"/><path d="M490.7 596.2q2.2 4.3 0 8.6" stroke="#0f3e46" stroke-width="0.9" fill="none"/><path d="M517.6 596.2q-2.2 4.3 0 8.6" stroke="#0f3e46" stroke-width="0.9" fill="none"/><circle cx="477" cy="600.5" r="0.9" fill="#6cc6d6"/><rect x="533" y="594" width="53.5" height="13" fill="#1f6671"/><rect x="533" y="607" width="53.5" height="1.9" fill="#d9d2d2"/><ellipse cx="546.5" cy="600.5" rx="7.6" ry="6" fill="#1b5e68"/><ellipse cx="577.8" cy="600.5" rx="7.6" ry="6" fill="#1b5e68"/><rect x="555.2" y="596.1" width="14.2" height="8.8" fill="#14535d"/><path d="M540.3 598.2c1 -1.2 5 -2.3 9.2 -2.2c3.3 1.2 3.3 7.8 0 9c-4.2 .1 -8.2 -1 -9.2 -2.2c-.6 -1 -.6 -3.6 0 -4.6z" fill="#a0cdc6"/><path d="M584 598.2c-1 -1.2 -5 -2.3 -9.2 -2.2c-3.3 1.2 -3.3 7.8 0 9c4.2 .1 8.2 -1 9.2 -2.2c.6 -1 .6 -3.6 0 -4.6z" fill="#a0cdc6"/><path d="M548.7 596.2q2.2 4.3 0 8.6" stroke="#0f3e46" stroke-width="0.9" fill="none"/><path d="M575.6 596.2q-2.2 4.3 0 8.6" stroke="#0f3e46" stroke-width="0.9" fill="none"/><circle cx="535" cy="600.5" r="0.9" fill="#6cc6d6"/><rect x="602" y="395.2" width="53" height="13" fill="#1f6671"/><rect x="602" y="408.2" width="53" height="1.9" fill="#d9d2d2"/><ellipse cx="615.5" cy="401.7" rx="7.6" ry="6" fill="#1b5e68"/><ellipse cx="646.3" cy="401.7" rx="7.6" ry="6" fill="#1b5e68"/><rect x="624.2" y="397.3" width="13.7" height="8.8" fill="#14535d"/><path d="M609.3 399.4c1 -1.2 5 -2.3 9.2 -2.2c3.3 1.2 3.3 7.8 0 9c-4.2 .1 -8.2 -1 -9.2 -2.2c-.6 -1 -.6 -3.6 0 -4.6z" fill="#a0cdc6"/><path d="M652.5 399.4c-1 -1.2 -5 -2.3 -9.2 -2.2c-3.3 1.2 -3.3 7.8 0 9c4.2 .1 8.2 -1 9.2 -2.2c.6 -1 .6 -3.6 0 -4.6z" fill="#a0cdc6"/><path d="M617.7 397.4q2.2 4.3 0 8.6" stroke="#0f3e46" stroke-width="0.9" fill="none"/><path d="M644.1 397.4q-2.2 4.3 0 8.6" stroke="#0f3e46" stroke-width="0.9" fill="none"/><circle cx="604" cy="401.7" r="0.9" fill="#6cc6d6"/><rect x="660" y="395.2" width="53" height="13" fill="#1f6671"/><rect x="660" y="408.2" width="53" height="1.9" fill="#d9d2d2"/><ellipse cx="673.5" cy="401.7" rx="7.6" ry="6" fill="#1b5e68"/><ellipse cx="704.3" cy="401.7" rx="7.6" ry="6" fill="#1b5e68"/><rect x="682.2" y="397.3" width="13.7" height="8.8" fill="#14535d"/><path d="M667.3 399.4c1 -1.2 5 -2.3 9.2 -2.2c3.3 1.2 3.3 7.8 0 9c-4.2 .1 -8.2 -1 -9.2 -2.2c-.6 -1 -.6 -3.6 0 -4.6z" fill="#a0cdc6"/><path d="M710.5 399.4c-1 -1.2 -5 -2.3 -9.2 -2.2c-3.3 1.2 -3.3 7.8 0 9c4.2 .1 8.2 -1 9.2 -2.2c.6 -1 .6 -3.6 0 -4.6z" fill="#a0cdc6"/><path d="M675.7 397.4q2.2 4.3 0 8.6" stroke="#0f3e46" stroke-width="0.9" fill="none"/><path d="M702.1 397.4q-2.2 4.3 0 8.6" stroke="#0f3e46" stroke-width="0.9" fill="none"/><circle cx="662" cy="401.7" r="0.9" fill="#6cc6d6"/><rect x="716" y="394.3" width="54.5" height="14.85" fill="#46294b"/><rect x="717.3" y="407.85" width="51.9" height="1.5" fill="#5b4352"/><ellipse cx="729.5" cy="401.62" rx="7.6" ry="6" fill="#40244a"/><ellipse cx="761.8" cy="401.62" rx="7.6" ry="6" fill="#40244a"/><rect x="738.2" y="397.23" width="15.2" height="8.8" fill="#2f1734"/><path d="M723.3 399.32c1 -1.2 5 -2.3 9.2 -2.2c3.3 1.2 3.3 7.8 0 9c-4.2 .1 -8.2 -1 -9.2 -2.2c-.6 -1 -.6 -3.6 0 -4.6z" fill="#e1a3b5"/><path d="M768 399.32c-1 -1.2 -5 -2.3 -9.2 -2.2c-3.3 1.2 -3.3 7.8 0 9c4.2 .1 8.2 -1 9.2 -2.2c.6 -1 .6 -3.6 0 -4.6z" fill="#e1a3b5"/><path d="M731.7 397.32q2.2 4.3 0 8.6" stroke="#2a1230" stroke-width="0.9" fill="none"/><path d="M759.6 397.32q-2.2 4.3 0 8.6" stroke="#2a1230" stroke-width="0.9" fill="none"/><circle cx="718" cy="401.62" r="0.9" fill="#b49ac0"/><rect x="773.5" y="394.3" width="54.5" height="14.85" fill="#46294b"/><rect x="774.8" y="407.85" width="51.9" height="1.5" fill="#5b4352"/><ellipse cx="787" cy="401.62" rx="7.6" ry="6" fill="#40244a"/><ellipse cx="819.3" cy="401.62" rx="7.6" ry="6" fill="#40244a"/><rect x="795.7" y="397.23" width="15.2" height="8.8" fill="#2f1734"/><path d="M780.8 399.32c1 -1.2 5 -2.3 9.2 -2.2c3.3 1.2 3.3 7.8 0 9c-4.2 .1 -8.2 -1 -9.2 -2.2c-.6 -1 -.6 -3.6 0 -4.6z" fill="#e1a3b5"/><path d="M825.5 399.32c-1 -1.2 -5 -2.3 -9.2 -2.2c-3.3 1.2 -3.3 7.8 0 9c4.2 .1 8.2 -1 9.2 -2.2c.6 -1 .6 -3.6 0 -4.6z" fill="#e1a3b5"/><path d="M789.2 397.32q2.2 4.3 0 8.6" stroke="#2a1230" stroke-width="0.9" fill="none"/><path d="M817.1 397.32q-2.2 4.3 0 8.6" stroke="#2a1230" stroke-width="0.9" fill="none"/><circle cx="775.5" cy="401.62" r="0.9" fill="#b49ac0"/><rect x="602" y="410.05" width="53" height="13" fill="#1f6671"/><rect x="602" y="423.05" width="53" height="1.9" fill="#d9d2d2"/><ellipse cx="615.5" cy="416.55" rx="7.6" ry="6" fill="#1b5e68"/><ellipse cx="646.3" cy="416.55" rx="7.6" ry="6" fill="#1b5e68"/><rect x="624.2" y="412.15" width="13.7" height="8.8" fill="#14535d"/><path d="M609.3 414.25c1 -1.2 5 -2.3 9.2 -2.2c3.3 1.2 3.3 7.8 0 9c-4.2 .1 -8.2 -1 -9.2 -2.2c-.6 -1 -.6 -3.6 0 -4.6z" fill="#a0cdc6"/><path d="M652.5 414.25c-1 -1.2 -5 -2.3 -9.2 -2.2c-3.3 1.2 -3.3 7.8 0 9c4.2 .1 8.2 -1 9.2 -2.2c.6 -1 .6 -3.6 0 -4.6z" fill="#a0cdc6"/><path d="M617.7 412.25q2.2 4.3 0 8.6" stroke="#0f3e46" stroke-width="0.9" fill="none"/><path d="M644.1 412.25q-2.2 4.3 0 8.6" stroke="#0f3e46" stroke-width="0.9" fill="none"/><circle cx="604" cy="416.55" r="0.9" fill="#6cc6d6"/><rect x="660" y="410.05" width="53" height="13" fill="#1f6671"/><rect x="660" y="423.05" width="53" height="1.9" fill="#d9d2d2"/><ellipse cx="673.5" cy="416.55" rx="7.6" ry="6" fill="#1b5e68"/><ellipse cx="704.3" cy="416.55" rx="7.6" ry="6" fill="#1b5e68"/><rect x="682.2" y="412.15" width="13.7" height="8.8" fill="#14535d"/><path d="M667.3 414.25c1 -1.2 5 -2.3 9.2 -2.2c3.3 1.2 3.3 7.8 0 9c-4.2 .1 -8.2 -1 -9.2 -2.2c-.6 -1 -.6 -3.6 0 -4.6z" fill="#a0cdc6"/><path d="M710.5 414.25c-1 -1.2 -5 -2.3 -9.2 -2.2c-3.3 1.2 -3.3 7.8 0 9c4.2 .1 8.2 -1 9.2 -2.2c.6 -1 .6 -3.6 0 -4.6z" fill="#a0cdc6"/><path d="M675.7 412.25q2.2 4.3 0 8.6" stroke="#0f3e46" stroke-width="0.9" fill="none"/><path d="M702.1 412.25q-2.2 4.3 0 8.6" stroke="#0f3e46" stroke-width="0.9" fill="none"/><circle cx="662" cy="416.55" r="0.9" fill="#6cc6d6"/><rect x="716" y="409.15" width="54.5" height="14.85" fill="#46294b"/><rect x="717.3" y="422.7" width="51.9" height="1.5" fill="#5b4352"/><ellipse cx="729.5" cy="416.48" rx="7.6" ry="6" fill="#40244a"/><ellipse cx="761.8" cy="416.48" rx="7.6" ry="6" fill="#40244a"/><rect x="738.2" y="412.08" width="15.2" height="8.8" fill="#2f1734"/><path d="M723.3 414.18c1 -1.2 5 -2.3 9.2 -2.2c3.3 1.2 3.3 7.8 0 9c-4.2 .1 -8.2 -1 -9.2 -2.2c-.6 -1 -.6 -3.6 0 -4.6z" fill="#e1a3b5"/><path d="M768 414.18c-1 -1.2 -5 -2.3 -9.2 -2.2c-3.3 1.2 -3.3 7.8 0 9c4.2 .1 8.2 -1 9.2 -2.2c.6 -1 .6 -3.6 0 -4.6z" fill="#e1a3b5"/><path d="M731.7 412.18q2.2 4.3 0 8.6" stroke="#2a1230" stroke-width="0.9" fill="none"/><path d="M759.6 412.18q-2.2 4.3 0 8.6" stroke="#2a1230" stroke-width="0.9" fill="none"/><circle cx="718" cy="416.48" r="0.9" fill="#b49ac0"/><rect x="773.5" y="409.15" width="54.5" height="14.85" fill="#46294b"/><rect x="774.8" y="422.7" width="51.9" height="1.5" fill="#5b4352"/><ellipse cx="787" cy="416.48" rx="7.6" ry="6" fill="#40244a"/><ellipse cx="819.3" cy="416.48" rx="7.6" ry="6" fill="#40244a"/><rect x="795.7" y="412.08" width="15.2" height="8.8" fill="#2f1734"/><path d="M780.8 414.18c1 -1.2 5 -2.3 9.2 -2.2c3.3 1.2 3.3 7.8 0 9c-4.2 .1 -8.2 -1 -9.2 -2.2c-.6 -1 -.6 -3.6 0 -4.6z" fill="#e1a3b5"/><path d="M825.5 414.18c-1 -1.2 -5 -2.3 -9.2 -2.2c-3.3 1.2 -3.3 7.8 0 9c4.2 .1 8.2 -1 9.2 -2.2c.6 -1 .6 -3.6 0 -4.6z" fill="#e1a3b5"/><path d="M789.2 412.18q2.2 4.3 0 8.6" stroke="#2a1230" stroke-width="0.9" fill="none"/><path d="M817.1 412.18q-2.2 4.3 0 8.6" stroke="#2a1230" stroke-width="0.9" fill="none"/><circle cx="775.5" cy="416.48" r="0.9" fill="#b49ac0"/><rect x="602" y="424.9" width="53" height="13" fill="#1f6671"/><rect x="602" y="437.9" width="53" height="1.9" fill="#d9d2d2"/><ellipse cx="615.5" cy="431.4" rx="7.6" ry="6" fill="#1b5e68"/><ellipse cx="646.3" cy="431.4" rx="7.6" ry="6" fill="#1b5e68"/><rect x="624.2" y="427" width="13.7" height="8.8" fill="#14535d"/><path d="M609.3 429.1c1 -1.2 5 -2.3 9.2 -2.2c3.3 1.2 3.3 7.8 0 9c-4.2 .1 -8.2 -1 -9.2 -2.2c-.6 -1 -.6 -3.6 0 -4.6z" fill="#a0cdc6"/><path d="M652.5 429.1c-1 -1.2 -5 -2.3 -9.2 -2.2c-3.3 1.2 -3.3 7.8 0 9c4.2 .1 8.2 -1 9.2 -2.2c.6 -1 .6 -3.6 0 -4.6z" fill="#a0cdc6"/><path d="M617.7 427.1q2.2 4.3 0 8.6" stroke="#0f3e46" stroke-width="0.9" fill="none"/><path d="M644.1 427.1q-2.2 4.3 0 8.6" stroke="#0f3e46" stroke-width="0.9" fill="none"/><circle cx="604" cy="431.4" r="0.9" fill="#6cc6d6"/><rect x="660" y="424.9" width="53" height="13" fill="#1f6671"/><rect x="660" y="437.9" width="53" height="1.9" fill="#d9d2d2"/><ellipse cx="673.5" cy="431.4" rx="7.6" ry="6" fill="#1b5e68"/><ellipse cx="704.3" cy="431.4" rx="7.6" ry="6" fill="#1b5e68"/><rect x="682.2" y="427" width="13.7" height="8.8" fill="#14535d"/><path d="M667.3 429.1c1 -1.2 5 -2.3 9.2 -2.2c3.3 1.2 3.3 7.8 0 9c-4.2 .1 -8.2 -1 -9.2 -2.2c-.6 -1 -.6 -3.6 0 -4.6z" fill="#a0cdc6"/><path d="M710.5 429.1c-1 -1.2 -5 -2.3 -9.2 -2.2c-3.3 1.2 -3.3 7.8 0 9c4.2 .1 8.2 -1 9.2 -2.2c.6 -1 .6 -3.6 0 -4.6z" fill="#a0cdc6"/><path d="M675.7 427.1q2.2 4.3 0 8.6" stroke="#0f3e46" stroke-width="0.9" fill="none"/><path d="M702.1 427.1q-2.2 4.3 0 8.6" stroke="#0f3e46" stroke-width="0.9" fill="none"/><circle cx="662" cy="431.4" r="0.9" fill="#6cc6d6"/><rect x="716" y="424" width="54.5" height="14.85" fill="#46294b"/><rect x="717.3" y="437.55" width="51.9" height="1.5" fill="#5b4352"/><ellipse cx="729.5" cy="431.32" rx="7.6" ry="6" fill="#40244a"/><ellipse cx="761.8" cy="431.32" rx="7.6" ry="6" fill="#40244a"/><rect x="738.2" y="426.93" width="15.2" height="8.8" fill="#2f1734"/><path d="M723.3 429.02c1 -1.2 5 -2.3 9.2 -2.2c3.3 1.2 3.3 7.8 0 9c-4.2 .1 -8.2 -1 -9.2 -2.2c-.6 -1 -.6 -3.6 0 -4.6z" fill="#e1a3b5"/><path d="M768 429.02c-1 -1.2 -5 -2.3 -9.2 -2.2c-3.3 1.2 -3.3 7.8 0 9c4.2 .1 8.2 -1 9.2 -2.2c.6 -1 .6 -3.6 0 -4.6z" fill="#e1a3b5"/><path d="M731.7 427.02q2.2 4.3 0 8.6" stroke="#2a1230" stroke-width="0.9" fill="none"/><path d="M759.6 427.02q-2.2 4.3 0 8.6" stroke="#2a1230" stroke-width="0.9" fill="none"/><circle cx="718" cy="431.32" r="0.9" fill="#b49ac0"/><rect x="773.5" y="424" width="54.5" height="14.85" fill="#46294b"/><rect x="774.8" y="437.55" width="51.9" height="1.5" fill="#5b4352"/><ellipse cx="787" cy="431.32" rx="7.6" ry="6" fill="#40244a"/><ellipse cx="819.3" cy="431.32" rx="7.6" ry="6" fill="#40244a"/><rect x="795.7" y="426.93" width="15.2" height="8.8" fill="#2f1734"/><path d="M780.8 429.02c1 -1.2 5 -2.3 9.2 -2.2c3.3 1.2 3.3 7.8 0 9c-4.2 .1 -8.2 -1 -9.2 -2.2c-.6 -1 -.6 -3.6 0 -4.6z" fill="#e1a3b5"/><path d="M825.5 429.02c-1 -1.2 -5 -2.3 -9.2 -2.2c-3.3 1.2 -3.3 7.8 0 9c4.2 .1 8.2 -1 9.2 -2.2c.6 -1 .6 -3.6 0 -4.6z" fill="#e1a3b5"/><path d="M789.2 427.02q2.2 4.3 0 8.6" stroke="#2a1230" stroke-width="0.9" fill="none"/><path d="M817.1 427.02q-2.2 4.3 0 8.6" stroke="#2a1230" stroke-width="0.9" fill="none"/><circle cx="775.5" cy="431.32" r="0.9" fill="#b49ac0"/><rect x="602" y="439.75" width="53" height="13" fill="#1f6671"/><rect x="602" y="452.75" width="53" height="1.9" fill="#d9d2d2"/><ellipse cx="615.5" cy="446.25" rx="7.6" ry="6" fill="#1b5e68"/><ellipse cx="646.3" cy="446.25" rx="7.6" ry="6" fill="#1b5e68"/><rect x="624.2" y="441.85" width="13.7" height="8.8" fill="#14535d"/><path d="M609.3 443.95c1 -1.2 5 -2.3 9.2 -2.2c3.3 1.2 3.3 7.8 0 9c-4.2 .1 -8.2 -1 -9.2 -2.2c-.6 -1 -.6 -3.6 0 -4.6z" fill="#a0cdc6"/><path d="M652.5 443.95c-1 -1.2 -5 -2.3 -9.2 -2.2c-3.3 1.2 -3.3 7.8 0 9c4.2 .1 8.2 -1 9.2 -2.2c.6 -1 .6 -3.6 0 -4.6z" fill="#a0cdc6"/><path d="M617.7 441.95q2.2 4.3 0 8.6" stroke="#0f3e46" stroke-width="0.9" fill="none"/><path d="M644.1 441.95q-2.2 4.3 0 8.6" stroke="#0f3e46" stroke-width="0.9" fill="none"/><circle cx="604" cy="446.25" r="0.9" fill="#6cc6d6"/><rect x="660" y="439.75" width="53" height="13" fill="#1f6671"/><rect x="660" y="452.75" width="53" height="1.9" fill="#d9d2d2"/><ellipse cx="673.5" cy="446.25" rx="7.6" ry="6" fill="#1b5e68"/><ellipse cx="704.3" cy="446.25" rx="7.6" ry="6" fill="#1b5e68"/><rect x="682.2" y="441.85" width="13.7" height="8.8" fill="#14535d"/><path d="M667.3 443.95c1 -1.2 5 -2.3 9.2 -2.2c3.3 1.2 3.3 7.8 0 9c-4.2 .1 -8.2 -1 -9.2 -2.2c-.6 -1 -.6 -3.6 0 -4.6z" fill="#a0cdc6"/><path d="M710.5 443.95c-1 -1.2 -5 -2.3 -9.2 -2.2c-3.3 1.2 -3.3 7.8 0 9c4.2 .1 8.2 -1 9.2 -2.2c.6 -1 .6 -3.6 0 -4.6z" fill="#a0cdc6"/><path d="M675.7 441.95q2.2 4.3 0 8.6" stroke="#0f3e46" stroke-width="0.9" fill="none"/><path d="M702.1 441.95q-2.2 4.3 0 8.6" stroke="#0f3e46" stroke-width="0.9" fill="none"/><circle cx="662" cy="446.25" r="0.9" fill="#6cc6d6"/><rect x="716" y="438.85" width="54.5" height="14.85" fill="#46294b"/><rect x="717.3" y="452.4" width="51.9" height="1.5" fill="#5b4352"/><ellipse cx="729.5" cy="446.18" rx="7.6" ry="6" fill="#40244a"/><ellipse cx="761.8" cy="446.18" rx="7.6" ry="6" fill="#40244a"/><rect x="738.2" y="441.78" width="15.2" height="8.8" fill="#2f1734"/><path d="M723.3 443.88c1 -1.2 5 -2.3 9.2 -2.2c3.3 1.2 3.3 7.8 0 9c-4.2 .1 -8.2 -1 -9.2 -2.2c-.6 -1 -.6 -3.6 0 -4.6z" fill="#e1a3b5"/><path d="M768 443.88c-1 -1.2 -5 -2.3 -9.2 -2.2c-3.3 1.2 -3.3 7.8 0 9c4.2 .1 8.2 -1 9.2 -2.2c.6 -1 .6 -3.6 0 -4.6z" fill="#e1a3b5"/><path d="M731.7 441.88q2.2 4.3 0 8.6" stroke="#2a1230" stroke-width="0.9" fill="none"/><path d="M759.6 441.88q-2.2 4.3 0 8.6" stroke="#2a1230" stroke-width="0.9" fill="none"/><circle cx="718" cy="446.18" r="0.9" fill="#b49ac0"/><rect x="773.5" y="438.85" width="54.5" height="14.85" fill="#46294b"/><rect x="774.8" y="452.4" width="51.9" height="1.5" fill="#5b4352"/><ellipse cx="787" cy="446.18" rx="7.6" ry="6" fill="#40244a"/><ellipse cx="819.3" cy="446.18" rx="7.6" ry="6" fill="#40244a"/><rect x="795.7" y="441.78" width="15.2" height="8.8" fill="#2f1734"/><path d="M780.8 443.88c1 -1.2 5 -2.3 9.2 -2.2c3.3 1.2 3.3 7.8 0 9c-4.2 .1 -8.2 -1 -9.2 -2.2c-.6 -1 -.6 -3.6 0 -4.6z" fill="#e1a3b5"/><path d="M825.5 443.88c-1 -1.2 -5 -2.3 -9.2 -2.2c-3.3 1.2 -3.3 7.8 0 9c4.2 .1 8.2 -1 9.2 -2.2c.6 -1 .6 -3.6 0 -4.6z" fill="#e1a3b5"/><path d="M789.2 441.88q2.2 4.3 0 8.6" stroke="#2a1230" stroke-width="0.9" fill="none"/><path d="M817.1 441.88q-2.2 4.3 0 8.6" stroke="#2a1230" stroke-width="0.9" fill="none"/><circle cx="775.5" cy="446.18" r="0.9" fill="#b49ac0"/><rect x="602" y="454.6" width="53" height="13" fill="#1f6671"/><rect x="602" y="467.6" width="53" height="1.9" fill="#d9d2d2"/><ellipse cx="615.5" cy="461.1" rx="7.6" ry="6" fill="#1b5e68"/><ellipse cx="646.3" cy="461.1" rx="7.6" ry="6" fill="#1b5e68"/><rect x="624.2" y="456.7" width="13.7" height="8.8" fill="#14535d"/><path d="M609.3 458.8c1 -1.2 5 -2.3 9.2 -2.2c3.3 1.2 3.3 7.8 0 9c-4.2 .1 -8.2 -1 -9.2 -2.2c-.6 -1 -.6 -3.6 0 -4.6z" fill="#a0cdc6"/><path d="M652.5 458.8c-1 -1.2 -5 -2.3 -9.2 -2.2c-3.3 1.2 -3.3 7.8 0 9c4.2 .1 8.2 -1 9.2 -2.2c.6 -1 .6 -3.6 0 -4.6z" fill="#a0cdc6"/><path d="M617.7 456.8q2.2 4.3 0 8.6" stroke="#0f3e46" stroke-width="0.9" fill="none"/><path d="M644.1 456.8q-2.2 4.3 0 8.6" stroke="#0f3e46" stroke-width="0.9" fill="none"/><circle cx="604" cy="461.1" r="0.9" fill="#6cc6d6"/><rect x="660" y="454.6" width="53" height="13" fill="#1f6671"/><rect x="660" y="467.6" width="53" height="1.9" fill="#d9d2d2"/><ellipse cx="673.5" cy="461.1" rx="7.6" ry="6" fill="#1b5e68"/><ellipse cx="704.3" cy="461.1" rx="7.6" ry="6" fill="#1b5e68"/><rect x="682.2" y="456.7" width="13.7" height="8.8" fill="#14535d"/><path d="M667.3 458.8c1 -1.2 5 -2.3 9.2 -2.2c3.3 1.2 3.3 7.8 0 9c-4.2 .1 -8.2 -1 -9.2 -2.2c-.6 -1 -.6 -3.6 0 -4.6z" fill="#a0cdc6"/><path d="M710.5 458.8c-1 -1.2 -5 -2.3 -9.2 -2.2c-3.3 1.2 -3.3 7.8 0 9c4.2 .1 8.2 -1 9.2 -2.2c.6 -1 .6 -3.6 0 -4.6z" fill="#a0cdc6"/><path d="M675.7 456.8q2.2 4.3 0 8.6" stroke="#0f3e46" stroke-width="0.9" fill="none"/><path d="M702.1 456.8q-2.2 4.3 0 8.6" stroke="#0f3e46" stroke-width="0.9" fill="none"/><circle cx="662" cy="461.1" r="0.9" fill="#6cc6d6"/><rect x="716" y="453.7" width="54.5" height="14.85" fill="#46294b"/><rect x="717.3" y="467.25" width="51.9" height="1.5" fill="#5b4352"/><ellipse cx="729.5" cy="461.02" rx="7.6" ry="6" fill="#40244a"/><ellipse cx="761.8" cy="461.02" rx="7.6" ry="6" fill="#40244a"/><rect x="738.2" y="456.62" width="15.2" height="8.8" fill="#2f1734"/><path d="M723.3 458.72c1 -1.2 5 -2.3 9.2 -2.2c3.3 1.2 3.3 7.8 0 9c-4.2 .1 -8.2 -1 -9.2 -2.2c-.6 -1 -.6 -3.6 0 -4.6z" fill="#e1a3b5"/><path d="M768 458.72c-1 -1.2 -5 -2.3 -9.2 -2.2c-3.3 1.2 -3.3 7.8 0 9c4.2 .1 8.2 -1 9.2 -2.2c.6 -1 .6 -3.6 0 -4.6z" fill="#e1a3b5"/><path d="M731.7 456.72q2.2 4.3 0 8.6" stroke="#2a1230" stroke-width="0.9" fill="none"/><path d="M759.6 456.72q-2.2 4.3 0 8.6" stroke="#2a1230" stroke-width="0.9" fill="none"/><circle cx="718" cy="461.02" r="0.9" fill="#b49ac0"/><rect x="773.5" y="453.7" width="54.5" height="14.85" fill="#46294b"/><rect x="774.8" y="467.25" width="51.9" height="1.5" fill="#5b4352"/><ellipse cx="787" cy="461.02" rx="7.6" ry="6" fill="#40244a"/><ellipse cx="819.3" cy="461.02" rx="7.6" ry="6" fill="#40244a"/><rect x="795.7" y="456.62" width="15.2" height="8.8" fill="#2f1734"/><path d="M780.8 458.72c1 -1.2 5 -2.3 9.2 -2.2c3.3 1.2 3.3 7.8 0 9c-4.2 .1 -8.2 -1 -9.2 -2.2c-.6 -1 -.6 -3.6 0 -4.6z" fill="#e1a3b5"/><path d="M825.5 458.72c-1 -1.2 -5 -2.3 -9.2 -2.2c-3.3 1.2 -3.3 7.8 0 9c4.2 .1 8.2 -1 9.2 -2.2c.6 -1 .6 -3.6 0 -4.6z" fill="#e1a3b5"/><path d="M789.2 456.72q2.2 4.3 0 8.6" stroke="#2a1230" stroke-width="0.9" fill="none"/><path d="M817.1 456.72q-2.2 4.3 0 8.6" stroke="#2a1230" stroke-width="0.9" fill="none"/><circle cx="775.5" cy="461.02" r="0.9" fill="#b49ac0"/><rect x="602" y="469.45" width="53" height="13" fill="#1f6671"/><rect x="602" y="482.45" width="53" height="1.9" fill="#d9d2d2"/><ellipse cx="615.5" cy="475.95" rx="7.6" ry="6" fill="#1b5e68"/><ellipse cx="646.3" cy="475.95" rx="7.6" ry="6" fill="#1b5e68"/><rect x="624.2" y="471.55" width="13.7" height="8.8" fill="#14535d"/><path d="M609.3 473.65c1 -1.2 5 -2.3 9.2 -2.2c3.3 1.2 3.3 7.8 0 9c-4.2 .1 -8.2 -1 -9.2 -2.2c-.6 -1 -.6 -3.6 0 -4.6z" fill="#a0cdc6"/><path d="M652.5 473.65c-1 -1.2 -5 -2.3 -9.2 -2.2c-3.3 1.2 -3.3 7.8 0 9c4.2 .1 8.2 -1 9.2 -2.2c.6 -1 .6 -3.6 0 -4.6z" fill="#a0cdc6"/><path d="M617.7 471.65q2.2 4.3 0 8.6" stroke="#0f3e46" stroke-width="0.9" fill="none"/><path d="M644.1 471.65q-2.2 4.3 0 8.6" stroke="#0f3e46" stroke-width="0.9" fill="none"/><circle cx="604" cy="475.95" r="0.9" fill="#6cc6d6"/><rect x="660" y="469.45" width="53" height="13" fill="#1f6671"/><rect x="660" y="482.45" width="53" height="1.9" fill="#d9d2d2"/><ellipse cx="673.5" cy="475.95" rx="7.6" ry="6" fill="#1b5e68"/><ellipse cx="704.3" cy="475.95" rx="7.6" ry="6" fill="#1b5e68"/><rect x="682.2" y="471.55" width="13.7" height="8.8" fill="#14535d"/><path d="M667.3 473.65c1 -1.2 5 -2.3 9.2 -2.2c3.3 1.2 3.3 7.8 0 9c-4.2 .1 -8.2 -1 -9.2 -2.2c-.6 -1 -.6 -3.6 0 -4.6z" fill="#a0cdc6"/><path d="M710.5 473.65c-1 -1.2 -5 -2.3 -9.2 -2.2c-3.3 1.2 -3.3 7.8 0 9c4.2 .1 8.2 -1 9.2 -2.2c.6 -1 .6 -3.6 0 -4.6z" fill="#a0cdc6"/><path d="M675.7 471.65q2.2 4.3 0 8.6" stroke="#0f3e46" stroke-width="0.9" fill="none"/><path d="M702.1 471.65q-2.2 4.3 0 8.6" stroke="#0f3e46" stroke-width="0.9" fill="none"/><circle cx="662" cy="475.95" r="0.9" fill="#6cc6d6"/><rect x="716" y="468.55" width="54.5" height="14.85" fill="#46294b"/><rect x="717.3" y="482.1" width="51.9" height="1.5" fill="#5b4352"/><ellipse cx="729.5" cy="475.88" rx="7.6" ry="6" fill="#40244a"/><ellipse cx="761.8" cy="475.88" rx="7.6" ry="6" fill="#40244a"/><rect x="738.2" y="471.48" width="15.2" height="8.8" fill="#2f1734"/><path d="M723.3 473.57c1 -1.2 5 -2.3 9.2 -2.2c3.3 1.2 3.3 7.8 0 9c-4.2 .1 -8.2 -1 -9.2 -2.2c-.6 -1 -.6 -3.6 0 -4.6z" fill="#e1a3b5"/><path d="M768 473.57c-1 -1.2 -5 -2.3 -9.2 -2.2c-3.3 1.2 -3.3 7.8 0 9c4.2 .1 8.2 -1 9.2 -2.2c.6 -1 .6 -3.6 0 -4.6z" fill="#e1a3b5"/><path d="M731.7 471.57q2.2 4.3 0 8.6" stroke="#2a1230" stroke-width="0.9" fill="none"/><path d="M759.6 471.57q-2.2 4.3 0 8.6" stroke="#2a1230" stroke-width="0.9" fill="none"/><circle cx="718" cy="475.88" r="0.9" fill="#b49ac0"/><rect x="773.5" y="468.55" width="54.5" height="14.85" fill="#46294b"/><rect x="774.8" y="482.1" width="51.9" height="1.5" fill="#5b4352"/><ellipse cx="787" cy="475.88" rx="7.6" ry="6" fill="#40244a"/><ellipse cx="819.3" cy="475.88" rx="7.6" ry="6" fill="#40244a"/><rect x="795.7" y="471.48" width="15.2" height="8.8" fill="#2f1734"/><path d="M780.8 473.57c1 -1.2 5 -2.3 9.2 -2.2c3.3 1.2 3.3 7.8 0 9c-4.2 .1 -8.2 -1 -9.2 -2.2c-.6 -1 -.6 -3.6 0 -4.6z" fill="#e1a3b5"/><path d="M825.5 473.57c-1 -1.2 -5 -2.3 -9.2 -2.2c-3.3 1.2 -3.3 7.8 0 9c4.2 .1 8.2 -1 9.2 -2.2c.6 -1 .6 -3.6 0 -4.6z" fill="#e1a3b5"/><path d="M789.2 471.57q2.2 4.3 0 8.6" stroke="#2a1230" stroke-width="0.9" fill="none"/><path d="M817.1 471.57q-2.2 4.3 0 8.6" stroke="#2a1230" stroke-width="0.9" fill="none"/><circle cx="775.5" cy="475.88" r="0.9" fill="#b49ac0"/><rect x="602" y="512.6" width="53" height="13" fill="#1f6671"/><rect x="602" y="525.6" width="53" height="1.9" fill="#d9d2d2"/><ellipse cx="615.5" cy="519.1" rx="7.6" ry="6" fill="#1b5e68"/><ellipse cx="646.3" cy="519.1" rx="7.6" ry="6" fill="#1b5e68"/><rect x="624.2" y="514.7" width="13.7" height="8.8" fill="#14535d"/><path d="M609.3 516.8c1 -1.2 5 -2.3 9.2 -2.2c3.3 1.2 3.3 7.8 0 9c-4.2 .1 -8.2 -1 -9.2 -2.2c-.6 -1 -.6 -3.6 0 -4.6z" fill="#a0cdc6"/><path d="M652.5 516.8c-1 -1.2 -5 -2.3 -9.2 -2.2c-3.3 1.2 -3.3 7.8 0 9c4.2 .1 8.2 -1 9.2 -2.2c.6 -1 .6 -3.6 0 -4.6z" fill="#a0cdc6"/><path d="M617.7 514.8q2.2 4.3 0 8.6" stroke="#0f3e46" stroke-width="0.9" fill="none"/><path d="M644.1 514.8q-2.2 4.3 0 8.6" stroke="#0f3e46" stroke-width="0.9" fill="none"/><circle cx="604" cy="519.1" r="0.9" fill="#6cc6d6"/><rect x="659.5" y="512.6" width="53.5" height="13" fill="#1f6671"/><rect x="659.5" y="525.6" width="53.5" height="1.9" fill="#d9d2d2"/><ellipse cx="673" cy="519.1" rx="7.6" ry="6" fill="#1b5e68"/><ellipse cx="704.3" cy="519.1" rx="7.6" ry="6" fill="#1b5e68"/><rect x="681.7" y="514.7" width="14.2" height="8.8" fill="#14535d"/><path d="M666.8 516.8c1 -1.2 5 -2.3 9.2 -2.2c3.3 1.2 3.3 7.8 0 9c-4.2 .1 -8.2 -1 -9.2 -2.2c-.6 -1 -.6 -3.6 0 -4.6z" fill="#a0cdc6"/><path d="M710.5 516.8c-1 -1.2 -5 -2.3 -9.2 -2.2c-3.3 1.2 -3.3 7.8 0 9c4.2 .1 8.2 -1 9.2 -2.2c.6 -1 .6 -3.6 0 -4.6z" fill="#a0cdc6"/><path d="M675.2 514.8q2.2 4.3 0 8.6" stroke="#0f3e46" stroke-width="0.9" fill="none"/><path d="M702.1 514.8q-2.2 4.3 0 8.6" stroke="#0f3e46" stroke-width="0.9" fill="none"/><circle cx="661.5" cy="519.1" r="0.9" fill="#6cc6d6"/><rect x="716" y="512" width="54.5" height="14.85" fill="#46294b"/><rect x="717.3" y="525.55" width="51.9" height="1.5" fill="#5b4352"/><ellipse cx="729.5" cy="519.32" rx="7.6" ry="6" fill="#40244a"/><ellipse cx="761.8" cy="519.32" rx="7.6" ry="6" fill="#40244a"/><rect x="738.2" y="514.92" width="15.2" height="8.8" fill="#2f1734"/><path d="M723.3 517.02c1 -1.2 5 -2.3 9.2 -2.2c3.3 1.2 3.3 7.8 0 9c-4.2 .1 -8.2 -1 -9.2 -2.2c-.6 -1 -.6 -3.6 0 -4.6z" fill="#e1a3b5"/><path d="M768 517.02c-1 -1.2 -5 -2.3 -9.2 -2.2c-3.3 1.2 -3.3 7.8 0 9c4.2 .1 8.2 -1 9.2 -2.2c.6 -1 .6 -3.6 0 -4.6z" fill="#e1a3b5"/><path d="M731.7 515.02q2.2 4.3 0 8.6" stroke="#2a1230" stroke-width="0.9" fill="none"/><path d="M759.6 515.02q-2.2 4.3 0 8.6" stroke="#2a1230" stroke-width="0.9" fill="none"/><circle cx="718" cy="519.32" r="0.9" fill="#b49ac0"/><rect x="773.5" y="512" width="54.5" height="14.85" fill="#46294b"/><rect x="774.8" y="525.55" width="51.9" height="1.5" fill="#5b4352"/><ellipse cx="787" cy="519.32" rx="7.6" ry="6" fill="#40244a"/><ellipse cx="819.3" cy="519.32" rx="7.6" ry="6" fill="#40244a"/><rect x="795.7" y="514.92" width="15.2" height="8.8" fill="#2f1734"/><path d="M780.8 517.02c1 -1.2 5 -2.3 9.2 -2.2c3.3 1.2 3.3 7.8 0 9c-4.2 .1 -8.2 -1 -9.2 -2.2c-.6 -1 -.6 -3.6 0 -4.6z" fill="#e1a3b5"/><path d="M825.5 517.02c-1 -1.2 -5 -2.3 -9.2 -2.2c-3.3 1.2 -3.3 7.8 0 9c4.2 .1 8.2 -1 9.2 -2.2c.6 -1 .6 -3.6 0 -4.6z" fill="#e1a3b5"/><path d="M789.2 515.02q2.2 4.3 0 8.6" stroke="#2a1230" stroke-width="0.9" fill="none"/><path d="M817.1 515.02q-2.2 4.3 0 8.6" stroke="#2a1230" stroke-width="0.9" fill="none"/><circle cx="775.5" cy="519.32" r="0.9" fill="#b49ac0"/><rect x="602" y="527.35" width="53" height="13" fill="#1f6671"/><rect x="602" y="540.35" width="53" height="1.9" fill="#d9d2d2"/><ellipse cx="615.5" cy="533.85" rx="7.6" ry="6" fill="#1b5e68"/><ellipse cx="646.3" cy="533.85" rx="7.6" ry="6" fill="#1b5e68"/><rect x="624.2" y="529.45" width="13.7" height="8.8" fill="#14535d"/><path d="M609.3 531.55c1 -1.2 5 -2.3 9.2 -2.2c3.3 1.2 3.3 7.8 0 9c-4.2 .1 -8.2 -1 -9.2 -2.2c-.6 -1 -.6 -3.6 0 -4.6z" fill="#a0cdc6"/><path d="M652.5 531.55c-1 -1.2 -5 -2.3 -9.2 -2.2c-3.3 1.2 -3.3 7.8 0 9c4.2 .1 8.2 -1 9.2 -2.2c.6 -1 .6 -3.6 0 -4.6z" fill="#a0cdc6"/><path d="M617.7 529.55q2.2 4.3 0 8.6" stroke="#0f3e46" stroke-width="0.9" fill="none"/><path d="M644.1 529.55q-2.2 4.3 0 8.6" stroke="#0f3e46" stroke-width="0.9" fill="none"/><circle cx="604" cy="533.85" r="0.9" fill="#6cc6d6"/><rect x="659.5" y="527.35" width="53.5" height="13" fill="#1f6671"/><rect x="659.5" y="540.35" width="53.5" height="1.9" fill="#d9d2d2"/><ellipse cx="673" cy="533.85" rx="7.6" ry="6" fill="#1b5e68"/><ellipse cx="704.3" cy="533.85" rx="7.6" ry="6" fill="#1b5e68"/><rect x="681.7" y="529.45" width="14.2" height="8.8" fill="#14535d"/><path d="M666.8 531.55c1 -1.2 5 -2.3 9.2 -2.2c3.3 1.2 3.3 7.8 0 9c-4.2 .1 -8.2 -1 -9.2 -2.2c-.6 -1 -.6 -3.6 0 -4.6z" fill="#a0cdc6"/><path d="M710.5 531.55c-1 -1.2 -5 -2.3 -9.2 -2.2c-3.3 1.2 -3.3 7.8 0 9c4.2 .1 8.2 -1 9.2 -2.2c.6 -1 .6 -3.6 0 -4.6z" fill="#a0cdc6"/><path d="M675.2 529.55q2.2 4.3 0 8.6" stroke="#0f3e46" stroke-width="0.9" fill="none"/><path d="M702.1 529.55q-2.2 4.3 0 8.6" stroke="#0f3e46" stroke-width="0.9" fill="none"/><circle cx="661.5" cy="533.85" r="0.9" fill="#6cc6d6"/><rect x="716" y="526.85" width="54.5" height="14.85" fill="#46294b"/><rect x="717.3" y="540.4" width="51.9" height="1.5" fill="#5b4352"/><ellipse cx="729.5" cy="534.17" rx="7.6" ry="6" fill="#40244a"/><ellipse cx="761.8" cy="534.17" rx="7.6" ry="6" fill="#40244a"/><rect x="738.2" y="529.77" width="15.2" height="8.8" fill="#2f1734"/><path d="M723.3 531.88c1 -1.2 5 -2.3 9.2 -2.2c3.3 1.2 3.3 7.8 0 9c-4.2 .1 -8.2 -1 -9.2 -2.2c-.6 -1 -.6 -3.6 0 -4.6z" fill="#e1a3b5"/><path d="M768 531.88c-1 -1.2 -5 -2.3 -9.2 -2.2c-3.3 1.2 -3.3 7.8 0 9c4.2 .1 8.2 -1 9.2 -2.2c.6 -1 .6 -3.6 0 -4.6z" fill="#e1a3b5"/><path d="M731.7 529.87q2.2 4.3 0 8.6" stroke="#2a1230" stroke-width="0.9" fill="none"/><path d="M759.6 529.87q-2.2 4.3 0 8.6" stroke="#2a1230" stroke-width="0.9" fill="none"/><circle cx="718" cy="534.17" r="0.9" fill="#b49ac0"/><rect x="773.5" y="526.85" width="54.5" height="14.85" fill="#46294b"/><rect x="774.8" y="540.4" width="51.9" height="1.5" fill="#5b4352"/><ellipse cx="787" cy="534.17" rx="7.6" ry="6" fill="#40244a"/><ellipse cx="819.3" cy="534.17" rx="7.6" ry="6" fill="#40244a"/><rect x="795.7" y="529.77" width="15.2" height="8.8" fill="#2f1734"/><path d="M780.8 531.88c1 -1.2 5 -2.3 9.2 -2.2c3.3 1.2 3.3 7.8 0 9c-4.2 .1 -8.2 -1 -9.2 -2.2c-.6 -1 -.6 -3.6 0 -4.6z" fill="#e1a3b5"/><path d="M825.5 531.88c-1 -1.2 -5 -2.3 -9.2 -2.2c-3.3 1.2 -3.3 7.8 0 9c4.2 .1 8.2 -1 9.2 -2.2c.6 -1 .6 -3.6 0 -4.6z" fill="#e1a3b5"/><path d="M789.2 529.87q2.2 4.3 0 8.6" stroke="#2a1230" stroke-width="0.9" fill="none"/><path d="M817.1 529.87q-2.2 4.3 0 8.6" stroke="#2a1230" stroke-width="0.9" fill="none"/><circle cx="775.5" cy="534.17" r="0.9" fill="#b49ac0"/><rect x="602" y="542.1" width="53" height="13" fill="#1f6671"/><rect x="602" y="555.1" width="53" height="1.9" fill="#d9d2d2"/><ellipse cx="615.5" cy="548.6" rx="7.6" ry="6" fill="#1b5e68"/><ellipse cx="646.3" cy="548.6" rx="7.6" ry="6" fill="#1b5e68"/><rect x="624.2" y="544.2" width="13.7" height="8.8" fill="#14535d"/><path d="M609.3 546.3c1 -1.2 5 -2.3 9.2 -2.2c3.3 1.2 3.3 7.8 0 9c-4.2 .1 -8.2 -1 -9.2 -2.2c-.6 -1 -.6 -3.6 0 -4.6z" fill="#a0cdc6"/><path d="M652.5 546.3c-1 -1.2 -5 -2.3 -9.2 -2.2c-3.3 1.2 -3.3 7.8 0 9c4.2 .1 8.2 -1 9.2 -2.2c.6 -1 .6 -3.6 0 -4.6z" fill="#a0cdc6"/><path d="M617.7 544.3q2.2 4.3 0 8.6" stroke="#0f3e46" stroke-width="0.9" fill="none"/><path d="M644.1 544.3q-2.2 4.3 0 8.6" stroke="#0f3e46" stroke-width="0.9" fill="none"/><circle cx="604" cy="548.6" r="0.9" fill="#6cc6d6"/><rect x="659.5" y="542.1" width="53.5" height="13" fill="#1f6671"/><rect x="659.5" y="555.1" width="53.5" height="1.9" fill="#d9d2d2"/><ellipse cx="673" cy="548.6" rx="7.6" ry="6" fill="#1b5e68"/><ellipse cx="704.3" cy="548.6" rx="7.6" ry="6" fill="#1b5e68"/><rect x="681.7" y="544.2" width="14.2" height="8.8" fill="#14535d"/><path d="M666.8 546.3c1 -1.2 5 -2.3 9.2 -2.2c3.3 1.2 3.3 7.8 0 9c-4.2 .1 -8.2 -1 -9.2 -2.2c-.6 -1 -.6 -3.6 0 -4.6z" fill="#a0cdc6"/><path d="M710.5 546.3c-1 -1.2 -5 -2.3 -9.2 -2.2c-3.3 1.2 -3.3 7.8 0 9c4.2 .1 8.2 -1 9.2 -2.2c.6 -1 .6 -3.6 0 -4.6z" fill="#a0cdc6"/><path d="M675.2 544.3q2.2 4.3 0 8.6" stroke="#0f3e46" stroke-width="0.9" fill="none"/><path d="M702.1 544.3q-2.2 4.3 0 8.6" stroke="#0f3e46" stroke-width="0.9" fill="none"/><circle cx="661.5" cy="548.6" r="0.9" fill="#6cc6d6"/><rect x="716" y="541.7" width="54.5" height="14.85" fill="#46294b"/><rect x="717.3" y="555.25" width="51.9" height="1.5" fill="#5b4352"/><ellipse cx="729.5" cy="549.02" rx="7.6" ry="6" fill="#40244a"/><ellipse cx="761.8" cy="549.02" rx="7.6" ry="6" fill="#40244a"/><rect x="738.2" y="544.62" width="15.2" height="8.8" fill="#2f1734"/><path d="M723.3 546.73c1 -1.2 5 -2.3 9.2 -2.2c3.3 1.2 3.3 7.8 0 9c-4.2 .1 -8.2 -1 -9.2 -2.2c-.6 -1 -.6 -3.6 0 -4.6z" fill="#e1a3b5"/><path d="M768 546.73c-1 -1.2 -5 -2.3 -9.2 -2.2c-3.3 1.2 -3.3 7.8 0 9c4.2 .1 8.2 -1 9.2 -2.2c.6 -1 .6 -3.6 0 -4.6z" fill="#e1a3b5"/><path d="M731.7 544.72q2.2 4.3 0 8.6" stroke="#2a1230" stroke-width="0.9" fill="none"/><path d="M759.6 544.72q-2.2 4.3 0 8.6" stroke="#2a1230" stroke-width="0.9" fill="none"/><circle cx="718" cy="549.02" r="0.9" fill="#b49ac0"/><rect x="773.5" y="541.7" width="54.5" height="14.85" fill="#46294b"/><rect x="774.8" y="555.25" width="51.9" height="1.5" fill="#5b4352"/><ellipse cx="787" cy="549.02" rx="7.6" ry="6" fill="#40244a"/><ellipse cx="819.3" cy="549.02" rx="7.6" ry="6" fill="#40244a"/><rect x="795.7" y="544.62" width="15.2" height="8.8" fill="#2f1734"/><path d="M780.8 546.73c1 -1.2 5 -2.3 9.2 -2.2c3.3 1.2 3.3 7.8 0 9c-4.2 .1 -8.2 -1 -9.2 -2.2c-.6 -1 -.6 -3.6 0 -4.6z" fill="#e1a3b5"/><path d="M825.5 546.73c-1 -1.2 -5 -2.3 -9.2 -2.2c-3.3 1.2 -3.3 7.8 0 9c4.2 .1 8.2 -1 9.2 -2.2c.6 -1 .6 -3.6 0 -4.6z" fill="#e1a3b5"/><path d="M789.2 544.72q2.2 4.3 0 8.6" stroke="#2a1230" stroke-width="0.9" fill="none"/><path d="M817.1 544.72q-2.2 4.3 0 8.6" stroke="#2a1230" stroke-width="0.9" fill="none"/><circle cx="775.5" cy="549.02" r="0.9" fill="#b49ac0"/><rect x="602" y="556.85" width="53" height="13" fill="#1f6671"/><rect x="602" y="569.85" width="53" height="1.9" fill="#d9d2d2"/><ellipse cx="615.5" cy="563.35" rx="7.6" ry="6" fill="#1b5e68"/><ellipse cx="646.3" cy="563.35" rx="7.6" ry="6" fill="#1b5e68"/><rect x="624.2" y="558.95" width="13.7" height="8.8" fill="#14535d"/><path d="M609.3 561.05c1 -1.2 5 -2.3 9.2 -2.2c3.3 1.2 3.3 7.8 0 9c-4.2 .1 -8.2 -1 -9.2 -2.2c-.6 -1 -.6 -3.6 0 -4.6z" fill="#a0cdc6"/><path d="M652.5 561.05c-1 -1.2 -5 -2.3 -9.2 -2.2c-3.3 1.2 -3.3 7.8 0 9c4.2 .1 8.2 -1 9.2 -2.2c.6 -1 .6 -3.6 0 -4.6z" fill="#a0cdc6"/><path d="M617.7 559.05q2.2 4.3 0 8.6" stroke="#0f3e46" stroke-width="0.9" fill="none"/><path d="M644.1 559.05q-2.2 4.3 0 8.6" stroke="#0f3e46" stroke-width="0.9" fill="none"/><circle cx="604" cy="563.35" r="0.9" fill="#6cc6d6"/><rect x="659.5" y="556.85" width="53.5" height="13" fill="#1f6671"/><rect x="659.5" y="569.85" width="53.5" height="1.9" fill="#d9d2d2"/><ellipse cx="673" cy="563.35" rx="7.6" ry="6" fill="#1b5e68"/><ellipse cx="704.3" cy="563.35" rx="7.6" ry="6" fill="#1b5e68"/><rect x="681.7" y="558.95" width="14.2" height="8.8" fill="#14535d"/><path d="M666.8 561.05c1 -1.2 5 -2.3 9.2 -2.2c3.3 1.2 3.3 7.8 0 9c-4.2 .1 -8.2 -1 -9.2 -2.2c-.6 -1 -.6 -3.6 0 -4.6z" fill="#a0cdc6"/><path d="M710.5 561.05c-1 -1.2 -5 -2.3 -9.2 -2.2c-3.3 1.2 -3.3 7.8 0 9c4.2 .1 8.2 -1 9.2 -2.2c.6 -1 .6 -3.6 0 -4.6z" fill="#a0cdc6"/><path d="M675.2 559.05q2.2 4.3 0 8.6" stroke="#0f3e46" stroke-width="0.9" fill="none"/><path d="M702.1 559.05q-2.2 4.3 0 8.6" stroke="#0f3e46" stroke-width="0.9" fill="none"/><circle cx="661.5" cy="563.35" r="0.9" fill="#6cc6d6"/><rect x="716" y="556.55" width="54.5" height="14.85" fill="#46294b"/><rect x="717.3" y="570.1" width="51.9" height="1.5" fill="#5b4352"/><ellipse cx="729.5" cy="563.87" rx="7.6" ry="6" fill="#40244a"/><ellipse cx="761.8" cy="563.87" rx="7.6" ry="6" fill="#40244a"/><rect x="738.2" y="559.47" width="15.2" height="8.8" fill="#2f1734"/><path d="M723.3 561.57c1 -1.2 5 -2.3 9.2 -2.2c3.3 1.2 3.3 7.8 0 9c-4.2 .1 -8.2 -1 -9.2 -2.2c-.6 -1 -.6 -3.6 0 -4.6z" fill="#e1a3b5"/><path d="M768 561.57c-1 -1.2 -5 -2.3 -9.2 -2.2c-3.3 1.2 -3.3 7.8 0 9c4.2 .1 8.2 -1 9.2 -2.2c.6 -1 .6 -3.6 0 -4.6z" fill="#e1a3b5"/><path d="M731.7 559.57q2.2 4.3 0 8.6" stroke="#2a1230" stroke-width="0.9" fill="none"/><path d="M759.6 559.57q-2.2 4.3 0 8.6" stroke="#2a1230" stroke-width="0.9" fill="none"/><circle cx="718" cy="563.87" r="0.9" fill="#b49ac0"/><rect x="773.5" y="556.55" width="54.5" height="14.85" fill="#46294b"/><rect x="774.8" y="570.1" width="51.9" height="1.5" fill="#5b4352"/><ellipse cx="787" cy="563.87" rx="7.6" ry="6" fill="#40244a"/><ellipse cx="819.3" cy="563.87" rx="7.6" ry="6" fill="#40244a"/><rect x="795.7" y="559.47" width="15.2" height="8.8" fill="#2f1734"/><path d="M780.8 561.57c1 -1.2 5 -2.3 9.2 -2.2c3.3 1.2 3.3 7.8 0 9c-4.2 .1 -8.2 -1 -9.2 -2.2c-.6 -1 -.6 -3.6 0 -4.6z" fill="#e1a3b5"/><path d="M825.5 561.57c-1 -1.2 -5 -2.3 -9.2 -2.2c-3.3 1.2 -3.3 7.8 0 9c4.2 .1 8.2 -1 9.2 -2.2c.6 -1 .6 -3.6 0 -4.6z" fill="#e1a3b5"/><path d="M789.2 559.57q2.2 4.3 0 8.6" stroke="#2a1230" stroke-width="0.9" fill="none"/><path d="M817.1 559.57q-2.2 4.3 0 8.6" stroke="#2a1230" stroke-width="0.9" fill="none"/><circle cx="775.5" cy="563.87" r="0.9" fill="#b49ac0"/><rect x="602" y="571.6" width="53" height="13" fill="#1f6671"/><rect x="602" y="584.6" width="53" height="1.9" fill="#d9d2d2"/><ellipse cx="615.5" cy="578.1" rx="7.6" ry="6" fill="#1b5e68"/><ellipse cx="646.3" cy="578.1" rx="7.6" ry="6" fill="#1b5e68"/><rect x="624.2" y="573.7" width="13.7" height="8.8" fill="#14535d"/><path d="M609.3 575.8c1 -1.2 5 -2.3 9.2 -2.2c3.3 1.2 3.3 7.8 0 9c-4.2 .1 -8.2 -1 -9.2 -2.2c-.6 -1 -.6 -3.6 0 -4.6z" fill="#a0cdc6"/><path d="M652.5 575.8c-1 -1.2 -5 -2.3 -9.2 -2.2c-3.3 1.2 -3.3 7.8 0 9c4.2 .1 8.2 -1 9.2 -2.2c.6 -1 .6 -3.6 0 -4.6z" fill="#a0cdc6"/><path d="M617.7 573.8q2.2 4.3 0 8.6" stroke="#0f3e46" stroke-width="0.9" fill="none"/><path d="M644.1 573.8q-2.2 4.3 0 8.6" stroke="#0f3e46" stroke-width="0.9" fill="none"/><circle cx="604" cy="578.1" r="0.9" fill="#6cc6d6"/><rect x="659" y="571.4" width="54.5" height="14.85" fill="#46294b"/><rect x="660.3" y="584.95" width="51.9" height="1.5" fill="#5b4352"/><ellipse cx="672.5" cy="578.72" rx="7.6" ry="6" fill="#40244a"/><ellipse cx="704.8" cy="578.72" rx="7.6" ry="6" fill="#40244a"/><rect x="681.2" y="574.32" width="15.2" height="8.8" fill="#2f1734"/><path d="M666.3 576.42c1 -1.2 5 -2.3 9.2 -2.2c3.3 1.2 3.3 7.8 0 9c-4.2 .1 -8.2 -1 -9.2 -2.2c-.6 -1 -.6 -3.6 0 -4.6z" fill="#e1a3b5"/><path d="M711 576.42c-1 -1.2 -5 -2.3 -9.2 -2.2c-3.3 1.2 -3.3 7.8 0 9c4.2 .1 8.2 -1 9.2 -2.2c.6 -1 .6 -3.6 0 -4.6z" fill="#e1a3b5"/><path d="M674.7 574.42q2.2 4.3 0 8.6" stroke="#2a1230" stroke-width="0.9" fill="none"/><path d="M702.6 574.42q-2.2 4.3 0 8.6" stroke="#2a1230" stroke-width="0.9" fill="none"/><circle cx="661" cy="578.72" r="0.9" fill="#b49ac0"/><rect x="716" y="571.4" width="54.5" height="14.85" fill="#46294b"/><rect x="717.3" y="584.95" width="51.9" height="1.5" fill="#5b4352"/><ellipse cx="729.5" cy="578.72" rx="7.6" ry="6" fill="#40244a"/><ellipse cx="761.8" cy="578.72" rx="7.6" ry="6" fill="#40244a"/><rect x="738.2" y="574.32" width="15.2" height="8.8" fill="#2f1734"/><path d="M723.3 576.42c1 -1.2 5 -2.3 9.2 -2.2c3.3 1.2 3.3 7.8 0 9c-4.2 .1 -8.2 -1 -9.2 -2.2c-.6 -1 -.6 -3.6 0 -4.6z" fill="#e1a3b5"/><path d="M768 576.42c-1 -1.2 -5 -2.3 -9.2 -2.2c-3.3 1.2 -3.3 7.8 0 9c4.2 .1 8.2 -1 9.2 -2.2c.6 -1 .6 -3.6 0 -4.6z" fill="#e1a3b5"/><path d="M731.7 574.42q2.2 4.3 0 8.6" stroke="#2a1230" stroke-width="0.9" fill="none"/><path d="M759.6 574.42q-2.2 4.3 0 8.6" stroke="#2a1230" stroke-width="0.9" fill="none"/><circle cx="718" cy="578.72" r="0.9" fill="#b49ac0"/><rect x="773.5" y="571.4" width="54.5" height="14.85" fill="#46294b"/><rect x="774.8" y="584.95" width="51.9" height="1.5" fill="#5b4352"/><ellipse cx="787" cy="578.72" rx="7.6" ry="6" fill="#40244a"/><ellipse cx="819.3" cy="578.72" rx="7.6" ry="6" fill="#40244a"/><rect x="795.7" y="574.32" width="15.2" height="8.8" fill="#2f1734"/><path d="M780.8 576.42c1 -1.2 5 -2.3 9.2 -2.2c3.3 1.2 3.3 7.8 0 9c-4.2 .1 -8.2 -1 -9.2 -2.2c-.6 -1 -.6 -3.6 0 -4.6z" fill="#e1a3b5"/><path d="M825.5 576.42c-1 -1.2 -5 -2.3 -9.2 -2.2c-3.3 1.2 -3.3 7.8 0 9c4.2 .1 8.2 -1 9.2 -2.2c.6 -1 .6 -3.6 0 -4.6z" fill="#e1a3b5"/><path d="M789.2 574.42q2.2 4.3 0 8.6" stroke="#2a1230" stroke-width="0.9" fill="none"/><path d="M817.1 574.42q-2.2 4.3 0 8.6" stroke="#2a1230" stroke-width="0.9" fill="none"/><circle cx="775.5" cy="578.72" r="0.9" fill="#b49ac0"/><rect x="602" y="586.35" width="53" height="13" fill="#1f6671"/><rect x="602" y="599.35" width="53" height="1.9" fill="#d9d2d2"/><ellipse cx="615.5" cy="592.85" rx="7.6" ry="6" fill="#1b5e68"/><ellipse cx="646.3" cy="592.85" rx="7.6" ry="6" fill="#1b5e68"/><rect x="624.2" y="588.45" width="13.7" height="8.8" fill="#14535d"/><path d="M609.3 590.55c1 -1.2 5 -2.3 9.2 -2.2c3.3 1.2 3.3 7.8 0 9c-4.2 .1 -8.2 -1 -9.2 -2.2c-.6 -1 -.6 -3.6 0 -4.6z" fill="#a0cdc6"/><path d="M652.5 590.55c-1 -1.2 -5 -2.3 -9.2 -2.2c-3.3 1.2 -3.3 7.8 0 9c4.2 .1 8.2 -1 9.2 -2.2c.6 -1 .6 -3.6 0 -4.6z" fill="#a0cdc6"/><path d="M617.7 588.55q2.2 4.3 0 8.6" stroke="#0f3e46" stroke-width="0.9" fill="none"/><path d="M644.1 588.55q-2.2 4.3 0 8.6" stroke="#0f3e46" stroke-width="0.9" fill="none"/><circle cx="604" cy="592.85" r="0.9" fill="#6cc6d6"/><rect x="659" y="586.25" width="54.5" height="14.85" fill="#46294b"/><rect x="660.3" y="599.8" width="51.9" height="1.5" fill="#5b4352"/><ellipse cx="672.5" cy="593.57" rx="7.6" ry="6" fill="#40244a"/><ellipse cx="704.8" cy="593.57" rx="7.6" ry="6" fill="#40244a"/><rect x="681.2" y="589.17" width="15.2" height="8.8" fill="#2f1734"/><path d="M666.3 591.27c1 -1.2 5 -2.3 9.2 -2.2c3.3 1.2 3.3 7.8 0 9c-4.2 .1 -8.2 -1 -9.2 -2.2c-.6 -1 -.6 -3.6 0 -4.6z" fill="#e1a3b5"/><path d="M711 591.27c-1 -1.2 -5 -2.3 -9.2 -2.2c-3.3 1.2 -3.3 7.8 0 9c4.2 .1 8.2 -1 9.2 -2.2c.6 -1 .6 -3.6 0 -4.6z" fill="#e1a3b5"/><path d="M674.7 589.27q2.2 4.3 0 8.6" stroke="#2a1230" stroke-width="0.9" fill="none"/><path d="M702.6 589.27q-2.2 4.3 0 8.6" stroke="#2a1230" stroke-width="0.9" fill="none"/><circle cx="661" cy="593.57" r="0.9" fill="#b49ac0"/><rect x="716" y="586.25" width="54.5" height="14.85" fill="#46294b"/><rect x="717.3" y="599.8" width="51.9" height="1.5" fill="#5b4352"/><ellipse cx="729.5" cy="593.57" rx="7.6" ry="6" fill="#40244a"/><ellipse cx="761.8" cy="593.57" rx="7.6" ry="6" fill="#40244a"/><rect x="738.2" y="589.17" width="15.2" height="8.8" fill="#2f1734"/><path d="M723.3 591.27c1 -1.2 5 -2.3 9.2 -2.2c3.3 1.2 3.3 7.8 0 9c-4.2 .1 -8.2 -1 -9.2 -2.2c-.6 -1 -.6 -3.6 0 -4.6z" fill="#e1a3b5"/><path d="M768 591.27c-1 -1.2 -5 -2.3 -9.2 -2.2c-3.3 1.2 -3.3 7.8 0 9c4.2 .1 8.2 -1 9.2 -2.2c.6 -1 .6 -3.6 0 -4.6z" fill="#e1a3b5"/><path d="M731.7 589.27q2.2 4.3 0 8.6" stroke="#2a1230" stroke-width="0.9" fill="none"/><path d="M759.6 589.27q-2.2 4.3 0 8.6" stroke="#2a1230" stroke-width="0.9" fill="none"/><circle cx="718" cy="593.57" r="0.9" fill="#b49ac0"/><rect x="773.5" y="586.25" width="54.5" height="14.85" fill="#46294b"/><rect x="774.8" y="599.8" width="51.9" height="1.5" fill="#5b4352"/><ellipse cx="787" cy="593.57" rx="7.6" ry="6" fill="#40244a"/><ellipse cx="819.3" cy="593.57" rx="7.6" ry="6" fill="#40244a"/><rect x="795.7" y="589.17" width="15.2" height="8.8" fill="#2f1734"/><path d="M780.8 591.27c1 -1.2 5 -2.3 9.2 -2.2c3.3 1.2 3.3 7.8 0 9c-4.2 .1 -8.2 -1 -9.2 -2.2c-.6 -1 -.6 -3.6 0 -4.6z" fill="#e1a3b5"/><path d="M825.5 591.27c-1 -1.2 -5 -2.3 -9.2 -2.2c-3.3 1.2 -3.3 7.8 0 9c4.2 .1 8.2 -1 9.2 -2.2c.6 -1 .6 -3.6 0 -4.6z" fill="#e1a3b5"/><path d="M789.2 589.27q2.2 4.3 0 8.6" stroke="#2a1230" stroke-width="0.9" fill="none"/><path d="M817.1 589.27q-2.2 4.3 0 8.6" stroke="#2a1230" stroke-width="0.9" fill="none"/><circle cx="775.5" cy="593.57" r="0.9" fill="#b49ac0"/><rect x="547" y="484.5" width="164.5" height="26.5" fill="#2b2b2b" stroke="#0a0a0a" stroke-width="1"/><rect x="547" y="483.6" width="303" height="1.2" fill="#9a9a9a"/><rect x="547" y="510.8" width="303" height="1.2" fill="#9a9a9a"/><rect x="555.3" y="486" width="4.5" height="10.7" fill="#e6e6e6"/><rect x="563.6" y="487" width="13.6" height="9" fill="#333"/><rect x="566" y="489" width="1.6" height="1.6" fill="#ddd"/><rect x="569.6" y="489" width="1.6" height="1.6" fill="#ddd"/><rect x="573.2" y="489" width="1.6" height="1.6" fill="#ddd"/><rect x="565.5" y="491.5" width="9.8" height="2.2" fill="#bbb"/><rect x="609" y="487.5" width="6" height="7.5" fill="#e9e9e9"/><rect x="643.4" y="487.5" width="6" height="7.5" fill="#e9e9e9"/><rect x="619.3" y="486" width="20.7" height="11" fill="#dcb9a0" stroke="#eee" stroke-width="0.6"/><rect x="627" y="486" width="5" height="11" fill="#aaa"/><rect x="699" y="486" width="5" height="11" fill="#e6e6e6"/><rect x="555.3" y="499" width="4.5" height="10.7" fill="#e6e6e6"/><rect x="563.6" y="500" width="13.6" height="9" fill="#333"/><rect x="566" y="502" width="1.6" height="1.6" fill="#ddd"/><rect x="569.6" y="502" width="1.6" height="1.6" fill="#ddd"/><rect x="573.2" y="502" width="1.6" height="1.6" fill="#ddd"/><rect x="565.5" y="504.5" width="9.8" height="2.2" fill="#bbb"/><rect x="609" y="500.5" width="6" height="7.5" fill="#e9e9e9"/><rect x="643.4" y="500.5" width="6" height="7.5" fill="#e9e9e9"/><rect x="619.3" y="499" width="20.7" height="11" fill="#dcb9a0" stroke="#eee" stroke-width="0.6"/><rect x="627" y="499" width="5" height="11" fill="#aaa"/><rect x="699" y="499" width="5" height="11" fill="#e6e6e6"/><rect x="711.5" y="484.8" width="39" height="26" fill="#dbb79f"/><rect x="724.5" y="484.8" width="1" height="26" fill="#c4a08a"/><rect x="735" y="484.8" width="1" height="26" fill="#c4a08a"/><rect x="750.3" y="485.6" width="13.7" height="13" fill="#fff" stroke="#bbb" stroke-width="0.5"/><path d="M757.5 487.5l2.5 4h-5z" fill="none" stroke="#333" stroke-width="0.5"/><circle cx="758" cy="495" r="1.4" fill="#222"/><rect x="782.4" y="486" width="67.6" height="23.5" fill="#c4c4c4" stroke="#8f8f8f" stroke-width="0.8"/>
<use href="#encg" transform="translate(1237.6 270.8) scale(0.3415) translate(-357.5 -373)"/><use href="#encg" transform="translate(1237.6 425.1) scale(0.3415) translate(-357.5 -373)"/><use href="#encg" transform="translate(1237.6 579.4) scale(0.3415) translate(-357.5 -373)"/><use href="#encg" transform="translate(1237.6 733.7) scale(0.3415) translate(-357.5 -373)"/><use href="#encg" transform="translate(1237.6 888) scale(0.3415) translate(-357.5 -373)"/><use href="#encg" transform="translate(1237.6 1042.3) scale(0.3415) translate(-357.5 -373)"/>
<rect x="1229" y="129" width="9" height="68" fill="#333"/><rect x="1406" y="129" width="9" height="68" fill="#333"/><circle cx="1231.5" cy="136" r="1.2" fill="#ddd"/><circle cx="1231.5" cy="148" r="1.2" fill="#ddd"/><circle cx="1410" cy="136" r="1.2" fill="#ddd"/><circle cx="1410" cy="148" r="1.2" fill="#ddd"/><rect x="1238.5" y="129.5" width="167.5" height="67" fill="#141414" stroke="#f2f2f2" stroke-width="1"/><rect x="1243.5" y="133.5" width="35.5" height="4.5" fill="#9a9a9a"/><rect x="1248" y="133.5" width="0.8" height="4.5" fill="#666"/><rect x="1243.5" y="144.65" width="35.5" height="4.5" fill="#9a9a9a"/><rect x="1248" y="144.65" width="0.8" height="4.5" fill="#666"/><rect x="1243.5" y="155.8" width="35.5" height="4.5" fill="#9a9a9a"/><rect x="1248" y="155.8" width="0.8" height="4.5" fill="#666"/><rect x="1238.5" y="164.25" width="41.5" height="10" fill="#3b5a2e"/><rect x="1243.5" y="166.95" width="35.5" height="4.5" fill="#b9d3a6"/><rect x="1248" y="166.95" width="0.8" height="4.5" fill="#7c9a6c"/><rect x="1238.5" y="175.4" width="41.5" height="10" fill="#3b5a2e"/><rect x="1243.5" y="178.1" width="35.5" height="4.5" fill="#b9d3a6"/><rect x="1248" y="178.1" width="0.8" height="4.5" fill="#7c9a6c"/><rect x="1243.5" y="189.25" width="35.5" height="4.5" fill="#9a9a9a"/><rect x="1248" y="189.25" width="0.8" height="4.5" fill="#666"/><rect x="1285.2" y="133.5" width="35.5" height="4.5" fill="#9a9a9a"/><rect x="1289.7" y="133.5" width="0.8" height="4.5" fill="#666"/><rect x="1285.2" y="144.65" width="35.5" height="4.5" fill="#9a9a9a"/><rect x="1289.7" y="144.65" width="0.8" height="4.5" fill="#666"/><rect x="1285.2" y="155.8" width="35.5" height="4.5" fill="#9a9a9a"/><rect x="1289.7" y="155.8" width="0.8" height="4.5" fill="#666"/><rect x="1280.2" y="164.25" width="41.5" height="10" fill="#3b5a2e"/><rect x="1285.2" y="166.95" width="35.5" height="4.5" fill="#b9d3a6"/><rect x="1289.7" y="166.95" width="0.8" height="4.5" fill="#7c9a6c"/><rect x="1285.2" y="178.1" width="35.5" height="4.5" fill="#9a9a9a"/><rect x="1289.7" y="178.1" width="0.8" height="4.5" fill="#666"/><rect x="1285.2" y="189.25" width="35.5" height="4.5" fill="#9a9a9a"/><rect x="1289.7" y="189.25" width="0.8" height="4.5" fill="#666"/><rect x="1327.2" y="133.5" width="35.5" height="4.5" fill="#9a9a9a"/><rect x="1331.7" y="133.5" width="0.8" height="4.5" fill="#666"/><rect x="1327.2" y="144.65" width="35.5" height="4.5" fill="#9a9a9a"/><rect x="1331.7" y="144.65" width="0.8" height="4.5" fill="#666"/><rect x="1327.2" y="155.8" width="35.5" height="4.5" fill="#9a9a9a"/><rect x="1331.7" y="155.8" width="0.8" height="4.5" fill="#666"/><rect x="1322.2" y="164.25" width="41.5" height="10" fill="#3b5a2e"/><rect x="1327.2" y="166.95" width="35.5" height="4.5" fill="#b9d3a6"/><rect x="1331.7" y="166.95" width="0.8" height="4.5" fill="#7c9a6c"/><rect x="1327.2" y="178.1" width="35.5" height="4.5" fill="#9a9a9a"/><rect x="1331.7" y="178.1" width="0.8" height="4.5" fill="#666"/><rect x="1327.2" y="189.25" width="35.5" height="4.5" fill="#9a9a9a"/><rect x="1331.7" y="189.25" width="0.8" height="4.5" fill="#666"/><rect x="1368.6" y="133.5" width="35.5" height="4.5" fill="#9a9a9a"/><rect x="1373.1" y="133.5" width="0.8" height="4.5" fill="#666"/><rect x="1368.6" y="144.65" width="35.5" height="4.5" fill="#9a9a9a"/><rect x="1373.1" y="144.65" width="0.8" height="4.5" fill="#666"/><rect x="1368.6" y="155.8" width="35.5" height="4.5" fill="#9a9a9a"/><rect x="1373.1" y="155.8" width="0.8" height="4.5" fill="#666"/><rect x="1363.6" y="164.25" width="41.5" height="10" fill="#3b5a2e"/><rect x="1368.6" y="166.95" width="35.5" height="4.5" fill="#b9d3a6"/><rect x="1373.1" y="166.95" width="0.8" height="4.5" fill="#7c9a6c"/><rect x="1368.6" y="178.1" width="35.5" height="4.5" fill="#9a9a9a"/><rect x="1373.1" y="178.1" width="0.8" height="4.5" fill="#666"/><rect x="1368.6" y="189.25" width="35.5" height="4.5" fill="#9a9a9a"/><rect x="1373.1" y="189.25" width="0.8" height="4.5" fill="#666"/><rect x="1279.7" y="129" width="1.2" height="68" fill="#eee"/><rect x="1321.6" y="129" width="1.2" height="68" fill="#eee"/><rect x="1362.9" y="129" width="1.2" height="68" fill="#eee"/>
</svg>
</body></html>
